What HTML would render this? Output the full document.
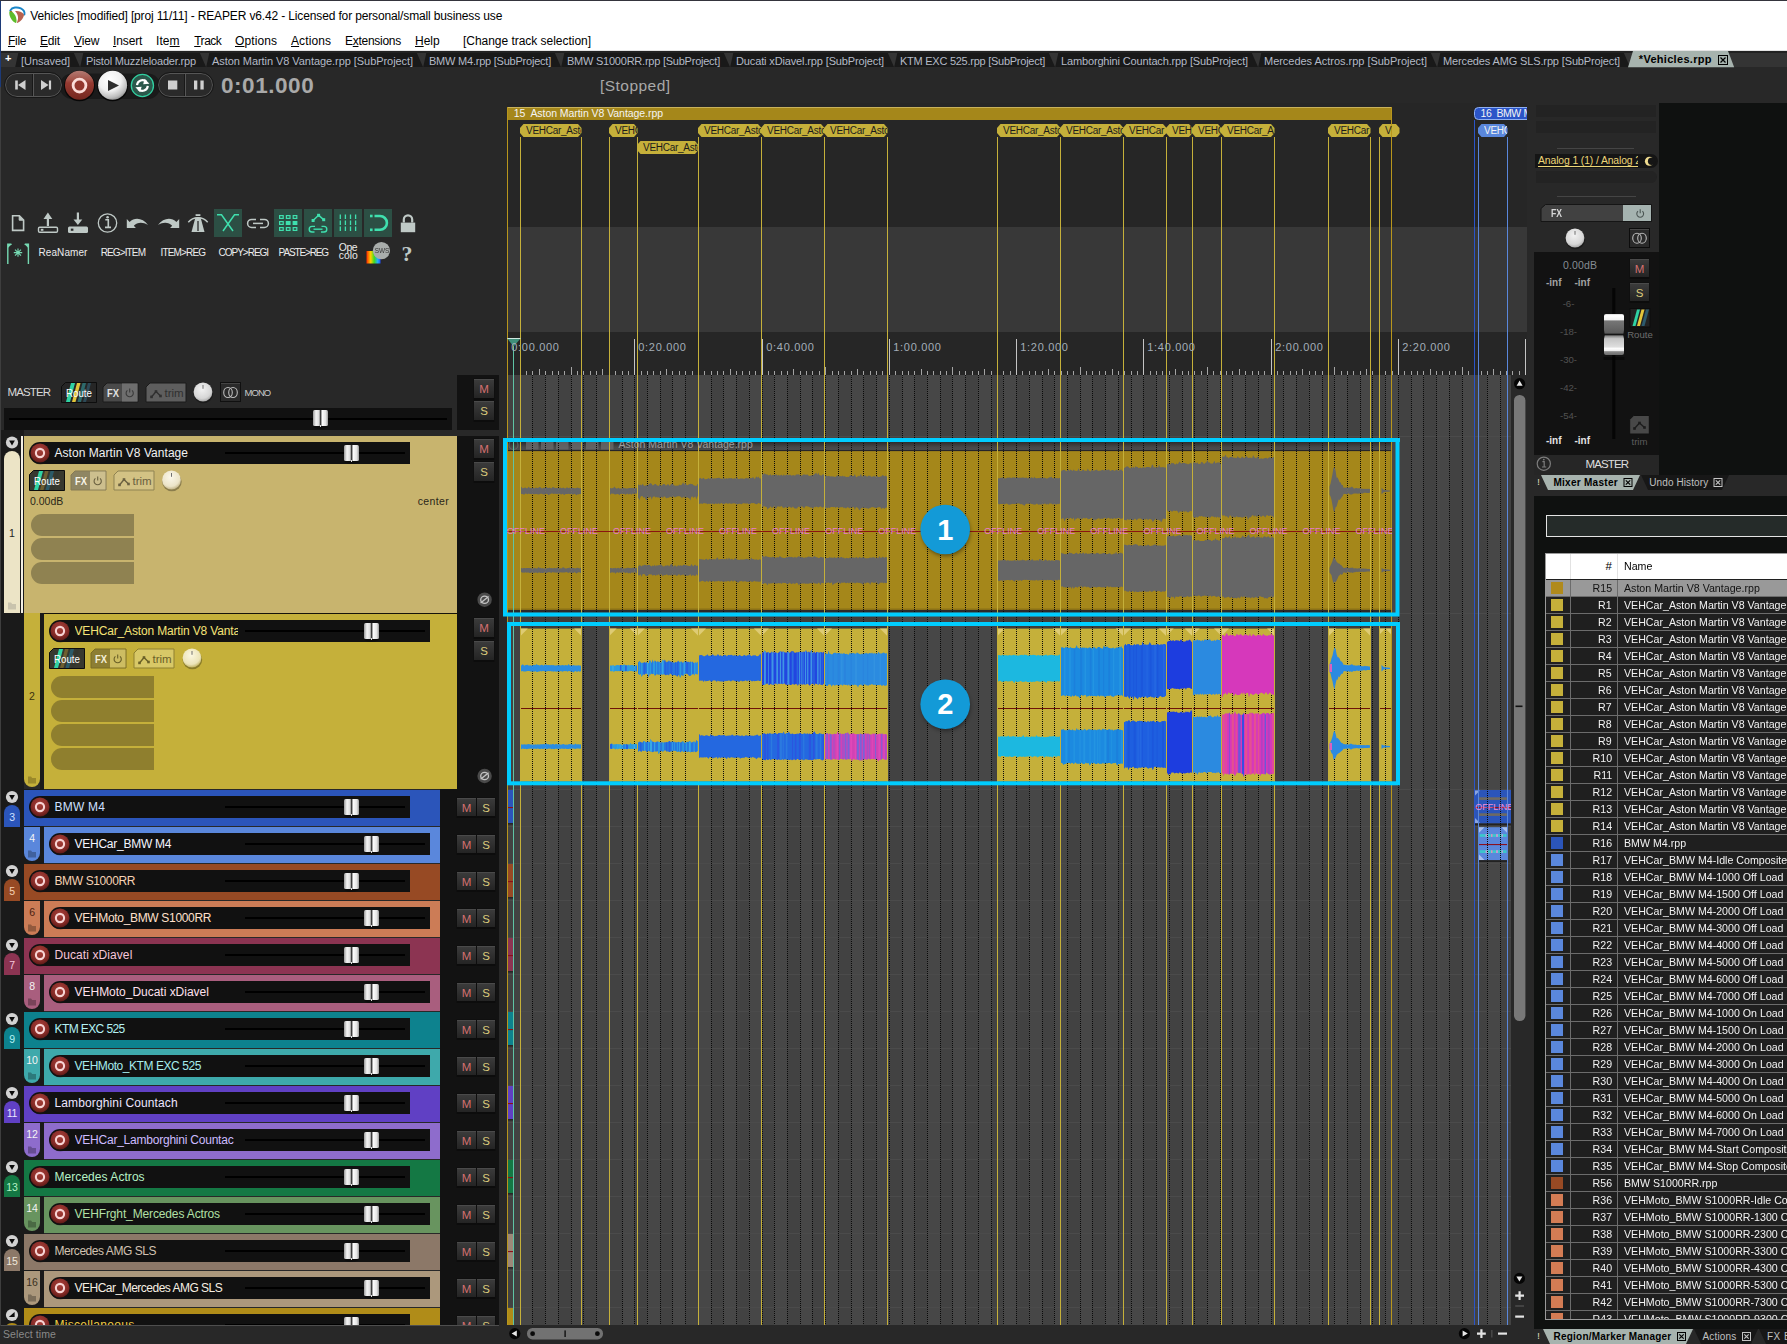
<!DOCTYPE html>
<html><head><meta charset="utf-8"><title>Vehicles [modified] [proj 11/11] - REAPER v6.42</title>
<style>
html,body{margin:0;padding:0;background:#282828;}
body{width:1787px;height:1344px;overflow:hidden;position:relative;font-family:"Liberation Sans", sans-serif;}
#app{position:absolute;left:0;top:0;width:1787px;height:1344px;overflow:hidden;background:#282828;}
#app div,#app svg{position:absolute;box-sizing:border-box;}
#app svg{overflow:visible;}
#app div.r{position:relative;}
u{text-decoration:underline;text-underline-offset:1px;}
</style></head><body><div id="app">
<div style="left:0px;top:0px;width:1787px;height:51px;background:#ffffff;"></div>
<div style="left:0px;top:0px;width:1787px;height:1px;background:#34343c;"></div>
<svg style="left:4px;top:2px;" width="30" height="28" viewBox="0 0 30 28">
<path d="M6.3 8.4 C8.2 5.2 13.2 4.7 16.8 6.4 C19.8 7.9 20.9 10.2 20.4 12.6" fill="none" stroke="#1a86c9" stroke-width="1.9" stroke-linecap="round"/>
<path d="M5.3 9.4 L7.6 9.3 C10.5 11.5 13.2 15.5 12.4 20.6 L11.6 20.9 C8.5 19.5 4.8 15 5.3 9.4 Z" fill="#5cbd2b"/>
<path d="M5.6 9 L7.8 9.2 L8.6 10.2 L6.4 9.9 Z" fill="#9a6a10"/>
<path d="M11 9 C14 8.6 17.5 9.2 20 12.4 C19.8 15.5 17 19.5 13.4 20.9 L12.9 20.6 C14.6 17 14.8 13 11 9 Z" fill="#b7624f"/>
</svg>
<div style="top:10.04px;font-size:12px;line-height:12px;color:#000;white-space:nowrap;letter-spacing:-0.14px;left:30.3px;">Vehicles [modified] [proj 11/11] - REAPER v6.42 - Licensed for personal/small business use</div>
<div style="top:34.84px;font-size:12px;line-height:12px;color:#000;white-space:nowrap;letter-spacing:-0.286px;left:8px;"><u>F</u>ile</div>
<div style="top:34.84px;font-size:12px;line-height:12px;color:#000;white-space:nowrap;letter-spacing:-0.171px;left:40px;"><u>E</u>dit</div>
<div style="top:34.84px;font-size:12px;line-height:12px;color:#000;white-space:nowrap;letter-spacing:-0.125px;left:74px;"><u>V</u>iew</div>
<div style="top:34.84px;font-size:12px;line-height:12px;color:#000;white-space:nowrap;letter-spacing:-0.12px;left:113px;"><u>I</u>nsert</div>
<div style="top:34.84px;font-size:12px;line-height:12px;color:#000;white-space:nowrap;letter-spacing:0.089px;left:156px;">Ite<u>m</u></div>
<div style="top:34.84px;font-size:12px;line-height:12px;color:#000;white-space:nowrap;letter-spacing:-0.472px;left:194.2px;"><u>T</u>rack</div>
<div style="top:34.84px;font-size:12px;line-height:12px;color:#000;white-space:nowrap;letter-spacing:0.09px;left:235px;"><u>O</u>ptions</div>
<div style="top:34.84px;font-size:12px;line-height:12px;color:#000;white-space:nowrap;letter-spacing:0.092px;left:291px;"><u>A</u>ctions</div>
<div style="top:34.84px;font-size:12px;line-height:12px;color:#000;white-space:nowrap;letter-spacing:-0.271px;left:345px;">E<u>x</u>tensions</div>
<div style="top:34.84px;font-size:12px;line-height:12px;color:#000;white-space:nowrap;letter-spacing:0.003px;left:415px;"><u>H</u>elp</div>
<div style="top:34.84px;font-size:12px;line-height:12px;color:#000;white-space:nowrap;letter-spacing:-0.032px;left:463px;">[Change track selection]</div>
<div style="left:0px;top:50px;width:1787px;height:1px;background:#e4e4e4;"></div>
<div style="left:0px;top:51px;width:1787px;height:16px;background:#343434;"></div>
<div style="left:0px;top:51px;width:1787px;height:2px;background:#222222;"></div>
<svg style="left:0px;top:51px;" width="1787" height="16" viewBox="0 0 1787 16"><polygon points="15.2,16 18.3,2 73.9,2 80.0,16" fill="#191919"/><polygon points="80.2,16 83.3,2 199.9,2 206.0,16" fill="#191919"/><polygon points="206.2,16 209.3,2 416.9,2 423.0,16" fill="#191919"/><polygon points="423.2,16 426.3,2 554.9,2 561.0,16" fill="#191919"/><polygon points="561.2,16 564.3,2 723.9,2 730.0,16" fill="#191919"/><polygon points="730.2,16 733.3,2 887.9,2 894.0,16" fill="#191919"/><polygon points="894.2,16 897.3,2 1048.9,2 1055.0,16" fill="#191919"/><polygon points="1055.2,16 1058.3,2 1251.9,2 1258.0,16" fill="#191919"/><polygon points="1258.2,16 1261.3,2 1430.9,2 1437.0,16" fill="#191919"/><polygon points="1437.2,16 1440.3,2 1623.9,2 1630.0,16" fill="#191919"/></svg>
<div style="top:56.09px;font-size:11px;line-height:11px;color:#b4bac6;white-space:nowrap;letter-spacing:-0.058px;left:21px;">[Unsaved]</div>
<div style="top:56.09px;font-size:11px;line-height:11px;color:#b4bac6;white-space:nowrap;letter-spacing:-0.162px;left:86px;">Pistol Muzzleloader.rpp</div>
<div style="top:56.09px;font-size:11px;line-height:11px;color:#b4bac6;white-space:nowrap;letter-spacing:-0.06px;left:212px;">Aston Martin V8 Vantage.rpp [SubProject]</div>
<div style="top:56.09px;font-size:11px;line-height:11px;color:#b4bac6;white-space:nowrap;letter-spacing:-0.224px;left:429px;">BMW M4.rpp [SubProject]</div>
<div style="top:56.09px;font-size:11px;line-height:11px;color:#b4bac6;white-space:nowrap;letter-spacing:-0.234px;left:567px;">BMW S1000RR.rpp [SubProject]</div>
<div style="top:56.09px;font-size:11px;line-height:11px;color:#b4bac6;white-space:nowrap;letter-spacing:-0.136px;left:736px;">Ducati xDiavel.rpp [SubProject]</div>
<div style="top:56.09px;font-size:11px;line-height:11px;color:#b4bac6;white-space:nowrap;letter-spacing:-0.258px;left:900px;">KTM EXC 525.rpp [SubProject]</div>
<div style="top:56.09px;font-size:11px;line-height:11px;color:#b4bac6;white-space:nowrap;letter-spacing:-0.151px;left:1061px;">Lamborghini Countach.rpp [SubProject]</div>
<div style="top:56.09px;font-size:11px;line-height:11px;color:#b4bac6;white-space:nowrap;letter-spacing:-0.026px;left:1264px;">Mercedes Actros.rpp [SubProject]</div>
<div style="top:56.09px;font-size:11px;line-height:11px;color:#b4bac6;white-space:nowrap;letter-spacing:-0.138px;left:1443px;">Mercedes AMG SLS.rpp [SubProject]</div>
<div style="top:53.29px;font-size:11px;line-height:11px;color:#fff;white-space:nowrap;font-weight:bold;left:4.9px;">+</div>
<svg style="left:1625px;top:51px;" width="120" height="17" viewBox="0 0 120 17"><polygon points="3,16.3 8,0 103,0 109.2,16.3" fill="#a7b3ae"/></svg>
<div style="top:53.69px;font-size:11px;line-height:11px;color:#000;white-space:nowrap;font-weight:bold;letter-spacing:0.301px;left:1638.8px;">*Vehicles.rpp</div>
<svg style="left:1717.5px;top:54.7px;" width="11" height="11" viewBox="0 0 11 11"><rect x="0.5" y="0.5" width="9" height="9" fill="none" stroke="#000" stroke-width="1"/><path d="M2.5 2.5 L7.5 7.5 M7.5 2.5 L2.5 7.5" stroke="#000" stroke-width="1.2"/></svg>
<div style="left:0px;top:1px;width:1px;height:86px;background:#1c3a78;"></div>
<div style="left:0px;top:87px;width:1px;height:1257px;background:#3e3e3e;"></div>
<svg style="left:0px;top:67px;" width="230" height="40" viewBox="0 0 230 40">
<defs>
<linearGradient id="gRec" x1="0" y1="0" x2="0" y2="1"><stop offset="0" stop-color="#b27a72"/><stop offset="0.3" stop-color="#a4544a"/><stop offset="0.42" stop-color="#963a31"/><stop offset="1" stop-color="#74271f"/></linearGradient>
<radialGradient id="gPlay" cx="40%" cy="30%" r="78%"><stop offset="0" stop-color="#ffffff"/><stop offset="0.5" stop-color="#f0f0f0"/><stop offset="0.8" stop-color="#bdbdbd"/><stop offset="1" stop-color="#7c7c7c"/></radialGradient>
</defs>
<rect x="60" y="6.5" width="100" height="25.5" rx="12" fill="#1a1a1a"/>
<rect x="5.5" y="6.5" width="56" height="23" rx="11.5" fill="#2a2a2a" stroke="#565656"/>
<rect x="4.5" y="5.5" width="58" height="25" rx="12.5" fill="none" stroke="#161616"/>
<path d="M33.5 7 V29" stroke="#565656"/><path d="M32.5 7 V29" stroke="#181818"/>
<path d="M16 13.5 V22.5 M17 13.5 V22.5" stroke="#cfcfcf" stroke-width="1.6"/><polygon points="25.5,13 25.5,23 18,18" fill="#cfcfcf"/>
<polygon points="41,13 41,23 48.5,18" fill="#cfcfcf"/><path d="M50 13.5 V22.5" stroke="#cfcfcf" stroke-width="2.2"/>
<circle cx="79.5" cy="18.9" r="15.4" fill="#070707"/>
<circle cx="79.5" cy="18.3" r="14.5" fill="url(#gRec)"/>
<circle cx="79.5" cy="18.6" r="6.4" fill="#93362d" stroke="#fbdcd8" stroke-width="2.8"/>
<circle cx="112.6" cy="18.9" r="15.4" fill="#070707"/>
<circle cx="112.6" cy="18.3" r="14.5" fill="url(#gPlay)"/>
<polygon points="108,13 108,24 119,18.5" fill="#2e2e2e"/>
<circle cx="142.4" cy="18.5" r="11.1" fill="#2b584b" stroke="#31cfa0" stroke-width="1.3"/>
<path d="M137 18.2 A5.5 5.5 0 0 1 146.4 14.8" fill="none" stroke="#fff" stroke-width="2.1"/><polygon points="144.6,11.8 149.4,16.8 143.2,17.3" fill="#fff"/>
<path d="M147.8 18.8 A5.5 5.5 0 0 1 138.4 22.2" fill="none" stroke="#fff" stroke-width="2.1"/><polygon points="140.2,25.2 135.4,20.2 141.6,19.7" fill="#fff"/>
<rect x="158.5" y="6.5" width="54" height="23" rx="11.5" fill="#2a2a2a" stroke="#565656"/>
<rect x="157.5" y="5.5" width="56" height="25" rx="12.5" fill="none" stroke="#161616"/>
<path d="M185.5 7 V29" stroke="#565656"/><path d="M184.5 7 V29" stroke="#181818"/>
<rect x="168" y="13.5" width="9.3" height="9" fill="#cfcfcf"/>
<rect x="194" y="13.5" width="3.3" height="9" fill="#cfcfcf"/><rect x="200.4" y="13.5" width="3.3" height="9" fill="#cfcfcf"/>
</svg>
<div style="top:74.65px;font-size:22.5px;line-height:22.5px;color:#a9a9a9;white-space:nowrap;font-weight:bold;letter-spacing:0.55px;left:221px;">0:01.000</div>
<div style="top:78.28px;font-size:15.5px;line-height:15.5px;color:#a9a9a9;white-space:nowrap;letter-spacing:0.46px;left:600px;">[Stopped]</div>
<svg style="left:0px;top:200px;" width="430" height="40" viewBox="0 0 430 40">
<g fill="none" stroke="#bfc9c6" stroke-width="1.6">
<path d="M12.6 15.8 H19.4 L23.6 20 V30.4 H12.6 Z" /><path d="M19.2 16 V20.2 H23.4 Z" stroke-width="1" fill="#bfc9c6"/>
</g>
<g fill="#bfc9c6">
<rect x="46.8" y="17" width="2.2" height="9"/><polygon points="43.5,19 52.3,19 47.9,12.5"/>
<rect x="38.5" y="27.2" width="19" height="5" rx="1.2" fill="none" stroke="#bfc9c6" stroke-width="1.4"/><rect x="40.8" y="28.8" width="2.6" height="2"/>
<rect x="76.8" y="12.5" width="2.2" height="8"/><polygon points="73.5,19.5 82.3,19.5 77.9,25"/>
<rect x="68" y="26.5" width="20" height="6.5" rx="1.5"/><rect x="70.8" y="28.6" width="2.6" height="2.2" fill="#282828"/>
</g>
<circle cx="107.5" cy="23" r="9.2" fill="none" stroke="#bfc9c6" stroke-width="1.3"/>
<path d="M105.3 19.8 H108.3 V27.2 M105 27.4 H111" fill="none" stroke="#bfc9c6" stroke-width="1.6"/><circle cx="107.6" cy="17.2" r="1.3" fill="#bfc9c6"/>
<path d="M126.8 19 V27.9 H135.9 L133.8 25.8 C137 22.3 142.5 21.6 148 24.9 C143 18.3 135 16.7 129.6 22 Z" fill="#bfc9c6"/>
<path d="M179.2 19 V27.9 H170.1 L172.2 25.8 C169 22.3 163.5 21.6 158 24.9 C163 18.3 171 16.7 176.4 22 Z" fill="#bfc9c6"/>
<path d="M188.3 22.2 C193 16.2 203 16.2 207.7 22.2" fill="none" stroke="#bfc9c6" stroke-width="1.4"/>
<polygon points="195.4,17.5 200.6,17.5 204.5,32 191.5,32" fill="#bfc9c6"/><rect x="195.6" y="14.2" width="4.8" height="1.8" fill="#bfc9c6"/>
<path d="M198 21 V31" stroke="#282828" stroke-width="1.3"/>
<rect x="214" y="9" width="28" height="28" fill="#2c4f44"/>
<path d="M217 14.8 H221.5 L233 31 M239 14.8 H234.5 L223 31" fill="none" stroke="#3fe0ae" stroke-width="1.5"/>
<path d="M256 27.4 H251.6 A4 4 0 0 1 251.6 19.4 H256 M260 19.4 H264.4 A4 4 0 0 1 264.4 27.4 H260" stroke="#bfc9c6" stroke-width="1.5" fill="none"/>
<path d="M253 23.4 H263" stroke="#bfc9c6" stroke-width="1.5"/>
<rect x="274" y="9" width="28" height="28" fill="#2c4f44"/>
<g fill="none" stroke="#3fe0ae" stroke-width="1.2">
<rect x="279.6" y="15.6" width="3.6" height="2.8"/><rect x="286.4" y="15.6" width="3.6" height="2.8"/><rect x="293.2" y="15.6" width="3.6" height="2.8"/>
<rect x="279.6" y="21.6" width="3.6" height="2.8"/><rect x="286.4" y="21.6" width="3.6" height="2.8" fill="#3fe0ae"/><rect x="293.2" y="21.6" width="3.6" height="2.8" fill="#3fe0ae"/>
<rect x="279.6" y="27.6" width="3.6" height="2.8"/><rect x="286.4" y="27.6" width="3.6" height="2.8"/><rect x="293.2" y="27.6" width="3.6" height="2.8"/>
</g>
<rect x="304" y="9" width="28" height="28" fill="#2c4f44"/>
<path d="M313 20.5 L318.6 15.2 L323.6 19.6" fill="none" stroke="#3fe0ae" stroke-width="1.5"/>
<rect x="311.6" y="19" width="3" height="3" fill="#3fe0ae"/><rect x="317.1" y="13.8" width="3" height="3" fill="#3fe0ae"/><rect x="322.2" y="18.2" width="3" height="3" fill="#3fe0ae"/>
<path d="M314.5 32 H312 A2.8 2.8 0 0 1 312 26.4 H315 M321.5 26.4 H324 A2.8 2.8 0 0 1 324 32 H321" fill="none" stroke="#3fe0ae" stroke-width="1.4"/><path d="M313.5 29.2 H322.5" stroke="#3fe0ae" stroke-width="1.4"/>
<rect x="334" y="9" width="28" height="28" fill="#2c4f44"/>
<g stroke="#3fe0ae" stroke-width="1.3" stroke-dasharray="4.4 1.6"><path d="M340.3 14.6 V32"/><path d="M345.4 14.6 V32"/><path d="M350.5 14.6 V32"/><path d="M355.6 14.6 V32"/></g>
<rect x="364" y="9" width="28" height="28" fill="#2c4f44"/>
<path d="M374.5 16 H380 A6.9 6.9 0 0 1 380 29.8 H374.5" fill="none" stroke="#3fe0ae" stroke-width="2.6"/>
<rect x="370" y="14.7" width="2.6" height="2.6" fill="#3fe0ae"/><rect x="370" y="28.5" width="2.6" height="2.6" fill="#3fe0ae"/>
<rect x="400.8" y="22.6" width="14.4" height="9.6" fill="#bfc9c6"/>
<path d="M403.8 22.6 V19.6 A4.2 4.2 0 0 1 412.2 19.6 V22.6" fill="none" stroke="#bfc9c6" stroke-width="2.2"/>
</svg>
<svg style="left:0px;top:200px;" width="430" height="70" viewBox="0 0 430 70">
<path d="M7.8 64 V44.2 H11.4 M28.4 64 V44.2 H24.8" fill="none" stroke="#76d9b2" stroke-width="1.4"/>
<polygon points="7.8,44 12,44 7.8,48" fill="#76d9b2"/><polygon points="28.4,44 24.2,44 28.4,48" fill="#76d9b2"/>
<g stroke="#76d9b2" stroke-width="1.1"><path d="M18 48.4 V56.8 M13.8 52.6 H22.2 M15 49.6 L21 55.6 M21 49.6 L15 55.6"/></g>
<defs><linearGradient id="rb" x1="0" x2="1"><stop offset="0" stop-color="#ff2a00"/><stop offset="0.3" stop-color="#ffd000"/><stop offset="0.55" stop-color="#3edc20"/><stop offset="0.8" stop-color="#20b0ff"/><stop offset="1" stop-color="#2050ff"/></linearGradient></defs>
<polygon points="366.5,63.6 366.5,51 373,51 380.5,59 380.5,63.6" fill="url(#rb)"/>
<circle cx="381.4" cy="50.6" r="8.6" fill="#a9adab"/>
</svg>
<div style="top:247.53px;font-size:10px;line-height:10px;color:#ececec;white-space:nowrap;letter-spacing:0.08px;left:38.5px;">ReaNamer</div>
<div style="top:247.53px;font-size:10px;line-height:10px;color:#ececec;white-space:nowrap;letter-spacing:-0.875px;left:100.7px;">REG&gt;ITEM</div>
<div style="top:247.53px;font-size:10px;line-height:10px;color:#ececec;white-space:nowrap;letter-spacing:-0.838px;left:160.5px;">ITEM&gt;REG</div>
<div style="top:247.53px;font-size:10px;line-height:10px;color:#ececec;white-space:nowrap;letter-spacing:-1.015px;left:218.6px;">COPY&gt;REGI</div>
<div style="top:247.53px;font-size:10px;line-height:10px;color:#ececec;white-space:nowrap;letter-spacing:-1.13px;left:278.6px;">PASTE&gt;REG</div>
<div style="top:242.90px;font-size:10.4px;line-height:10.4px;color:#ececec;white-space:nowrap;letter-spacing:-0.384px;left:338.7px;">Ope</div>
<div style="top:251.30px;font-size:10.4px;line-height:10.4px;color:#ececec;white-space:nowrap;letter-spacing:0.032px;left:338.7px;">colo</div>
<div style="top:247.23px;font-size:8px;line-height:8px;color:#333;white-space:nowrap;left:181.5px;width:400px;text-align:center;transform:scaleX(0.8);transform-origin:50% 0;">SWS</div>
<div style="top:242.88px;font-size:22px;line-height:22px;color:#bfc9c6;white-space:nowrap;font-weight:bold;left:401.5px;font-family:'Liberation Serif',serif;">?</div>
<svg style="left:0px;top:0px;" width="1" height="1" viewBox="0 0 1 1"><defs>
<radialGradient id="gRecS" cx="50%" cy="35%" r="70%"><stop offset="0" stop-color="#a8403a"/><stop offset="0.65" stop-color="#842a26"/><stop offset="1" stop-color="#541613"/></radialGradient>
<linearGradient id="gFad" x1="0" x2="1"><stop offset="0" stop-color="#9a9a9a"/><stop offset="0.2" stop-color="#f4f4f4"/><stop offset="0.42" stop-color="#d8d8d8"/><stop offset="0.47" stop-color="#333"/><stop offset="0.53" stop-color="#444"/><stop offset="0.6" stop-color="#ffffff"/><stop offset="0.85" stop-color="#e4e4e4"/><stop offset="1" stop-color="#9a9a9a"/></linearGradient>
<linearGradient id="gBtn" x1="0" y1="0" x2="0" y2="1"><stop offset="0" stop-color="#3c3c3c"/><stop offset="1" stop-color="#242424"/></linearGradient>
<radialGradient id="gKnob" cx="45%" cy="35%" r="70%"><stop offset="0" stop-color="#f2f2f2"/><stop offset="0.7" stop-color="#d6d6d6"/><stop offset="1" stop-color="#a0a0a0"/></radialGradient>
</defs></svg>
<div style="left:499px;top:103px;width:8px;height:1223px;background:#282828;"></div>
<div style="left:457px;top:375px;width:42px;height:55px;background:#121212;"></div>
<div style="left:4px;top:408px;width:448px;height:22px;background:#111111;"></div>
<div style="left:9px;top:418px;width:438px;height:2px;background:#000;"></div>
<svg style="left:0px;top:0px;" width="500" height="440" viewBox="0 0 500 440"><rect x="473.5" y="378.5" width="21" height="21.5" fill="#0c0c0c"/><rect x="474" y="379" width="20" height="19" fill="url(#gBtn)"/><rect x="474" y="379" width="20" height="1" fill="#4a4a4a"/><text x="484.0" y="393" font-size="11.5" fill="#d4706f" text-anchor="middle" font-family='"Liberation Sans", sans-serif'>M</text><rect x="473.5" y="400.5" width="21" height="21.5" fill="#0c0c0c"/><rect x="474" y="401" width="20" height="19" fill="url(#gBtn)"/><rect x="474" y="401" width="20" height="1" fill="#4a4a4a"/><text x="484.0" y="415" font-size="11.5" fill="#dccb7c" text-anchor="middle" font-family='"Liberation Sans", sans-serif'>S</text><ellipse cx="320.5" cy="426.5" rx="7" ry="2.6" fill="#000" opacity="0.28"/><rect x="313" y="410" width="15" height="16" rx="1.5" fill="url(#gFad)"/><rect x="320" y="425" width="1" height="2" fill="#ddd"/><path d="M61.5 402.5 V386.5 L65.5 382.5 H96.5 V402.5 Z" fill="#262626" stroke="#0d0d0d"/><clipPath id="rc62_383"><rect x="62" y="383" width="34" height="19"/></clipPath><g clip-path="url(#rc62_383)"><polygon points="66,402 71,383 75,383 70,402" fill="#2fd3a4"/><polygon points="72,402 77,383 80.5,383 75.5,402" fill="#e2c53a"/><polygon points="77.5,402 82.5,383 86,383 81,402" fill="#2d6a6c"/><polygon points="83,402 88,383 91,383 86,402" fill="#2d4a58"/></g><text x="79.0" y="397" font-size="10.6" fill="#fff" text-anchor="middle" font-family='"Liberation Sans", sans-serif' textLength="26" lengthAdjust="spacingAndGlyphs">Route</text><path d="M103 402 V387 L107 383 H138 V402 Z" fill="#4a4a4a" stroke="#1b1b1b" stroke-width="1"/><rect x="122" y="383.5" width="15.5" height="18" fill="#6e6e6e"/><text x="113" y="397" font-size="10.5" font-weight="bold" fill="#e0e0e0" text-anchor="middle" font-family='"Liberation Sans", sans-serif' textLength="12" lengthAdjust="spacingAndGlyphs">FX</text><path d="M127.39999999999999 390.4 A3.6 3.6 0 1 0 132.0 390.4" fill="none" stroke="#3a3a3a" stroke-width="1.1"/><path d="M129.7 388.4 V392.6" stroke="#3a3a3a" stroke-width="1.1"/><path d="M146 402 V387 L150 383 H186 V402 Z" fill="#5e5e5e" stroke="#1b1b1b" stroke-width="1"/><path d="M151.5 397 L156 391.5 L160.5 396" fill="none" stroke="#303030" stroke-width="1.4"/><rect x="150.2" y="395.6" width="2.6" height="2.6" fill="#303030"/><rect x="154.7" y="390.2" width="2.6" height="2.6" fill="#303030"/><rect x="159.2" y="394.7" width="2.6" height="2.6" fill="#303030"/><text x="164.5" y="397.2" font-size="11.5" fill="#303030" font-family='"Liberation Sans", sans-serif'>trim</text><radialGradient id="kM" cx="45%" cy="35%" r="70%"><stop offset="0" stop-color="#f2f2f2"/><stop offset="0.7" stop-color="#d6d6d6"/><stop offset="1" stop-color="#a0a0a0"/></radialGradient><ellipse cx="203.4" cy="393.8" rx="9.8" ry="9.4" fill="#000" opacity="0.3"/><circle cx="203" cy="392" r="9.4" fill="url(#kM)"/><path d="M203 385 V388.8" stroke="#707070" stroke-width="1"/><rect x="220.5" y="382.5" width="20" height="19" fill="#2a2a2a" stroke="#101010"/><rect x="221" y="383" width="19" height="1" fill="#444"/><ellipse cx="228" cy="392.5" rx="4.3" ry="5" fill="none" stroke="#bbb" stroke-width="1.1"/><ellipse cx="233" cy="392.5" rx="4.3" ry="5" fill="none" stroke="#bbb" stroke-width="1.1"/></svg>
<div style="top:386.77px;font-size:11.5px;line-height:11.5px;color:#d8d8d8;white-space:nowrap;letter-spacing:-0.887px;left:7.5px;">MASTER</div>
<div style="top:387.96px;font-size:9.5px;line-height:9.5px;color:#c8c8c8;white-space:nowrap;letter-spacing:-0.964px;left:244.5px;">MONO</div>
<div style="left:457px;top:436px;width:42px;height:353px;background:#121212;"></div>
<div style="left:440px;top:789px;width:59px;height:537px;background:#121212;"></div>
<div style="left:1px;top:430px;width:23px;height:896px;background:#1a1a1a;"></div>
<div style="left:24px;top:789px;width:20px;height:537px;background:#1a1a1a;"></div>
<div style="left:24px;top:436px;width:433px;height:177px;background:#c8b46e;"></div>
<div style="left:21px;top:436px;width:2px;height:177px;background:#f4f0e4;"></div>
<div style="left:4px;top:451px;width:16px;height:162px;background:#ece4c6;border-radius:8px 8px 0 0;"></div>
<div style="left:29px;top:442px;width:381px;height:21.5px;background:#111;border-radius:11px 0 0 11px;"></div>
<div style="left:225px;top:452px;width:180px;height:2px;background:#000;"></div>
<div style="left:31px;top:514px;width:103px;height:21.5px;background:#8f8251;border-radius:11px 0 0 11px;"></div>
<div style="left:31px;top:538px;width:103px;height:21.5px;background:#8f8251;border-radius:11px 0 0 11px;"></div>
<div style="left:31px;top:562px;width:103px;height:21.5px;background:#8f8251;border-radius:11px 0 0 11px;"></div>
<svg style="left:0px;top:0px;" width="500" height="620" viewBox="0 0 500 620"><circle cx="12" cy="442.5" r="6.1" fill="#d2d2d2"/><polygon points="9.1,440.5 14.9,440.5 12,445.4" fill="#0a0a0a"/><ellipse cx="40.3" cy="454.6" rx="10" ry="9.6" fill="#111" opacity="0.75"/><circle cx="40" cy="453" r="9.5" fill="url(#gRecS)"/><circle cx="40" cy="453" r="4.1" fill="none" stroke="#f7d4d4" stroke-width="2.1"/><ellipse cx="351.5" cy="461.5" rx="7" ry="2.6" fill="#000" opacity="0.28"/><rect x="344" y="445" width="15" height="16" rx="1.5" fill="url(#gFad)"/><rect x="351" y="460" width="1" height="2" fill="#ddd"/><path d="M29.5 490.5 V474.5 L33.5 470.5 H64.5 V490.5 Z" fill="#37382f" stroke="#0d0d0d"/><clipPath id="rc30_471"><rect x="30" y="471" width="34" height="19"/></clipPath><g clip-path="url(#rc30_471)"><polygon points="34,490 39,471 43,471 38,490" fill="#2fd3a4"/><polygon points="40,490 45,471 48.5,471 43.5,490" fill="#6e5f30"/><polygon points="45.5,490 50.5,471 54,471 49,490" fill="#2b5a68"/><polygon points="51,490 56,471 59,471 54,490" fill="#33362e"/></g><text x="47.0" y="485" font-size="10.6" fill="#fff" text-anchor="middle" font-family='"Liberation Sans", sans-serif' textLength="26" lengthAdjust="spacingAndGlyphs">Route</text><path d="M71 490 V475 L75 471 H106 V490 Z" fill="#8f8663" stroke="#857a55" stroke-width="1"/><rect x="90" y="471.5" width="15.5" height="18" fill="#cdbf8e"/><text x="81" y="485" font-size="10.5" font-weight="bold" fill="#f8f4e6" text-anchor="middle" font-family='"Liberation Sans", sans-serif' textLength="12" lengthAdjust="spacingAndGlyphs">FX</text><path d="M95.4 478.4 A3.6 3.6 0 1 0 100.0 478.4" fill="none" stroke="#6a6040" stroke-width="1.1"/><path d="M97.7 476.4 V480.6" stroke="#6a6040" stroke-width="1.1"/><path d="M114 490 V475 L118 471 H154 V490 Z" fill="#d3c284" stroke="#8f8352" stroke-width="1"/><path d="M119.5 485 L124 479.5 L128.5 484" fill="none" stroke="#6a6040" stroke-width="1.4"/><rect x="118.2" y="483.6" width="2.6" height="2.6" fill="#6a6040"/><rect x="122.7" y="478.2" width="2.6" height="2.6" fill="#6a6040"/><rect x="127.2" y="482.7" width="2.6" height="2.6" fill="#6a6040"/><text x="132.5" y="485.2" font-size="11.5" fill="#6a6040" font-family='"Liberation Sans", sans-serif'>trim</text><radialGradient id="k1" cx="45%" cy="35%" r="70%"><stop offset="0" stop-color="#fbf7ea"/><stop offset="0.7" stop-color="#ece4c8"/><stop offset="1" stop-color="#b8a878"/></radialGradient><ellipse cx="171.9" cy="481.8" rx="9.8" ry="9.4" fill="#000" opacity="0.3"/><circle cx="171.5" cy="480" r="9.4" fill="url(#k1)"/><path d="M171.5 473 V476.8" stroke="#707070" stroke-width="1"/><rect x="473.5" y="438.5" width="21" height="21.5" fill="#0c0c0c"/><rect x="474" y="439" width="20" height="19" fill="url(#gBtn)"/><rect x="474" y="439" width="20" height="1" fill="#4a4a4a"/><text x="484.0" y="453" font-size="11.5" fill="#d4706f" text-anchor="middle" font-family='"Liberation Sans", sans-serif'>M</text><rect x="473.5" y="461.5" width="21" height="21.5" fill="#0c0c0c"/><rect x="474" y="462" width="20" height="19" fill="url(#gBtn)"/><rect x="474" y="462" width="20" height="1" fill="#4a4a4a"/><text x="484.0" y="476" font-size="11.5" fill="#dccb7c" text-anchor="middle" font-family='"Liberation Sans", sans-serif'>S</text><circle cx="484.6" cy="599.7" r="7.2" fill="#4a4a4a"/><ellipse cx="484.6" cy="599.7" rx="3.9" ry="3.6" fill="none" stroke="#c4c4c4" stroke-width="1.3"/><path d="M480.6 603 L488.6 596.4" stroke="#c4c4c4" stroke-width="1.3"/><path d="M8 602.5 H11 L12.2 604 H16 V609.5 H8 Z" fill="#c9c3ad"/></svg>
<div style="top:447.14px;font-size:12px;line-height:12px;color:#f2f2f2;white-space:nowrap;letter-spacing:0.045px;left:54.5px;">Aston Martin V8 Vantage</div>
<div style="top:496.41px;font-size:10.5px;line-height:10.5px;color:#2a2618;white-space:nowrap;letter-spacing:0.008px;left:30px;">0.00dB</div>
<div style="top:496.41px;font-size:10.5px;line-height:10.5px;color:#2a2618;white-space:nowrap;letter-spacing:0.351px;right:1338px;text-align:right;">center</div>
<div style="top:528.11px;font-size:10.5px;line-height:10.5px;color:#222;white-space:nowrap;left:-188px;width:400px;text-align:center;">1</div>
<div style="left:44px;top:614px;width:413px;height:175px;background:#c5b03a;"></div>
<div style="left:24px;top:613px;width:433px;height:1px;background:#15130a;"></div>
<div style="left:24px;top:613px;width:16px;height:174px;background:#c5b03a;border-radius:0 0 8px 8px;"></div>
<div style="left:40px;top:613px;width:4px;height:176px;background:#1a1a1a;"></div>
<div style="left:49px;top:620px;width:381px;height:21.5px;background:#111;border-radius:11px 0 0 11px;"></div>
<div style="left:245px;top:630px;width:180px;height:2px;background:#000;"></div>
<div style="left:51px;top:676.3px;width:103px;height:21.5px;background:#8f7f2e;border-radius:11px 0 0 11px;"></div>
<div style="left:51px;top:700.1999999999999px;width:103px;height:21.5px;background:#8f7f2e;border-radius:11px 0 0 11px;"></div>
<div style="left:51px;top:724.0999999999999px;width:103px;height:21.5px;background:#8f7f2e;border-radius:11px 0 0 11px;"></div>
<div style="left:51px;top:748.0px;width:103px;height:21.5px;background:#8f7f2e;border-radius:11px 0 0 11px;"></div>
<svg style="left:0px;top:0px;" width="500" height="800" viewBox="0 0 500 800"><ellipse cx="60.3" cy="632.6" rx="10" ry="9.6" fill="#111" opacity="0.75"/><circle cx="60" cy="631" r="9.5" fill="url(#gRecS)"/><circle cx="60" cy="631" r="4.1" fill="none" stroke="#f7d4d4" stroke-width="2.1"/><ellipse cx="371.5" cy="639.5" rx="7" ry="2.6" fill="#000" opacity="0.28"/><rect x="364" y="623" width="15" height="16" rx="1.5" fill="url(#gFad)"/><rect x="371" y="638" width="1" height="2" fill="#ddd"/><path d="M49.5 668.5 V652.5 L53.5 648.5 H84.5 V668.5 Z" fill="#37382f" stroke="#0d0d0d"/><clipPath id="rc50_649"><rect x="50" y="649" width="34" height="19"/></clipPath><g clip-path="url(#rc50_649)"><polygon points="54,668 59,649 63,649 58,668" fill="#2fd3a4"/><polygon points="60,668 65,649 68.5,649 63.5,668" fill="#6e5f30"/><polygon points="65.5,668 70.5,649 74,649 69,668" fill="#2b5a68"/><polygon points="71,668 76,649 79,649 74,668" fill="#33362e"/></g><text x="67.0" y="663" font-size="10.6" fill="#fff" text-anchor="middle" font-family='"Liberation Sans", sans-serif' textLength="26" lengthAdjust="spacingAndGlyphs">Route</text><path d="M91 668 V653 L95 649 H126 V668 Z" fill="#8d7e33" stroke="#7a6c24" stroke-width="1"/><rect x="110" y="649.5" width="15.5" height="18" fill="#cdbd62"/><text x="101" y="663" font-size="10.5" font-weight="bold" fill="#f4eed8" text-anchor="middle" font-family='"Liberation Sans", sans-serif' textLength="12" lengthAdjust="spacingAndGlyphs">FX</text><path d="M115.4 656.4 A3.6 3.6 0 1 0 120.0 656.4" fill="none" stroke="#6a6028" stroke-width="1.1"/><path d="M117.7 654.4 V658.6" stroke="#6a6028" stroke-width="1.1"/><path d="M134 668 V653 L138 649 H174 V668 Z" fill="#d8c867" stroke="#8f8030" stroke-width="1"/><path d="M139.5 663 L144 657.5 L148.5 662" fill="none" stroke="#6a6028" stroke-width="1.4"/><rect x="138.2" y="661.6" width="2.6" height="2.6" fill="#6a6028"/><rect x="142.7" y="656.2" width="2.6" height="2.6" fill="#6a6028"/><rect x="147.2" y="660.7" width="2.6" height="2.6" fill="#6a6028"/><text x="152.5" y="663.2" font-size="11.5" fill="#6a6028" font-family='"Liberation Sans", sans-serif'>trim</text><radialGradient id="k2" cx="45%" cy="35%" r="70%"><stop offset="0" stop-color="#fbf7e0"/><stop offset="0.7" stop-color="#ece4b8"/><stop offset="1" stop-color="#b8a850"/></radialGradient><ellipse cx="192.4" cy="659.8" rx="9.8" ry="9.4" fill="#000" opacity="0.3"/><circle cx="192" cy="658" r="9.4" fill="url(#k2)"/><path d="M192 651 V654.8" stroke="#707070" stroke-width="1"/><rect x="473.5" y="617.5" width="21" height="21.5" fill="#0c0c0c"/><rect x="474" y="618" width="20" height="19" fill="url(#gBtn)"/><rect x="474" y="618" width="20" height="1" fill="#4a4a4a"/><text x="484.0" y="632" font-size="11.5" fill="#d4706f" text-anchor="middle" font-family='"Liberation Sans", sans-serif'>M</text><rect x="473.5" y="640.5" width="21" height="21.5" fill="#0c0c0c"/><rect x="474" y="641" width="20" height="19" fill="url(#gBtn)"/><rect x="474" y="641" width="20" height="1" fill="#4a4a4a"/><text x="484.0" y="655" font-size="11.5" fill="#dccb7c" text-anchor="middle" font-family='"Liberation Sans", sans-serif'>S</text><circle cx="484.6" cy="776" r="7.2" fill="#4a4a4a"/><ellipse cx="484.6" cy="776" rx="3.9" ry="3.6" fill="none" stroke="#c4c4c4" stroke-width="1.3"/><path d="M480.6 779.3 L488.6 772.7" stroke="#c4c4c4" stroke-width="1.3"/><path d="M28 776.5 H31 L32.2 778 H36 V783.5 H28 Z" fill="#9a882a"/></svg>
<div style="top:625.14px;font-size:12px;line-height:12px;color:#f6e478;white-space:nowrap;letter-spacing:-0.158px;left:74.5px;width:163.5px;height:17.4px;overflow:hidden;">VEHCar_Aston Martin V8 Vantage</div>
<div style="top:691.41px;font-size:10.5px;line-height:10.5px;color:#3a3210;white-space:nowrap;left:-168px;width:400px;text-align:center;">2</div>
<div style="left:24px;top:790px;width:416px;height:36px;background:#2b55ba;"></div>
<div style="left:4px;top:805px;width:16px;height:22px;background:#2b55ba;border-radius:8px 8px 0 0;"></div>
<div style="left:29px;top:796px;width:381px;height:22px;background:#111;border-radius:11px 0 0 11px;"></div>
<div style="left:225px;top:806px;width:180px;height:2px;background:#000;"></div>
<div style="top:801.04px;font-size:12px;line-height:12px;color:#cfe0ff;white-space:nowrap;letter-spacing:0.194px;left:54.5px;">BMW M4</div>
<div style="top:811.51px;font-size:10.5px;line-height:10.5px;color:#cfe0ff;white-space:nowrap;letter-spacing:-0.2px;left:-188px;width:400px;text-align:center;">3</div>
<div style="left:44px;top:827px;width:396px;height:36px;background:#5a87dc;"></div>
<div style="left:24px;top:827px;width:16px;height:34px;background:#5a87dc;border-radius:0 0 8px 8px;"></div>
<div style="left:49px;top:833px;width:381px;height:22px;background:#111;border-radius:11px 0 0 11px;"></div>
<div style="left:245px;top:843px;width:180px;height:2px;background:#000;"></div>
<div style="top:838.04px;font-size:12px;line-height:12px;color:#f4f6ff;white-space:nowrap;letter-spacing:-0.256px;left:74.5px;">VEHCar_BMW M4</div>
<div style="top:833.11px;font-size:10.5px;line-height:10.5px;color:#f4f4f4;white-space:nowrap;letter-spacing:-0.2px;left:-168px;width:400px;text-align:center;">4</div>
<div style="left:24px;top:864px;width:416px;height:36px;background:#974a24;"></div>
<div style="left:4px;top:879px;width:16px;height:22px;background:#974a24;border-radius:8px 8px 0 0;"></div>
<div style="left:29px;top:870px;width:381px;height:22px;background:#111;border-radius:11px 0 0 11px;"></div>
<div style="left:225px;top:880px;width:180px;height:2px;background:#000;"></div>
<div style="top:875.04px;font-size:12px;line-height:12px;color:#f6d2b4;white-space:nowrap;letter-spacing:-0.382px;left:54.5px;">BMW S1000RR</div>
<div style="top:885.51px;font-size:10.5px;line-height:10.5px;color:#f6d2b4;white-space:nowrap;letter-spacing:-0.2px;left:-188px;width:400px;text-align:center;">5</div>
<div style="left:44px;top:901px;width:396px;height:36px;background:#cc7c56;"></div>
<div style="left:24px;top:901px;width:16px;height:34px;background:#cc7c56;border-radius:0 0 8px 8px;"></div>
<div style="left:49px;top:907px;width:381px;height:22px;background:#111;border-radius:11px 0 0 11px;"></div>
<div style="left:245px;top:917px;width:180px;height:2px;background:#000;"></div>
<div style="top:912.04px;font-size:12px;line-height:12px;color:#ffe0cc;white-space:nowrap;letter-spacing:-0.318px;left:74.5px;">VEHMoto_BMW S1000RR</div>
<div style="top:907.11px;font-size:10.5px;line-height:10.5px;color:#4a2010;white-space:nowrap;letter-spacing:-0.2px;left:-168px;width:400px;text-align:center;">6</div>
<div style="left:24px;top:938px;width:416px;height:36px;background:#8c3452;"></div>
<div style="left:4px;top:953px;width:16px;height:22px;background:#8c3452;border-radius:8px 8px 0 0;"></div>
<div style="left:29px;top:944px;width:381px;height:22px;background:#111;border-radius:11px 0 0 11px;"></div>
<div style="left:225px;top:954px;width:180px;height:2px;background:#000;"></div>
<div style="top:949.04px;font-size:12px;line-height:12px;color:#f6c6da;white-space:nowrap;letter-spacing:0.085px;left:54.5px;">Ducati xDiavel</div>
<div style="top:959.51px;font-size:10.5px;line-height:10.5px;color:#f6c6da;white-space:nowrap;letter-spacing:-0.2px;left:-188px;width:400px;text-align:center;">7</div>
<div style="left:44px;top:975px;width:396px;height:36px;background:#a95e7e;"></div>
<div style="left:24px;top:975px;width:16px;height:34px;background:#a95e7e;border-radius:0 0 8px 8px;"></div>
<div style="left:49px;top:981px;width:381px;height:22px;background:#111;border-radius:11px 0 0 11px;"></div>
<div style="left:245px;top:991px;width:180px;height:2px;background:#000;"></div>
<div style="top:986.04px;font-size:12px;line-height:12px;color:#ffe0ee;white-space:nowrap;letter-spacing:-0.016px;left:74.5px;">VEHMoto_Ducati xDiavel</div>
<div style="top:981.11px;font-size:10.5px;line-height:10.5px;color:#f4f4f4;white-space:nowrap;letter-spacing:-0.2px;left:-168px;width:400px;text-align:center;">8</div>
<div style="left:24px;top:1012px;width:416px;height:36px;background:#0d828e;"></div>
<div style="left:4px;top:1027px;width:16px;height:22px;background:#0d828e;border-radius:8px 8px 0 0;"></div>
<div style="left:29px;top:1018px;width:381px;height:22px;background:#111;border-radius:11px 0 0 11px;"></div>
<div style="left:225px;top:1028px;width:180px;height:2px;background:#000;"></div>
<div style="top:1023.04px;font-size:12px;line-height:12px;color:#b4f2f4;white-space:nowrap;letter-spacing:-0.592px;left:54.5px;">KTM EXC 525</div>
<div style="top:1033.51px;font-size:10.5px;line-height:10.5px;color:#b4f2f4;white-space:nowrap;letter-spacing:-0.2px;left:-188px;width:400px;text-align:center;">9</div>
<div style="left:44px;top:1049px;width:396px;height:36px;background:#3ea9ab;"></div>
<div style="left:24px;top:1049px;width:16px;height:34px;background:#3ea9ab;border-radius:0 0 8px 8px;"></div>
<div style="left:49px;top:1055px;width:381px;height:22px;background:#111;border-radius:11px 0 0 11px;"></div>
<div style="left:245px;top:1065px;width:180px;height:2px;background:#000;"></div>
<div style="top:1060.04px;font-size:12px;line-height:12px;color:#a6ecec;white-space:nowrap;letter-spacing:-0.439px;left:74.5px;">VEHMoto_KTM EXC 525</div>
<div style="top:1055.11px;font-size:10.5px;line-height:10.5px;color:#f4f4f4;white-space:nowrap;letter-spacing:-0.2px;left:-168px;width:400px;text-align:center;">10</div>
<div style="left:24px;top:1086px;width:416px;height:36px;background:#6040c4;"></div>
<div style="left:4px;top:1101px;width:16px;height:22px;background:#6040c4;border-radius:8px 8px 0 0;"></div>
<div style="left:29px;top:1092px;width:381px;height:22px;background:#111;border-radius:11px 0 0 11px;"></div>
<div style="left:225px;top:1102px;width:180px;height:2px;background:#000;"></div>
<div style="top:1097.04px;font-size:12px;line-height:12px;color:#ece6ff;white-space:nowrap;letter-spacing:0.126px;left:54.5px;">Lamborghini Countach</div>
<div style="top:1107.51px;font-size:10.5px;line-height:10.5px;color:#ece6ff;white-space:nowrap;letter-spacing:-0.2px;left:-188px;width:400px;text-align:center;">11</div>
<div style="left:44px;top:1123px;width:396px;height:36px;background:#8e6ccc;"></div>
<div style="left:24px;top:1123px;width:16px;height:34px;background:#8e6ccc;border-radius:0 0 8px 8px;"></div>
<div style="left:49px;top:1129px;width:381px;height:22px;background:#111;border-radius:11px 0 0 11px;"></div>
<div style="left:245px;top:1139px;width:180px;height:2px;background:#000;"></div>
<div style="top:1134.04px;font-size:12px;line-height:12px;color:#cdbcff;white-space:nowrap;letter-spacing:-0.223px;left:74.5px;width:163.5px;height:17.4px;overflow:hidden;">VEHCar_Lamborghini Countac</div>
<div style="top:1129.11px;font-size:10.5px;line-height:10.5px;color:#f4f4f4;white-space:nowrap;letter-spacing:-0.2px;left:-168px;width:400px;text-align:center;">12</div>
<div style="left:24px;top:1160px;width:416px;height:36px;background:#147844;"></div>
<div style="left:4px;top:1175px;width:16px;height:22px;background:#147844;border-radius:8px 8px 0 0;"></div>
<div style="left:29px;top:1166px;width:381px;height:22px;background:#111;border-radius:11px 0 0 11px;"></div>
<div style="left:225px;top:1176px;width:180px;height:2px;background:#000;"></div>
<div style="top:1171.04px;font-size:12px;line-height:12px;color:#b6f2c6;white-space:nowrap;letter-spacing:0.054px;left:54.5px;">Mercedes Actros</div>
<div style="top:1181.51px;font-size:10.5px;line-height:10.5px;color:#b6f2c6;white-space:nowrap;letter-spacing:-0.2px;left:-188px;width:400px;text-align:center;">13</div>
<div style="left:44px;top:1197px;width:396px;height:36px;background:#68945f;"></div>
<div style="left:24px;top:1197px;width:16px;height:34px;background:#68945f;border-radius:0 0 8px 8px;"></div>
<div style="left:49px;top:1203px;width:381px;height:22px;background:#111;border-radius:11px 0 0 11px;"></div>
<div style="left:245px;top:1213px;width:180px;height:2px;background:#000;"></div>
<div style="top:1208.04px;font-size:12px;line-height:12px;color:#b2e0a6;white-space:nowrap;letter-spacing:-0.135px;left:74.5px;">VEHFrght_Mercedes Actros</div>
<div style="top:1203.11px;font-size:10.5px;line-height:10.5px;color:#f4f4f4;white-space:nowrap;letter-spacing:-0.2px;left:-168px;width:400px;text-align:center;">14</div>
<div style="left:24px;top:1234px;width:416px;height:36px;background:#8c7868;"></div>
<div style="left:4px;top:1249px;width:16px;height:22px;background:#8c7868;border-radius:8px 8px 0 0;"></div>
<div style="left:29px;top:1240px;width:381px;height:22px;background:#111;border-radius:11px 0 0 11px;"></div>
<div style="left:225px;top:1250px;width:180px;height:2px;background:#000;"></div>
<div style="top:1245.04px;font-size:12px;line-height:12px;color:#d2c2b2;white-space:nowrap;letter-spacing:-0.445px;left:54.5px;">Mercedes AMG SLS</div>
<div style="top:1255.51px;font-size:10.5px;line-height:10.5px;color:#f0e8dc;white-space:nowrap;letter-spacing:-0.2px;left:-188px;width:400px;text-align:center;">15</div>
<div style="left:44px;top:1271px;width:396px;height:36px;background:#ac987c;"></div>
<div style="left:24px;top:1271px;width:16px;height:34px;background:#ac987c;border-radius:0 0 8px 8px;"></div>
<div style="left:49px;top:1277px;width:381px;height:22px;background:#111;border-radius:11px 0 0 11px;"></div>
<div style="left:245px;top:1287px;width:180px;height:2px;background:#000;"></div>
<div style="top:1282.04px;font-size:12px;line-height:12px;color:#f6efe2;white-space:nowrap;letter-spacing:-0.505px;left:74.5px;">VEHCar_Mercedes AMG SLS</div>
<div style="top:1277.11px;font-size:10.5px;line-height:10.5px;color:#3a3020;white-space:nowrap;letter-spacing:-0.2px;left:-168px;width:400px;text-align:center;">16</div>
<div style="left:24px;top:1308px;width:416px;height:36px;background:#b08c18;"></div>
<div style="left:4px;top:1323px;width:16px;height:22px;background:#b08c18;border-radius:8px 8px 0 0;"></div>
<div style="left:29px;top:1314px;width:381px;height:22px;background:#111;border-radius:11px 0 0 11px;"></div>
<div style="left:225px;top:1324px;width:180px;height:2px;background:#000;"></div>
<div style="top:1319.04px;font-size:12px;line-height:12px;color:#f0cc44;white-space:nowrap;letter-spacing:0.303px;left:54.5px;">Miscellaneous</div>
<div style="top:1329.51px;font-size:10.5px;line-height:10.5px;color:#f0cc44;white-space:nowrap;letter-spacing:-0.2px;left:-188px;width:400px;text-align:center;">17</div>
<div style="left:0;top:0;width:500px;height:1326px;overflow:hidden;">
<svg style="left:0px;top:0px;" width="500" height="1326" viewBox="0 0 500 1326"><circle cx="12" cy="797" r="6.1" fill="#d2d2d2"/><polygon points="9.1,795 14.9,795 12,799.9" fill="#0a0a0a"/><ellipse cx="40.3" cy="808.6" rx="10" ry="9.6" fill="#111" opacity="0.75"/><circle cx="40" cy="807" r="9.5" fill="url(#gRecS)"/><circle cx="40" cy="807" r="4.1" fill="none" stroke="#f7d4d4" stroke-width="2.1"/><ellipse cx="351.5" cy="815.5" rx="7" ry="2.6" fill="#000" opacity="0.28"/><rect x="344" y="799" width="15" height="16" rx="1.5" fill="url(#gFad)"/><rect x="351" y="814" width="1" height="2" fill="#ddd"/><rect x="456.5" y="797.5" width="20" height="20.5" fill="#0c0c0c"/><rect x="457" y="798" width="19" height="18" fill="url(#gBtn)"/><rect x="457" y="798" width="19" height="1" fill="#4a4a4a"/><text x="466.5" y="812" font-size="11.5" fill="#d4706f" text-anchor="middle" font-family='"Liberation Sans", sans-serif'>M</text><rect x="476.5" y="797.5" width="19" height="20.5" fill="#0c0c0c"/><rect x="477" y="798" width="18" height="18" fill="url(#gBtn)"/><rect x="477" y="798" width="18" height="1" fill="#4a4a4a"/><text x="486.0" y="812" font-size="11.5" fill="#dccb7c" text-anchor="middle" font-family='"Liberation Sans", sans-serif'>S</text><ellipse cx="60.3" cy="845.6" rx="10" ry="9.6" fill="#111" opacity="0.75"/><circle cx="60" cy="844" r="9.5" fill="url(#gRecS)"/><circle cx="60" cy="844" r="4.1" fill="none" stroke="#f7d4d4" stroke-width="2.1"/><ellipse cx="371.5" cy="852.5" rx="7" ry="2.6" fill="#000" opacity="0.28"/><rect x="364" y="836" width="15" height="16" rx="1.5" fill="url(#gFad)"/><rect x="371" y="851" width="1" height="2" fill="#ddd"/><path d="M28 850.5 H31 L32.2 852 H36 V857.5 H28 Z" fill="#40619e"/><rect x="456.5" y="834.5" width="20" height="20.5" fill="#0c0c0c"/><rect x="457" y="835" width="19" height="18" fill="url(#gBtn)"/><rect x="457" y="835" width="19" height="1" fill="#4a4a4a"/><text x="466.5" y="849" font-size="11.5" fill="#d4706f" text-anchor="middle" font-family='"Liberation Sans", sans-serif'>M</text><rect x="476.5" y="834.5" width="19" height="20.5" fill="#0c0c0c"/><rect x="477" y="835" width="18" height="18" fill="url(#gBtn)"/><rect x="477" y="835" width="18" height="1" fill="#4a4a4a"/><text x="486.0" y="849" font-size="11.5" fill="#dccb7c" text-anchor="middle" font-family='"Liberation Sans", sans-serif'>S</text><circle cx="12" cy="871" r="6.1" fill="#d2d2d2"/><polygon points="9.1,869 14.9,869 12,873.9" fill="#0a0a0a"/><ellipse cx="40.3" cy="882.6" rx="10" ry="9.6" fill="#111" opacity="0.75"/><circle cx="40" cy="881" r="9.5" fill="url(#gRecS)"/><circle cx="40" cy="881" r="4.1" fill="none" stroke="#f7d4d4" stroke-width="2.1"/><ellipse cx="351.5" cy="889.5" rx="7" ry="2.6" fill="#000" opacity="0.28"/><rect x="344" y="873" width="15" height="16" rx="1.5" fill="url(#gFad)"/><rect x="351" y="888" width="1" height="2" fill="#ddd"/><rect x="456.5" y="871.5" width="20" height="20.5" fill="#0c0c0c"/><rect x="457" y="872" width="19" height="18" fill="url(#gBtn)"/><rect x="457" y="872" width="19" height="1" fill="#4a4a4a"/><text x="466.5" y="886" font-size="11.5" fill="#d4706f" text-anchor="middle" font-family='"Liberation Sans", sans-serif'>M</text><rect x="476.5" y="871.5" width="19" height="20.5" fill="#0c0c0c"/><rect x="477" y="872" width="18" height="18" fill="url(#gBtn)"/><rect x="477" y="872" width="18" height="1" fill="#4a4a4a"/><text x="486.0" y="886" font-size="11.5" fill="#dccb7c" text-anchor="middle" font-family='"Liberation Sans", sans-serif'>S</text><ellipse cx="60.3" cy="919.6" rx="10" ry="9.6" fill="#111" opacity="0.75"/><circle cx="60" cy="918" r="9.5" fill="url(#gRecS)"/><circle cx="60" cy="918" r="4.1" fill="none" stroke="#f7d4d4" stroke-width="2.1"/><ellipse cx="371.5" cy="926.5" rx="7" ry="2.6" fill="#000" opacity="0.28"/><rect x="364" y="910" width="15" height="16" rx="1.5" fill="url(#gFad)"/><rect x="371" y="925" width="1" height="2" fill="#ddd"/><path d="M28 924.5 H31 L32.2 926 H36 V931.5 H28 Z" fill="#92593d"/><rect x="456.5" y="908.5" width="20" height="20.5" fill="#0c0c0c"/><rect x="457" y="909" width="19" height="18" fill="url(#gBtn)"/><rect x="457" y="909" width="19" height="1" fill="#4a4a4a"/><text x="466.5" y="923" font-size="11.5" fill="#d4706f" text-anchor="middle" font-family='"Liberation Sans", sans-serif'>M</text><rect x="476.5" y="908.5" width="19" height="20.5" fill="#0c0c0c"/><rect x="477" y="909" width="18" height="18" fill="url(#gBtn)"/><rect x="477" y="909" width="18" height="1" fill="#4a4a4a"/><text x="486.0" y="923" font-size="11.5" fill="#dccb7c" text-anchor="middle" font-family='"Liberation Sans", sans-serif'>S</text><circle cx="12" cy="945" r="6.1" fill="#d2d2d2"/><polygon points="9.1,943 14.9,943 12,947.9" fill="#0a0a0a"/><ellipse cx="40.3" cy="956.6" rx="10" ry="9.6" fill="#111" opacity="0.75"/><circle cx="40" cy="955" r="9.5" fill="url(#gRecS)"/><circle cx="40" cy="955" r="4.1" fill="none" stroke="#f7d4d4" stroke-width="2.1"/><ellipse cx="351.5" cy="963.5" rx="7" ry="2.6" fill="#000" opacity="0.28"/><rect x="344" y="947" width="15" height="16" rx="1.5" fill="url(#gFad)"/><rect x="351" y="962" width="1" height="2" fill="#ddd"/><rect x="456.5" y="945.5" width="20" height="20.5" fill="#0c0c0c"/><rect x="457" y="946" width="19" height="18" fill="url(#gBtn)"/><rect x="457" y="946" width="19" height="1" fill="#4a4a4a"/><text x="466.5" y="960" font-size="11.5" fill="#d4706f" text-anchor="middle" font-family='"Liberation Sans", sans-serif'>M</text><rect x="476.5" y="945.5" width="19" height="20.5" fill="#0c0c0c"/><rect x="477" y="946" width="18" height="18" fill="url(#gBtn)"/><rect x="477" y="946" width="18" height="1" fill="#4a4a4a"/><text x="486.0" y="960" font-size="11.5" fill="#dccb7c" text-anchor="middle" font-family='"Liberation Sans", sans-serif'>S</text><ellipse cx="60.3" cy="993.6" rx="10" ry="9.6" fill="#111" opacity="0.75"/><circle cx="60" cy="992" r="9.5" fill="url(#gRecS)"/><circle cx="60" cy="992" r="4.1" fill="none" stroke="#f7d4d4" stroke-width="2.1"/><ellipse cx="371.5" cy="1000.5" rx="7" ry="2.6" fill="#000" opacity="0.28"/><rect x="364" y="984" width="15" height="16" rx="1.5" fill="url(#gFad)"/><rect x="371" y="999" width="1" height="2" fill="#ddd"/><path d="M28 998.5 H31 L32.2 1000 H36 V1005.5 H28 Z" fill="#79435a"/><rect x="456.5" y="982.5" width="20" height="20.5" fill="#0c0c0c"/><rect x="457" y="983" width="19" height="18" fill="url(#gBtn)"/><rect x="457" y="983" width="19" height="1" fill="#4a4a4a"/><text x="466.5" y="997" font-size="11.5" fill="#d4706f" text-anchor="middle" font-family='"Liberation Sans", sans-serif'>M</text><rect x="476.5" y="982.5" width="19" height="20.5" fill="#0c0c0c"/><rect x="477" y="983" width="18" height="18" fill="url(#gBtn)"/><rect x="477" y="983" width="18" height="1" fill="#4a4a4a"/><text x="486.0" y="997" font-size="11.5" fill="#dccb7c" text-anchor="middle" font-family='"Liberation Sans", sans-serif'>S</text><circle cx="12" cy="1019" r="6.1" fill="#d2d2d2"/><polygon points="9.1,1017 14.9,1017 12,1021.9" fill="#0a0a0a"/><ellipse cx="40.3" cy="1030.6" rx="10" ry="9.6" fill="#111" opacity="0.75"/><circle cx="40" cy="1029" r="9.5" fill="url(#gRecS)"/><circle cx="40" cy="1029" r="4.1" fill="none" stroke="#f7d4d4" stroke-width="2.1"/><ellipse cx="351.5" cy="1037.5" rx="7" ry="2.6" fill="#000" opacity="0.28"/><rect x="344" y="1021" width="15" height="16" rx="1.5" fill="url(#gFad)"/><rect x="351" y="1036" width="1" height="2" fill="#ddd"/><rect x="456.5" y="1019.5" width="20" height="20.5" fill="#0c0c0c"/><rect x="457" y="1020" width="19" height="18" fill="url(#gBtn)"/><rect x="457" y="1020" width="19" height="1" fill="#4a4a4a"/><text x="466.5" y="1034" font-size="11.5" fill="#d4706f" text-anchor="middle" font-family='"Liberation Sans", sans-serif'>M</text><rect x="476.5" y="1019.5" width="19" height="20.5" fill="#0c0c0c"/><rect x="477" y="1020" width="18" height="18" fill="url(#gBtn)"/><rect x="477" y="1020" width="18" height="1" fill="#4a4a4a"/><text x="486.0" y="1034" font-size="11.5" fill="#dccb7c" text-anchor="middle" font-family='"Liberation Sans", sans-serif'>S</text><ellipse cx="60.3" cy="1067.6" rx="10" ry="9.6" fill="#111" opacity="0.75"/><circle cx="60" cy="1066" r="9.5" fill="url(#gRecS)"/><circle cx="60" cy="1066" r="4.1" fill="none" stroke="#f7d4d4" stroke-width="2.1"/><ellipse cx="371.5" cy="1074.5" rx="7" ry="2.6" fill="#000" opacity="0.28"/><rect x="364" y="1058" width="15" height="16" rx="1.5" fill="url(#gFad)"/><rect x="371" y="1073" width="1" height="2" fill="#ddd"/><path d="M28 1072.5 H31 L32.2 1074 H36 V1079.5 H28 Z" fill="#2c797b"/><rect x="456.5" y="1056.5" width="20" height="20.5" fill="#0c0c0c"/><rect x="457" y="1057" width="19" height="18" fill="url(#gBtn)"/><rect x="457" y="1057" width="19" height="1" fill="#4a4a4a"/><text x="466.5" y="1071" font-size="11.5" fill="#d4706f" text-anchor="middle" font-family='"Liberation Sans", sans-serif'>M</text><rect x="476.5" y="1056.5" width="19" height="20.5" fill="#0c0c0c"/><rect x="477" y="1057" width="18" height="18" fill="url(#gBtn)"/><rect x="477" y="1057" width="18" height="1" fill="#4a4a4a"/><text x="486.0" y="1071" font-size="11.5" fill="#dccb7c" text-anchor="middle" font-family='"Liberation Sans", sans-serif'>S</text><circle cx="12" cy="1093" r="6.1" fill="#d2d2d2"/><polygon points="9.1,1091 14.9,1091 12,1095.9" fill="#0a0a0a"/><ellipse cx="40.3" cy="1104.6" rx="10" ry="9.6" fill="#111" opacity="0.75"/><circle cx="40" cy="1103" r="9.5" fill="url(#gRecS)"/><circle cx="40" cy="1103" r="4.1" fill="none" stroke="#f7d4d4" stroke-width="2.1"/><ellipse cx="351.5" cy="1111.5" rx="7" ry="2.6" fill="#000" opacity="0.28"/><rect x="344" y="1095" width="15" height="16" rx="1.5" fill="url(#gFad)"/><rect x="351" y="1110" width="1" height="2" fill="#ddd"/><rect x="456.5" y="1093.5" width="20" height="20.5" fill="#0c0c0c"/><rect x="457" y="1094" width="19" height="18" fill="url(#gBtn)"/><rect x="457" y="1094" width="19" height="1" fill="#4a4a4a"/><text x="466.5" y="1108" font-size="11.5" fill="#d4706f" text-anchor="middle" font-family='"Liberation Sans", sans-serif'>M</text><rect x="476.5" y="1093.5" width="19" height="20.5" fill="#0c0c0c"/><rect x="477" y="1094" width="18" height="18" fill="url(#gBtn)"/><rect x="477" y="1094" width="18" height="1" fill="#4a4a4a"/><text x="486.0" y="1108" font-size="11.5" fill="#dccb7c" text-anchor="middle" font-family='"Liberation Sans", sans-serif'>S</text><ellipse cx="60.3" cy="1141.6" rx="10" ry="9.6" fill="#111" opacity="0.75"/><circle cx="60" cy="1140" r="9.5" fill="url(#gRecS)"/><circle cx="60" cy="1140" r="4.1" fill="none" stroke="#f7d4d4" stroke-width="2.1"/><ellipse cx="371.5" cy="1148.5" rx="7" ry="2.6" fill="#000" opacity="0.28"/><rect x="364" y="1132" width="15" height="16" rx="1.5" fill="url(#gFad)"/><rect x="371" y="1147" width="1" height="2" fill="#ddd"/><path d="M28 1146.5 H31 L32.2 1148 H36 V1153.5 H28 Z" fill="#664d92"/><rect x="456.5" y="1130.5" width="20" height="20.5" fill="#0c0c0c"/><rect x="457" y="1131" width="19" height="18" fill="url(#gBtn)"/><rect x="457" y="1131" width="19" height="1" fill="#4a4a4a"/><text x="466.5" y="1145" font-size="11.5" fill="#d4706f" text-anchor="middle" font-family='"Liberation Sans", sans-serif'>M</text><rect x="476.5" y="1130.5" width="19" height="20.5" fill="#0c0c0c"/><rect x="477" y="1131" width="18" height="18" fill="url(#gBtn)"/><rect x="477" y="1131" width="18" height="1" fill="#4a4a4a"/><text x="486.0" y="1145" font-size="11.5" fill="#dccb7c" text-anchor="middle" font-family='"Liberation Sans", sans-serif'>S</text><circle cx="12" cy="1167" r="6.1" fill="#d2d2d2"/><polygon points="9.1,1165 14.9,1165 12,1169.9" fill="#0a0a0a"/><ellipse cx="40.3" cy="1178.6" rx="10" ry="9.6" fill="#111" opacity="0.75"/><circle cx="40" cy="1177" r="9.5" fill="url(#gRecS)"/><circle cx="40" cy="1177" r="4.1" fill="none" stroke="#f7d4d4" stroke-width="2.1"/><ellipse cx="351.5" cy="1185.5" rx="7" ry="2.6" fill="#000" opacity="0.28"/><rect x="344" y="1169" width="15" height="16" rx="1.5" fill="url(#gFad)"/><rect x="351" y="1184" width="1" height="2" fill="#ddd"/><rect x="456.5" y="1167.5" width="20" height="20.5" fill="#0c0c0c"/><rect x="457" y="1168" width="19" height="18" fill="url(#gBtn)"/><rect x="457" y="1168" width="19" height="1" fill="#4a4a4a"/><text x="466.5" y="1182" font-size="11.5" fill="#d4706f" text-anchor="middle" font-family='"Liberation Sans", sans-serif'>M</text><rect x="476.5" y="1167.5" width="19" height="20.5" fill="#0c0c0c"/><rect x="477" y="1168" width="18" height="18" fill="url(#gBtn)"/><rect x="477" y="1168" width="18" height="1" fill="#4a4a4a"/><text x="486.0" y="1182" font-size="11.5" fill="#dccb7c" text-anchor="middle" font-family='"Liberation Sans", sans-serif'>S</text><ellipse cx="60.3" cy="1215.6" rx="10" ry="9.6" fill="#111" opacity="0.75"/><circle cx="60" cy="1214" r="9.5" fill="url(#gRecS)"/><circle cx="60" cy="1214" r="4.1" fill="none" stroke="#f7d4d4" stroke-width="2.1"/><ellipse cx="371.5" cy="1222.5" rx="7" ry="2.6" fill="#000" opacity="0.28"/><rect x="364" y="1206" width="15" height="16" rx="1.5" fill="url(#gFad)"/><rect x="371" y="1221" width="1" height="2" fill="#ddd"/><path d="M28 1220.5 H31 L32.2 1222 H36 V1227.5 H28 Z" fill="#4a6a44"/><rect x="456.5" y="1204.5" width="20" height="20.5" fill="#0c0c0c"/><rect x="457" y="1205" width="19" height="18" fill="url(#gBtn)"/><rect x="457" y="1205" width="19" height="1" fill="#4a4a4a"/><text x="466.5" y="1219" font-size="11.5" fill="#d4706f" text-anchor="middle" font-family='"Liberation Sans", sans-serif'>M</text><rect x="476.5" y="1204.5" width="19" height="20.5" fill="#0c0c0c"/><rect x="477" y="1205" width="18" height="18" fill="url(#gBtn)"/><rect x="477" y="1205" width="18" height="1" fill="#4a4a4a"/><text x="486.0" y="1219" font-size="11.5" fill="#dccb7c" text-anchor="middle" font-family='"Liberation Sans", sans-serif'>S</text><circle cx="12" cy="1241" r="6.1" fill="#d2d2d2"/><polygon points="9.1,1239 14.9,1239 12,1243.9" fill="#0a0a0a"/><ellipse cx="40.3" cy="1252.6" rx="10" ry="9.6" fill="#111" opacity="0.75"/><circle cx="40" cy="1251" r="9.5" fill="url(#gRecS)"/><circle cx="40" cy="1251" r="4.1" fill="none" stroke="#f7d4d4" stroke-width="2.1"/><ellipse cx="351.5" cy="1259.5" rx="7" ry="2.6" fill="#000" opacity="0.28"/><rect x="344" y="1243" width="15" height="16" rx="1.5" fill="url(#gFad)"/><rect x="351" y="1258" width="1" height="2" fill="#ddd"/><rect x="456.5" y="1241.5" width="20" height="20.5" fill="#0c0c0c"/><rect x="457" y="1242" width="19" height="18" fill="url(#gBtn)"/><rect x="457" y="1242" width="19" height="1" fill="#4a4a4a"/><text x="466.5" y="1256" font-size="11.5" fill="#d4706f" text-anchor="middle" font-family='"Liberation Sans", sans-serif'>M</text><rect x="476.5" y="1241.5" width="19" height="20.5" fill="#0c0c0c"/><rect x="477" y="1242" width="18" height="18" fill="url(#gBtn)"/><rect x="477" y="1242" width="18" height="1" fill="#4a4a4a"/><text x="486.0" y="1256" font-size="11.5" fill="#dccb7c" text-anchor="middle" font-family='"Liberation Sans", sans-serif'>S</text><ellipse cx="60.3" cy="1289.6" rx="10" ry="9.6" fill="#111" opacity="0.75"/><circle cx="60" cy="1288" r="9.5" fill="url(#gRecS)"/><circle cx="60" cy="1288" r="4.1" fill="none" stroke="#f7d4d4" stroke-width="2.1"/><ellipse cx="371.5" cy="1296.5" rx="7" ry="2.6" fill="#000" opacity="0.28"/><rect x="364" y="1280" width="15" height="16" rx="1.5" fill="url(#gFad)"/><rect x="371" y="1295" width="1" height="2" fill="#ddd"/><path d="M28 1294.5 H31 L32.2 1296 H36 V1301.5 H28 Z" fill="#7b6d59"/><rect x="456.5" y="1278.5" width="20" height="20.5" fill="#0c0c0c"/><rect x="457" y="1279" width="19" height="18" fill="url(#gBtn)"/><rect x="457" y="1279" width="19" height="1" fill="#4a4a4a"/><text x="466.5" y="1293" font-size="11.5" fill="#d4706f" text-anchor="middle" font-family='"Liberation Sans", sans-serif'>M</text><rect x="476.5" y="1278.5" width="19" height="20.5" fill="#0c0c0c"/><rect x="477" y="1279" width="18" height="18" fill="url(#gBtn)"/><rect x="477" y="1279" width="18" height="1" fill="#4a4a4a"/><text x="486.0" y="1293" font-size="11.5" fill="#dccb7c" text-anchor="middle" font-family='"Liberation Sans", sans-serif'>S</text><circle cx="12" cy="1315" r="6.1" fill="#d2d2d2"/><polygon points="8.8,1317 14.6,1312 14.6,1317" fill="#0a0a0a"/><ellipse cx="40.3" cy="1326.6" rx="10" ry="9.6" fill="#111" opacity="0.75"/><circle cx="40" cy="1325" r="9.5" fill="url(#gRecS)"/><circle cx="40" cy="1325" r="4.1" fill="none" stroke="#f7d4d4" stroke-width="2.1"/><ellipse cx="351.5" cy="1333.5" rx="7" ry="2.6" fill="#000" opacity="0.28"/><rect x="344" y="1317" width="15" height="16" rx="1.5" fill="url(#gFad)"/><rect x="351" y="1332" width="1" height="2" fill="#ddd"/><rect x="456.5" y="1315.5" width="20" height="20.5" fill="#0c0c0c"/><rect x="457" y="1316" width="19" height="18" fill="url(#gBtn)"/><rect x="457" y="1316" width="19" height="1" fill="#4a4a4a"/><text x="466.5" y="1330" font-size="11.5" fill="#d4706f" text-anchor="middle" font-family='"Liberation Sans", sans-serif'>M</text><rect x="476.5" y="1315.5" width="19" height="20.5" fill="#0c0c0c"/><rect x="477" y="1316" width="18" height="18" fill="url(#gBtn)"/><rect x="477" y="1316" width="18" height="1" fill="#4a4a4a"/><text x="486.0" y="1330" font-size="11.5" fill="#dccb7c" text-anchor="middle" font-family='"Liberation Sans", sans-serif'>S</text></svg>
</div>
<div style="left:0px;top:1326px;width:500px;height:18px;background:#282828;"></div>
<div style="left:1px;top:1325px;width:498px;height:1px;background:#4e4e4e;"></div>
<div style="top:1328.61px;font-size:10.5px;line-height:10.5px;color:#8a8a8a;white-space:nowrap;letter-spacing:0.1px;left:3px;">Select time</div>
<svg style="left:0px;top:0px;" width="1787" height="1344" viewBox="0 0 1787 1344"><defs><pattern id="dots" x="0" y="1" width="1" height="2" patternUnits="userSpaceOnUse"><rect x="0" y="0" width="1" height="1" fill="#0a0a0a"/></pattern><clipPath id="clipArr"><rect x="507" y="375" width="1004" height="950"/></clipPath><clipPath id="clipRul"><rect x="507" y="100" width="1020" height="1225"/></clipPath></defs><rect x="507" y="103" width="1020" height="124" fill="#262626"/><rect x="507" y="227" width="1020" height="105" fill="#383838"/><rect x="507" y="332" width="1020" height="43" fill="#262626"/><rect x="507" y="375" width="1004" height="950" fill="#474747"/><g clip-path="url(#clipArr)"><rect x="507" y="375" width="13" height="950" fill="#424242"/><rect x="532" y="375" width="13" height="950" fill="#424242"/><rect x="558" y="375" width="13" height="950" fill="#424242"/><rect x="583" y="375" width="13" height="950" fill="#424242"/><rect x="609" y="375" width="13" height="950" fill="#424242"/><rect x="634" y="375" width="13" height="950" fill="#424242"/><rect x="660" y="375" width="12" height="950" fill="#424242"/><rect x="685" y="375" width="13" height="950" fill="#424242"/><rect x="711" y="375" width="12" height="950" fill="#424242"/><rect x="736" y="375" width="13" height="950" fill="#424242"/><rect x="762" y="375" width="12" height="950" fill="#424242"/><rect x="787" y="375" width="13" height="950" fill="#424242"/><rect x="812" y="375" width="13" height="950" fill="#424242"/><rect x="838" y="375" width="13" height="950" fill="#424242"/><rect x="863" y="375" width="13" height="950" fill="#424242"/><rect x="889" y="375" width="13" height="950" fill="#424242"/><rect x="914" y="375" width="13" height="950" fill="#424242"/><rect x="940" y="375" width="12" height="950" fill="#424242"/><rect x="965" y="375" width="13" height="950" fill="#424242"/><rect x="991" y="375" width="12" height="950" fill="#424242"/><rect x="1016" y="375" width="13" height="950" fill="#424242"/><rect x="1042" y="375" width="12" height="950" fill="#424242"/><rect x="1067" y="375" width="13" height="950" fill="#424242"/><rect x="1092" y="375" width="13" height="950" fill="#424242"/><rect x="1118" y="375" width="13" height="950" fill="#424242"/><rect x="1143" y="375" width="13" height="950" fill="#424242"/><rect x="1169" y="375" width="13" height="950" fill="#424242"/><rect x="1194" y="375" width="13" height="950" fill="#424242"/><rect x="1220" y="375" width="12" height="950" fill="#424242"/><rect x="1245" y="375" width="13" height="950" fill="#424242"/><rect x="1271" y="375" width="12" height="950" fill="#424242"/><rect x="1296" y="375" width="13" height="950" fill="#424242"/><rect x="1322" y="375" width="12" height="950" fill="#424242"/><rect x="1347" y="375" width="13" height="950" fill="#424242"/><rect x="1372" y="375" width="13" height="950" fill="#424242"/><rect x="1398" y="375" width="13" height="950" fill="#424242"/><rect x="1423" y="375" width="13" height="950" fill="#424242"/><rect x="1449" y="375" width="13" height="950" fill="#424242"/><rect x="1474" y="375" width="13" height="950" fill="#424242"/><rect x="1500" y="375" width="12" height="950" fill="#424242"/><rect x="507" y="436" width="1004" height="1" fill="#4b4b4b"/><rect x="507" y="613" width="1004" height="1" fill="#4b4b4b"/><rect x="507" y="789" width="1004" height="1" fill="#4b4b4b"/><rect x="507" y="826" width="1004" height="1" fill="#4b4b4b"/><rect x="507" y="863" width="1004" height="1" fill="#4b4b4b"/><rect x="507" y="900" width="1004" height="1" fill="#4b4b4b"/><rect x="507" y="937" width="1004" height="1" fill="#4b4b4b"/><rect x="507" y="974" width="1004" height="1" fill="#4b4b4b"/><rect x="507" y="1011" width="1004" height="1" fill="#4b4b4b"/><rect x="507" y="1048" width="1004" height="1" fill="#4b4b4b"/><rect x="507" y="1085" width="1004" height="1" fill="#4b4b4b"/><rect x="507" y="1122" width="1004" height="1" fill="#4b4b4b"/><rect x="507" y="1159" width="1004" height="1" fill="#4b4b4b"/><rect x="507" y="1196" width="1004" height="1" fill="#4b4b4b"/><rect x="507" y="1233" width="1004" height="1" fill="#4b4b4b"/><rect x="507" y="1270" width="1004" height="1" fill="#4b4b4b"/><rect x="507" y="1307" width="1004" height="1" fill="#4b4b4b"/></g><linearGradient id="gHdr" x1="0" y1="0" x2="0" y2="1"><stop offset="0" stop-color="#2c2c2c"/><stop offset="0.6" stop-color="#484848"/><stop offset="1" stop-color="#4c4c4c"/></linearGradient><rect x="507" y="442" width="885" height="8.5" fill="url(#gHdr)"/><rect x="507" y="451" width="885" height="159" fill="#a5871a"/><rect x="507" y="610" width="885" height="2.5" fill="#2a2a2a"/><rect x="507" y="450.2" width="885" height="0.9" fill="#1c1c24"/><rect x="507" y="608.5" width="885" height="1.5" fill="#8a7016"/><rect x="1390.5" y="451" width="1.5" height="159" fill="#7e6614"/><g fill="#6a6a6a" opacity="0.8"><circle cx="513.5" cy="445" r="4.5" fill="none" stroke="#6a6a6a" stroke-width="1.2"/><rect x="526" y="442" width="12.5" height="7.5"/><rect x="541" y="442" width="12.5" height="7.5"/><rect x="556" y="442" width="12.5" height="7.5"/><rect x="571" y="442" width="12.5" height="7.5"/><rect x="586" y="442" width="12.5" height="7.5"/><rect x="601" y="442" width="12.5" height="7.5"/></g><rect x="520.5" y="617" width="61.0" height="11.6" fill="#403c38"/><rect x="520.5" y="628.6" width="61.0" height="153" fill="#c5b03a"/><polygon points="520.5,628.6 527.9,628.6 520.5,636.0" fill="#decb74"/><polygon points="581.5,628.6 574.1,628.6 581.5,636.0" fill="#decb74"/><rect x="609.3" y="617" width="28.0" height="11.6" fill="#403c38"/><rect x="609.3" y="628.6" width="28.0" height="153" fill="#c5b03a"/><polygon points="609.3,628.6 616.6999999999999,628.6 609.3,636.0" fill="#decb74"/><polygon points="637.3,628.6 629.9,628.6 637.3,636.0" fill="#decb74"/><rect x="637.5" y="617" width="60.9" height="11.6" fill="#403c38"/><rect x="637.5" y="628.6" width="60.9" height="153" fill="#c5b03a"/><polygon points="637.5,628.6 644.9,628.6 637.5,636.0" fill="#decb74"/><polygon points="698.4,628.6 691.0,628.6 698.4,636.0" fill="#decb74"/><rect x="698.6" y="617" width="62.7" height="11.6" fill="#403c38"/><rect x="698.6" y="628.6" width="62.7" height="153" fill="#c5b03a"/><polygon points="698.6,628.6 706.0,628.6 698.6,636.0" fill="#decb74"/><polygon points="761.3,628.6 753.9,628.6 761.3,636.0" fill="#decb74"/><rect x="761.5" y="617" width="62.9" height="11.6" fill="#403c38"/><rect x="761.5" y="628.6" width="62.9" height="153" fill="#c5b03a"/><polygon points="761.5,628.6 768.9,628.6 761.5,636.0" fill="#decb74"/><polygon points="824.4,628.6 817.0,628.6 824.4,636.0" fill="#decb74"/><rect x="824.6" y="617" width="62.7" height="11.6" fill="#403c38"/><rect x="824.6" y="628.6" width="62.7" height="153" fill="#c5b03a"/><polygon points="824.6,628.6 832.0,628.6 824.6,636.0" fill="#decb74"/><polygon points="887.3,628.6 879.9,628.6 887.3,636.0" fill="#decb74"/><rect x="997.3" y="617" width="63.0" height="11.6" fill="#403c38"/><rect x="997.3" y="628.6" width="63.0" height="153" fill="#c5b03a"/><polygon points="997.3,628.6 1004.6999999999999,628.6 997.3,636.0" fill="#decb74"/><polygon points="1060.3,628.6 1052.8999999999999,628.6 1060.3,636.0" fill="#decb74"/><rect x="1060.5" y="617" width="62.7" height="11.6" fill="#403c38"/><rect x="1060.5" y="628.6" width="62.7" height="153" fill="#c5b03a"/><polygon points="1060.5,628.6 1067.9,628.6 1060.5,636.0" fill="#decb74"/><polygon points="1123.2,628.6 1115.8,628.6 1123.2,636.0" fill="#decb74"/><rect x="1123.4" y="617" width="42.7" height="11.6" fill="#403c38"/><rect x="1123.4" y="628.6" width="42.7" height="153" fill="#c5b03a"/><polygon points="1123.4,628.6 1130.8000000000002,628.6 1123.4,636.0" fill="#decb74"/><polygon points="1166.1,628.6 1158.6999999999998,628.6 1166.1,636.0" fill="#decb74"/><rect x="1166.3" y="617" width="25.8" height="11.6" fill="#403c38"/><rect x="1166.3" y="628.6" width="25.8" height="153" fill="#c5b03a"/><polygon points="1166.3,628.6 1173.7,628.6 1166.3,636.0" fill="#decb74"/><polygon points="1192.1,628.6 1184.6999999999998,628.6 1192.1,636.0" fill="#decb74"/><rect x="1192.3" y="617" width="29.1" height="11.6" fill="#403c38"/><rect x="1192.3" y="628.6" width="29.1" height="153" fill="#c5b03a"/><polygon points="1192.3,628.6 1199.7,628.6 1192.3,636.0" fill="#decb74"/><polygon points="1221.4,628.6 1214.0,628.6 1221.4,636.0" fill="#decb74"/><rect x="1221.6" y="617" width="52.8" height="11.6" fill="#403c38"/><rect x="1221.6" y="628.6" width="52.8" height="153" fill="#c5b03a"/><polygon points="1221.6,628.6 1229.0,628.6 1221.6,636.0" fill="#decb74"/><polygon points="1274.4,628.6 1267.0,628.6 1274.4,636.0" fill="#decb74"/><rect x="1328.8" y="617" width="41.7" height="11.6" fill="#403c38"/><rect x="1328.8" y="628.6" width="41.7" height="153" fill="#c5b03a"/><polygon points="1328.8,628.6 1336.2,628.6 1328.8,636.0" fill="#decb74"/><polygon points="1370.5,628.6 1363.1,628.6 1370.5,636.0" fill="#decb74"/><rect x="1379.3" y="617" width="12.2" height="11.6" fill="#403c38"/><rect x="1379.3" y="628.6" width="12.2" height="153" fill="#c5b03a"/><polygon points="1379.3,628.6 1385.4,628.6 1379.3,634.7" fill="#decb74"/><polygon points="1391.5,628.6 1385.4,628.6 1391.5,634.7" fill="#decb74"/><rect x="508" y="790" width="5.2" height="33" fill="#2b55ba"/><rect x="508" y="823" width="5.2" height="1.6" fill="#262626"/><rect x="508" y="807" width="5.2" height="1.1" fill="#8a1018"/><rect x="508" y="864" width="5.2" height="33" fill="#974a24"/><rect x="508" y="897" width="5.2" height="1.6" fill="#262626"/><rect x="508" y="881" width="5.2" height="1.1" fill="#8a1018"/><rect x="508" y="938" width="5.2" height="33" fill="#8c3452"/><rect x="508" y="971" width="5.2" height="1.6" fill="#262626"/><rect x="508" y="955" width="5.2" height="1.1" fill="#8a1018"/><rect x="508" y="1012" width="5.2" height="33" fill="#0d828e"/><rect x="508" y="1045" width="5.2" height="1.6" fill="#262626"/><rect x="508" y="1029" width="5.2" height="1.1" fill="#8a1018"/><rect x="508" y="1086" width="5.2" height="33" fill="#6040c4"/><rect x="508" y="1119" width="5.2" height="1.6" fill="#262626"/><rect x="508" y="1103" width="5.2" height="1.1" fill="#8a1018"/><rect x="508" y="1160" width="5.2" height="33" fill="#147844"/><rect x="508" y="1193" width="5.2" height="1.6" fill="#262626"/><rect x="508" y="1177" width="5.2" height="1.1" fill="#8a1018"/><rect x="508" y="1234" width="5.2" height="33" fill="#9c8878"/><rect x="508" y="1267" width="5.2" height="1.6" fill="#262626"/><rect x="508" y="1251" width="5.2" height="1.1" fill="#8a1018"/><rect x="508" y="1308" width="5.2" height="17" fill="#b08c18"/><g clip-path="url(#clipArr)"><rect x="1475" y="790" width="40" height="33.5" fill="#2b55ba"/><rect x="1475" y="823.5" width="40" height="1.8" fill="#222"/><polygon points="1475,790.5 1480,790.5 1475,795.5" fill="#8aa4e0"/><polygon points="1475,823 1480,823 1475,818" fill="#8aa4e0"/><rect x="1479.2" y="797.3" width="27.6" height="2.6" fill="#6e6a62"/><rect x="1479.2" y="813.3" width="27.6" height="2.6" fill="#6e6a62"/><rect x="1475" y="807" width="40" height="1.1" fill="#8a1020"/><rect x="1479" y="827.2" width="28" height="33" fill="#5a87dc"/><rect x="1479" y="860.2" width="28" height="1.8" fill="#222"/><polygon points="1479,827.2 1484.5,827.2 1479,832.7" fill="#a8c0ee"/><polygon points="1507,827.2 1501.5,827.2 1507,832.7" fill="#a8c0ee"/><polygon points="1479,860 1484.5,860 1479,854.5" fill="#a8c0ee"/><rect x="1479.6" y="834.1" width="27" height="2.8" fill="#3cc6cc"/><rect x="1485.5" y="834.1" width="2.5" height="2.8" fill="#b0a4d8"/><rect x="1491" y="834.1" width="1.5" height="2.8" fill="#d890c0"/><rect x="1496" y="834.1" width="2" height="2.8" fill="#c09ad4"/><rect x="1501.5" y="834.1" width="1.5" height="2.8" fill="#b0a4d8"/><rect x="1479.6" y="850.2" width="27" height="2.8" fill="#3cc6cc"/><rect x="1485.5" y="850.2" width="2.5" height="2.8" fill="#b0a4d8"/><rect x="1491" y="850.2" width="1.5" height="2.8" fill="#d890c0"/><rect x="1496" y="850.2" width="2" height="2.8" fill="#c09ad4"/><rect x="1501.5" y="850.2" width="1.5" height="2.8" fill="#b0a4d8"/><rect x="1479" y="844" width="28" height="1.1" fill="#8a1020"/></g><g clip-path="url(#clipArr)"><rect x="520" y="375" width="1" height="950" fill="url(#dots)"/><rect x="532" y="375" width="1" height="950" fill="url(#dots)"/><rect x="545" y="375" width="1" height="950" fill="url(#dots)"/><rect x="558" y="375" width="1" height="950" fill="url(#dots)"/><rect x="571" y="375" width="1" height="950" fill="url(#dots)"/><rect x="583" y="375" width="1" height="950" fill="url(#dots)"/><rect x="596" y="375" width="1" height="950" fill="url(#dots)"/><rect x="609" y="375" width="1" height="950" fill="url(#dots)"/><rect x="622" y="375" width="1" height="950" fill="url(#dots)"/><rect x="634" y="375" width="1" height="950" fill="url(#dots)"/><rect x="647" y="375" width="1" height="950" fill="url(#dots)"/><rect x="660" y="375" width="1" height="950" fill="url(#dots)"/><rect x="672" y="375" width="1" height="950" fill="url(#dots)"/><rect x="685" y="375" width="1" height="950" fill="url(#dots)"/><rect x="698" y="375" width="1" height="950" fill="url(#dots)"/><rect x="711" y="375" width="1" height="950" fill="url(#dots)"/><rect x="723" y="375" width="1" height="950" fill="url(#dots)"/><rect x="736" y="375" width="1" height="950" fill="url(#dots)"/><rect x="749" y="375" width="1" height="950" fill="url(#dots)"/><rect x="762" y="375" width="1" height="950" fill="url(#dots)"/><rect x="774" y="375" width="1" height="950" fill="url(#dots)"/><rect x="787" y="375" width="1" height="950" fill="url(#dots)"/><rect x="800" y="375" width="1" height="950" fill="url(#dots)"/><rect x="812" y="375" width="1" height="950" fill="url(#dots)"/><rect x="825" y="375" width="1" height="950" fill="url(#dots)"/><rect x="838" y="375" width="1" height="950" fill="url(#dots)"/><rect x="851" y="375" width="1" height="950" fill="url(#dots)"/><rect x="863" y="375" width="1" height="950" fill="url(#dots)"/><rect x="876" y="375" width="1" height="950" fill="url(#dots)"/><rect x="889" y="375" width="1" height="950" fill="url(#dots)"/><rect x="902" y="375" width="1" height="950" fill="url(#dots)"/><rect x="914" y="375" width="1" height="950" fill="url(#dots)"/><rect x="927" y="375" width="1" height="950" fill="url(#dots)"/><rect x="940" y="375" width="1" height="950" fill="url(#dots)"/><rect x="952" y="375" width="1" height="950" fill="url(#dots)"/><rect x="965" y="375" width="1" height="950" fill="url(#dots)"/><rect x="978" y="375" width="1" height="950" fill="url(#dots)"/><rect x="991" y="375" width="1" height="950" fill="url(#dots)"/><rect x="1003" y="375" width="1" height="950" fill="url(#dots)"/><rect x="1016" y="375" width="1" height="950" fill="url(#dots)"/><rect x="1029" y="375" width="1" height="950" fill="url(#dots)"/><rect x="1042" y="375" width="1" height="950" fill="url(#dots)"/><rect x="1054" y="375" width="1" height="950" fill="url(#dots)"/><rect x="1067" y="375" width="1" height="950" fill="url(#dots)"/><rect x="1080" y="375" width="1" height="950" fill="url(#dots)"/><rect x="1092" y="375" width="1" height="950" fill="url(#dots)"/><rect x="1105" y="375" width="1" height="950" fill="url(#dots)"/><rect x="1118" y="375" width="1" height="950" fill="url(#dots)"/><rect x="1131" y="375" width="1" height="950" fill="url(#dots)"/><rect x="1143" y="375" width="1" height="950" fill="url(#dots)"/><rect x="1156" y="375" width="1" height="950" fill="url(#dots)"/><rect x="1169" y="375" width="1" height="950" fill="url(#dots)"/><rect x="1182" y="375" width="1" height="950" fill="url(#dots)"/><rect x="1194" y="375" width="1" height="950" fill="url(#dots)"/><rect x="1207" y="375" width="1" height="950" fill="url(#dots)"/><rect x="1220" y="375" width="1" height="950" fill="url(#dots)"/><rect x="1232" y="375" width="1" height="950" fill="url(#dots)"/><rect x="1245" y="375" width="1" height="950" fill="url(#dots)"/><rect x="1258" y="375" width="1" height="950" fill="url(#dots)"/><rect x="1271" y="375" width="1" height="950" fill="url(#dots)"/><rect x="1283" y="375" width="1" height="950" fill="url(#dots)"/><rect x="1296" y="375" width="1" height="950" fill="url(#dots)"/><rect x="1309" y="375" width="1" height="950" fill="url(#dots)"/><rect x="1322" y="375" width="1" height="950" fill="url(#dots)"/><rect x="1334" y="375" width="1" height="950" fill="url(#dots)"/><rect x="1347" y="375" width="1" height="950" fill="url(#dots)"/><rect x="1360" y="375" width="1" height="950" fill="url(#dots)"/><rect x="1372" y="375" width="1" height="950" fill="url(#dots)"/><rect x="1385" y="375" width="1" height="950" fill="url(#dots)"/><rect x="1398" y="375" width="1" height="950" fill="url(#dots)"/><rect x="1411" y="375" width="1" height="950" fill="url(#dots)"/><rect x="1423" y="375" width="1" height="950" fill="url(#dots)"/><rect x="1436" y="375" width="1" height="950" fill="url(#dots)"/><rect x="1449" y="375" width="1" height="950" fill="url(#dots)"/><rect x="1462" y="375" width="1" height="950" fill="url(#dots)"/><rect x="1487" y="375" width="1" height="950" fill="url(#dots)"/><rect x="1500" y="375" width="1" height="950" fill="url(#dots)"/></g><g fill="#666666"><polygon points="520.5,488.1 521.5,486.8 522.5,488.4 523.5,488.0 524.5,487.8 525.5,487.4 526.5,488.3 527.5,488.3 528.5,486.8 529.5,487.7 530.5,488.0 531.5,488.2 532.5,487.7 533.5,488.0 534.5,488.4 535.5,487.5 536.5,487.8 537.5,487.9 538.5,487.8 539.5,487.0 540.5,487.2 541.5,488.3 542.5,488.4 543.5,487.6 544.5,488.1 545.5,488.3 546.5,486.8 547.5,488.1 548.5,487.9 549.5,487.5 550.5,488.0 551.5,488.4 552.5,487.0 553.5,487.3 554.5,487.8 555.5,488.1 556.5,488.0 557.5,488.1 558.5,488.4 559.5,487.9 560.5,487.5 561.5,488.3 562.5,488.1 563.5,487.6 564.5,488.2 565.5,488.4 566.5,487.4 567.5,487.4 568.5,488.2 569.5,487.6 570.5,488.4 571.5,487.7 572.5,488.1 573.5,488.0 574.5,488.3 575.5,488.3 576.5,488.1 577.5,487.4 578.5,488.0 579.5,488.2 580.5,488.2 581.5,488.1 581.5,494.0 580.5,494.0 579.5,493.9 578.5,494.5 577.5,494.2 576.5,495.2 575.5,494.4 574.5,493.7 573.5,494.5 572.5,494.4 571.5,494.1 570.5,494.2 569.5,494.1 568.5,493.8 567.5,493.9 566.5,494.0 565.5,493.9 564.5,495.1 563.5,494.4 562.5,493.8 561.5,494.4 560.5,494.3 559.5,493.6 558.5,494.5 557.5,493.8 556.5,494.1 555.5,493.7 554.5,493.7 553.5,493.9 552.5,493.6 551.5,493.6 550.5,494.0 549.5,494.4 548.5,495.2 547.5,494.1 546.5,493.8 545.5,493.8 544.5,494.5 543.5,494.5 542.5,494.0 541.5,493.8 540.5,493.7 539.5,494.3 538.5,494.6 537.5,494.3 536.5,494.0 535.5,493.9 534.5,494.3 533.5,494.3 532.5,493.9 531.5,494.2 530.5,493.9 529.5,494.0 528.5,493.6 527.5,494.2 526.5,493.7 525.5,493.6 524.5,494.5 523.5,494.4 522.5,494.0 521.5,493.9 520.5,493.7"/><polygon points="520.5,568.1 521.5,568.0 522.5,568.5 523.5,567.9 524.5,568.0 525.5,568.3 526.5,568.0 527.5,568.0 528.5,568.1 529.5,567.9 530.5,568.0 531.5,568.4 532.5,568.4 533.5,568.4 534.5,567.7 535.5,568.2 536.5,568.4 537.5,568.3 538.5,567.1 539.5,568.0 540.5,567.8 541.5,568.5 542.5,568.1 543.5,568.4 544.5,568.4 545.5,568.4 546.5,568.4 547.5,568.1 548.5,568.3 549.5,567.5 550.5,568.2 551.5,568.1 552.5,568.3 553.5,568.3 554.5,567.8 555.5,568.2 556.5,568.2 557.5,567.3 558.5,568.4 559.5,568.4 560.5,568.3 561.5,568.4 562.5,567.6 563.5,567.3 564.5,568.1 565.5,568.5 566.5,568.5 567.5,568.0 568.5,567.9 569.5,567.6 570.5,568.5 571.5,567.9 572.5,568.1 573.5,568.0 574.5,568.3 575.5,568.4 576.5,568.0 577.5,567.8 578.5,567.9 579.5,568.4 580.5,567.8 581.5,568.1 581.5,572.7 580.5,573.0 579.5,572.3 578.5,572.2 577.5,572.8 576.5,573.6 575.5,572.8 574.5,572.1 573.5,572.9 572.5,572.8 571.5,572.8 570.5,572.8 569.5,572.2 568.5,572.9 567.5,572.6 566.5,572.1 565.5,572.3 564.5,572.5 563.5,572.4 562.5,572.6 561.5,572.5 560.5,572.3 559.5,572.8 558.5,572.8 557.5,572.4 556.5,572.8 555.5,572.5 554.5,572.5 553.5,572.5 552.5,572.1 551.5,573.1 550.5,572.4 549.5,572.2 548.5,572.2 547.5,572.4 546.5,572.9 545.5,572.9 544.5,572.1 543.5,572.9 542.5,572.9 541.5,572.8 540.5,573.0 539.5,572.5 538.5,572.5 537.5,573.3 536.5,572.5 535.5,572.5 534.5,573.0 533.5,572.7 532.5,572.7 531.5,572.5 530.5,572.9 529.5,572.9 528.5,572.6 527.5,572.5 526.5,572.8 525.5,572.3 524.5,572.8 523.5,572.6 522.5,572.8 521.5,572.1 520.5,572.9"/><polygon points="609.3,488.0 610.3,487.9 611.3,488.6 612.3,487.9 613.3,488.2 614.3,486.6 615.3,487.8 616.3,488.4 617.3,488.5 618.3,487.8 619.3,488.4 620.3,488.6 621.3,488.5 622.3,488.6 623.3,487.7 624.3,488.3 625.3,488.3 626.3,488.5 627.3,488.4 628.3,488.3 629.3,488.0 630.3,487.9 631.3,487.9 632.3,487.7 633.3,488.3 634.3,488.0 635.3,488.5 636.3,488.1 637.3,488.2 637.3,493.5 636.3,493.6 635.3,493.5 634.3,493.7 633.3,494.1 632.3,493.5 631.3,495.1 630.3,493.4 629.3,494.3 628.3,494.4 627.3,493.6 626.3,494.2 625.3,494.8 624.3,493.8 623.3,494.1 622.3,494.1 621.3,493.7 620.3,493.9 619.3,495.3 618.3,493.9 617.3,493.9 616.3,494.3 615.3,494.4 614.3,494.3 613.3,493.5 612.3,493.7 611.3,493.6 610.3,494.7 609.3,493.4"/><polygon points="609.3,568.2 610.3,568.0 611.3,568.1 612.3,568.4 613.3,568.1 614.3,568.3 615.3,567.7 616.3,568.5 617.3,568.0 618.3,567.8 619.3,568.4 620.3,567.7 621.3,567.2 622.3,568.3 623.3,568.4 624.3,568.4 625.3,568.2 626.3,568.2 627.3,567.7 628.3,567.7 629.3,568.1 630.3,567.9 631.3,568.2 632.3,567.8 633.3,567.6 634.3,568.3 635.3,568.1 636.3,567.9 637.3,568.3 637.3,573.8 636.3,572.9 635.3,572.3 634.3,572.8 633.3,572.4 632.3,572.7 631.3,572.5 630.3,573.8 629.3,572.7 628.3,573.6 627.3,572.5 626.3,572.5 625.3,573.2 624.3,572.2 623.3,572.3 622.3,572.9 621.3,572.6 620.3,572.7 619.3,572.2 618.3,572.9 617.3,572.1 616.3,572.7 615.3,573.7 614.3,572.3 613.3,572.7 612.3,572.3 611.3,572.6 610.3,572.9 609.3,572.2"/><polygon points="637.5,485.9 638.5,484.3 639.5,485.6 640.5,484.5 641.6,485.6 642.6,483.8 643.6,485.2 644.6,485.9 645.6,485.6 646.6,485.1 647.6,486.0 648.7,484.3 649.7,483.8 650.7,483.0 651.7,483.9 652.7,485.5 653.7,485.1 654.8,483.9 655.8,484.1 656.8,485.3 657.8,485.6 658.8,486.0 659.8,484.0 660.8,485.8 661.9,485.5 662.9,484.3 663.9,484.1 664.9,484.3 665.9,485.7 666.9,485.1 668.0,484.1 669.0,484.9 670.0,485.9 671.0,483.8 672.0,484.0 673.0,483.8 674.0,485.5 675.1,485.4 676.1,486.0 677.1,485.3 678.1,485.9 679.1,484.5 680.1,485.1 681.1,485.3 682.2,484.0 683.2,482.0 684.2,485.0 685.2,482.6 686.2,484.5 687.2,485.2 688.2,484.8 689.3,484.2 690.3,483.8 691.3,483.9 692.3,484.1 693.3,485.1 694.3,485.5 695.4,485.8 696.4,485.9 697.4,484.1 698.4,484.6 698.4,496.7 697.4,496.2 696.4,499.6 695.4,496.5 694.3,496.9 693.3,497.9 692.3,496.3 691.3,496.9 690.3,500.6 689.3,498.2 688.2,498.1 687.2,497.1 686.2,498.1 685.2,496.3 684.2,497.9 683.2,496.4 682.2,498.3 681.1,497.3 680.1,496.6 679.1,496.2 678.1,496.2 677.1,496.4 676.1,496.7 675.1,497.4 674.0,496.8 673.0,496.2 672.0,497.0 671.0,497.3 670.0,496.6 669.0,497.9 668.0,497.5 666.9,498.3 665.9,498.0 664.9,496.4 663.9,496.6 662.9,497.9 661.9,496.9 660.8,497.1 659.8,498.3 658.8,497.3 657.8,497.7 656.8,496.8 655.8,497.8 654.8,496.4 653.7,496.5 652.7,497.1 651.7,499.8 650.7,496.6 649.7,497.4 648.7,498.1 647.6,496.1 646.6,500.2 645.6,499.2 644.6,497.1 643.6,497.9 642.6,496.2 641.6,496.0 640.5,496.8 639.5,500.5 638.5,498.3 637.5,496.9"/><polygon points="637.5,565.7 638.5,566.5 639.5,565.0 640.5,565.6 641.6,566.4 642.6,565.3 643.6,565.5 644.6,564.7 645.6,565.1 646.6,565.6 647.6,565.0 648.7,565.1 649.7,564.9 650.7,566.1 651.7,566.5 652.7,565.2 653.7,566.3 654.8,564.8 655.8,566.4 656.8,565.0 657.8,565.8 658.8,565.1 659.8,565.3 660.8,563.9 661.9,565.3 662.9,566.3 663.9,566.6 664.9,566.1 665.9,565.3 666.9,566.1 668.0,564.8 669.0,566.5 670.0,565.3 671.0,564.1 672.0,563.8 673.0,566.5 674.0,566.2 675.1,564.9 676.1,566.5 677.1,566.5 678.1,565.1 679.1,566.1 680.1,565.2 681.1,565.5 682.2,566.0 683.2,564.8 684.2,565.1 685.2,564.8 686.2,565.3 687.2,565.6 688.2,565.7 689.3,566.1 690.3,566.3 691.3,563.9 692.3,565.2 693.3,566.4 694.3,564.9 695.4,564.7 696.4,566.3 697.4,565.3 698.4,566.4 698.4,574.2 697.4,575.7 696.4,574.1 695.4,575.9 694.3,575.8 693.3,575.2 692.3,575.3 691.3,576.3 690.3,574.1 689.3,575.3 688.2,575.5 687.2,575.7 686.2,575.4 685.2,574.7 684.2,575.9 683.2,574.1 682.2,575.3 681.1,574.9 680.1,575.7 679.1,574.1 678.1,574.9 677.1,575.7 676.1,575.8 675.1,574.4 674.0,575.3 673.0,575.1 672.0,574.5 671.0,575.8 670.0,574.9 669.0,575.3 668.0,575.6 666.9,574.3 665.9,575.0 664.9,575.2 663.9,574.7 662.9,576.5 661.9,574.9 660.8,574.0 659.8,576.0 658.8,574.1 657.8,575.6 656.8,574.6 655.8,576.0 654.8,575.1 653.7,575.1 652.7,575.8 651.7,574.4 650.7,574.6 649.7,574.3 648.7,574.4 647.6,575.9 646.6,575.9 645.6,575.7 644.6,574.3 643.6,574.1 642.6,574.2 641.6,576.9 640.5,574.3 639.5,575.6 638.5,575.3 637.5,575.4"/><polygon points="698.6,477.1 699.6,478.7 700.6,477.7 701.6,479.1 702.6,478.6 703.7,477.8 704.7,479.2 705.7,479.2 706.7,478.9 707.7,478.8 708.7,478.1 709.7,479.0 710.7,478.2 711.7,477.8 712.8,478.8 713.8,478.6 714.8,478.3 715.8,478.6 716.8,478.1 717.8,478.0 718.8,477.8 719.8,478.1 720.8,478.8 721.9,478.6 722.9,479.0 723.9,477.6 724.9,478.9 725.9,478.6 726.9,478.1 727.9,478.9 728.9,477.7 730.0,478.5 731.0,478.0 732.0,478.2 733.0,479.0 734.0,478.2 735.0,478.2 736.0,478.9 737.0,476.8 738.0,478.9 739.1,479.0 740.1,478.4 741.1,478.5 742.1,478.5 743.1,478.6 744.1,479.1 745.1,478.6 746.1,477.7 747.1,478.5 748.2,477.9 749.2,478.8 750.2,477.9 751.2,478.3 752.2,477.8 753.2,476.9 754.2,478.7 755.2,478.5 756.2,476.2 757.3,477.7 758.3,476.6 759.3,478.1 760.3,478.8 761.3,477.7 761.3,504.1 760.3,504.1 759.3,503.2 758.3,502.9 757.3,504.1 756.2,504.2 755.2,503.8 754.2,503.2 753.2,503.1 752.2,503.3 751.2,503.0 750.2,504.1 749.2,504.3 748.2,503.8 747.1,503.2 746.1,503.7 745.1,503.3 744.1,503.5 743.1,502.9 742.1,504.0 741.1,504.3 740.1,503.8 739.1,503.7 738.0,504.1 737.0,504.4 736.0,503.9 735.0,503.5 734.0,503.2 733.0,503.5 732.0,503.5 731.0,503.9 730.0,503.2 728.9,503.5 727.9,503.8 726.9,503.6 725.9,502.9 724.9,503.8 723.9,504.1 722.9,504.3 721.9,503.1 720.8,503.3 719.8,504.2 718.8,503.2 717.8,503.7 716.8,504.0 715.8,503.3 714.8,504.0 713.8,504.2 712.8,503.3 711.7,504.5 710.7,503.4 709.7,504.1 708.7,503.6 707.7,504.3 706.7,503.6 705.7,503.6 704.7,503.2 703.7,503.0 702.6,503.9 701.6,503.5 700.6,503.6 699.6,504.0 698.6,503.5"/><polygon points="698.6,559.2 699.6,559.0 700.6,559.3 701.6,559.3 702.6,559.4 703.7,559.4 704.7,560.0 705.7,559.1 706.7,558.7 707.7,560.0 708.7,559.6 709.7,558.8 710.7,559.6 711.7,559.3 712.8,559.4 713.8,558.9 714.8,559.3 715.8,559.6 716.8,557.8 717.8,557.5 718.8,560.0 719.8,559.1 720.8,559.2 721.9,559.1 722.9,559.0 723.9,559.0 724.9,558.9 725.9,559.6 726.9,557.8 727.9,560.0 728.9,557.5 730.0,559.2 731.0,559.5 732.0,558.5 733.0,559.8 734.0,559.8 735.0,557.7 736.0,559.1 737.0,559.2 738.0,559.7 739.1,560.0 740.1,559.6 741.1,559.4 742.1,559.4 743.1,559.5 744.1,559.5 745.1,559.3 746.1,559.1 747.1,558.7 748.2,559.4 749.2,559.2 750.2,560.0 751.2,557.6 752.2,558.9 753.2,558.9 754.2,559.5 755.2,559.7 756.2,559.2 757.3,559.7 758.3,559.9 759.3,559.2 760.3,559.4 761.3,559.8 761.3,581.5 760.3,581.4 759.3,581.8 758.3,581.7 757.3,581.6 756.2,581.5 755.2,581.6 754.2,580.7 753.2,581.7 752.2,581.7 751.2,581.8 750.2,580.9 749.2,581.8 748.2,581.8 747.1,581.7 746.1,581.7 745.1,581.0 744.1,581.6 743.1,581.4 742.1,581.5 741.1,580.7 740.1,581.6 739.1,581.5 738.0,583.2 737.0,581.5 736.0,581.7 735.0,580.8 734.0,580.6 733.0,581.9 732.0,580.6 731.0,580.7 730.0,581.8 728.9,581.2 727.9,580.8 726.9,581.8 725.9,581.2 724.9,581.6 723.9,581.8 722.9,582.1 721.9,580.9 720.8,581.4 719.8,581.6 718.8,580.8 717.8,581.3 716.8,581.6 715.8,581.0 714.8,581.9 713.8,581.1 712.8,581.3 711.7,581.6 710.7,581.7 709.7,580.6 708.7,581.9 707.7,581.4 706.7,580.7 705.7,581.7 704.7,581.7 703.7,581.3 702.6,580.7 701.6,580.9 700.6,581.6 699.6,581.7 698.6,581.6"/><polygon points="761.5,475.2 762.5,474.1 763.5,474.5 764.5,473.2 765.6,474.3 766.6,474.5 767.6,474.4 768.6,475.6 769.6,474.9 770.6,474.3 771.6,475.7 772.7,474.8 773.7,475.1 774.7,475.5 775.7,474.3 776.7,474.5 777.7,475.8 778.7,474.7 779.8,475.7 780.8,475.0 781.8,474.7 782.8,475.9 783.8,474.3 784.8,475.7 785.8,475.1 786.9,474.8 787.9,474.6 788.9,475.4 789.9,474.4 790.9,475.3 791.9,475.8 792.9,475.1 794.0,475.3 795.0,475.7 796.0,474.6 797.0,474.5 798.0,474.4 799.0,474.3 800.1,475.6 801.1,475.8 802.1,475.4 803.1,474.4 804.1,474.6 805.1,474.4 806.1,475.0 807.2,474.3 808.2,475.3 809.2,475.9 810.2,475.7 811.2,475.3 812.2,475.8 813.2,475.0 814.3,474.2 815.3,473.6 816.3,472.8 817.3,474.9 818.3,472.5 819.3,475.0 820.3,475.2 821.4,475.7 822.4,474.4 823.4,474.4 824.4,474.5 824.4,506.7 823.4,507.0 822.4,507.8 821.4,507.1 820.3,506.3 819.3,507.0 818.3,507.4 817.3,507.0 816.3,506.4 815.3,507.6 814.3,506.5 813.2,508.9 812.2,507.7 811.2,507.4 810.2,507.4 809.2,507.0 808.2,506.4 807.2,506.6 806.1,506.1 805.1,506.7 804.1,508.6 803.1,507.1 802.1,506.5 801.1,506.2 800.1,507.5 799.0,506.5 798.0,507.0 797.0,508.5 796.0,508.4 795.0,508.4 794.0,507.9 792.9,506.6 791.9,507.7 790.9,507.7 789.9,506.7 788.9,506.8 787.9,507.1 786.9,508.2 785.8,506.7 784.8,507.8 783.8,507.7 782.8,507.8 781.8,506.1 780.8,506.4 779.8,506.7 778.7,506.6 777.7,506.3 776.7,507.4 775.7,509.5 774.7,506.2 773.7,506.4 772.7,507.8 771.6,507.8 770.6,506.2 769.6,507.7 768.6,508.2 767.6,509.7 766.6,506.9 765.6,507.0 764.5,506.1 763.5,506.4 762.5,506.8 761.5,508.8"/><polygon points="761.5,557.4 762.5,555.2 763.5,556.6 764.5,557.1 765.6,555.8 766.6,556.6 767.6,556.8 768.6,557.1 769.6,557.2 770.6,557.3 771.6,557.6 772.7,556.6 773.7,557.2 774.7,557.6 775.7,557.9 776.7,557.2 777.7,557.3 778.7,557.6 779.8,555.9 780.8,556.7 781.8,557.6 782.8,557.8 783.8,558.0 784.8,557.9 785.8,557.8 786.9,557.1 787.9,556.9 788.9,556.8 789.9,556.7 790.9,557.3 791.9,556.8 792.9,557.4 794.0,557.5 795.0,556.8 796.0,557.8 797.0,557.2 798.0,556.8 799.0,555.9 800.1,557.2 801.1,557.2 802.1,557.0 803.1,557.5 804.1,557.9 805.1,557.2 806.1,557.4 807.2,557.2 808.2,556.5 809.2,556.7 810.2,556.7 811.2,557.3 812.2,557.1 813.2,557.1 814.3,556.0 815.3,556.8 816.3,557.3 817.3,557.2 818.3,557.9 819.3,557.9 820.3,557.1 821.4,556.9 822.4,557.8 823.4,557.2 824.4,558.0 824.4,583.9 823.4,583.1 822.4,583.0 821.4,583.0 820.3,585.3 819.3,582.8 818.3,582.8 817.3,584.1 816.3,583.4 815.3,583.4 814.3,583.6 813.2,582.6 812.2,583.5 811.2,583.3 810.2,583.2 809.2,583.6 808.2,583.8 807.2,583.8 806.1,583.5 805.1,583.9 804.1,583.1 803.1,584.0 802.1,583.1 801.1,584.1 800.1,583.3 799.0,585.5 798.0,583.8 797.0,582.7 796.0,583.0 795.0,583.9 794.0,583.4 792.9,583.3 791.9,583.9 790.9,584.0 789.9,582.5 788.9,583.6 787.9,583.7 786.9,583.9 785.8,583.1 784.8,582.9 783.8,583.1 782.8,582.6 781.8,584.1 780.8,582.9 779.8,583.4 778.7,582.9 777.7,583.4 776.7,583.5 775.7,583.4 774.7,583.2 773.7,582.8 772.7,583.3 771.6,583.5 770.6,583.2 769.6,584.0 768.6,583.0 767.6,585.5 766.6,583.7 765.6,583.3 764.5,583.1 763.5,584.0 762.5,583.9 761.5,584.1"/><polygon points="824.6,476.4 825.6,475.4 826.6,475.7 827.6,476.3 828.6,475.8 829.7,476.3 830.7,476.6 831.7,476.2 832.7,476.5 833.7,476.6 834.7,476.8 835.7,476.9 836.7,475.6 837.7,475.7 838.8,476.5 839.8,476.3 840.8,475.9 841.8,476.5 842.8,475.5 843.8,476.7 844.8,476.1 845.8,476.9 846.8,477.0 847.9,476.7 848.9,477.0 849.9,475.5 850.9,475.0 851.9,476.0 852.9,475.9 853.9,476.0 854.9,473.9 856.0,476.9 857.0,477.2 858.0,475.6 859.0,476.4 860.0,475.6 861.0,473.6 862.0,477.0 863.0,475.8 864.0,475.8 865.1,475.4 866.1,475.8 867.1,477.1 868.1,475.4 869.1,475.9 870.1,475.4 871.1,477.1 872.1,476.6 873.1,476.8 874.2,475.4 875.2,477.0 876.2,476.2 877.2,476.1 878.2,477.0 879.2,477.1 880.2,476.4 881.2,476.5 882.2,475.3 883.3,475.3 884.3,476.4 885.3,475.5 886.3,476.0 887.3,477.2 887.3,508.3 886.3,507.2 885.3,508.0 884.3,509.1 883.3,507.8 882.2,508.2 881.2,509.0 880.2,507.0 879.2,507.3 878.2,507.3 877.2,507.6 876.2,508.2 875.2,507.8 874.2,507.4 873.1,507.2 872.1,507.0 871.1,507.4 870.1,508.0 869.1,508.3 868.1,508.9 867.1,508.1 866.1,508.4 865.1,507.6 864.0,508.4 863.0,506.9 862.0,508.3 861.0,507.9 860.0,510.2 859.0,510.0 858.0,507.9 857.0,507.4 856.0,507.1 854.9,510.1 853.9,507.1 852.9,507.2 851.9,507.4 850.9,507.3 849.9,508.3 848.9,508.1 847.9,506.9 846.8,507.8 845.8,508.4 844.8,507.4 843.8,508.3 842.8,507.0 841.8,507.2 840.8,507.3 839.8,507.2 838.8,508.6 837.7,507.1 836.7,507.0 835.7,508.1 834.7,506.8 833.7,507.2 832.7,506.9 831.7,507.0 830.7,507.1 829.7,508.3 828.6,507.2 827.6,508.6 826.6,507.3 825.6,508.4 824.6,509.9"/><polygon points="824.6,558.2 825.6,558.2 826.6,557.9 827.6,557.9 828.6,558.1 829.7,557.1 830.7,557.7 831.7,557.5 832.7,557.7 833.7,557.8 834.7,557.1 835.7,558.0 836.7,557.9 837.7,557.0 838.8,557.5 839.8,557.9 840.8,557.0 841.8,557.1 842.8,558.0 843.8,557.4 844.8,558.4 845.8,558.3 846.8,557.8 847.9,558.3 848.9,558.3 849.9,557.6 850.9,558.1 851.9,557.5 852.9,557.8 853.9,557.2 854.9,558.3 856.0,556.9 857.0,557.2 858.0,558.5 859.0,557.3 860.0,557.0 861.0,558.2 862.0,557.4 863.0,557.3 864.0,557.5 865.1,558.3 866.1,558.2 867.1,558.3 868.1,558.2 869.1,557.9 870.1,557.3 871.1,557.9 872.1,557.2 873.1,557.4 874.2,557.1 875.2,558.4 876.2,557.5 877.2,557.7 878.2,558.5 879.2,556.1 880.2,557.4 881.2,558.0 882.2,556.8 883.3,557.0 884.3,557.9 885.3,556.9 886.3,557.3 887.3,557.6 887.3,582.8 886.3,583.0 885.3,583.2 884.3,582.6 883.3,583.4 882.2,582.2 881.2,583.1 880.2,582.6 879.2,583.8 878.2,584.7 877.2,583.1 876.2,582.2 875.2,582.7 874.2,582.8 873.1,582.8 872.1,582.2 871.1,582.4 870.1,585.1 869.1,582.4 868.1,583.0 867.1,582.2 866.1,582.9 865.1,583.7 864.0,582.3 863.0,585.3 862.0,583.5 861.0,583.4 860.0,583.1 859.0,582.8 858.0,583.1 857.0,582.2 856.0,583.1 854.9,583.5 853.9,582.3 852.9,583.5 851.9,582.3 850.9,583.1 849.9,582.5 848.9,583.5 847.9,582.4 846.8,583.0 845.8,583.2 844.8,582.4 843.8,582.6 842.8,583.1 841.8,582.2 840.8,583.7 839.8,582.9 838.8,582.7 837.7,582.4 836.7,582.8 835.7,583.2 834.7,583.5 833.7,584.1 832.7,585.4 831.7,582.3 830.7,582.9 829.7,583.3 828.6,582.2 827.6,583.0 826.6,582.4 825.6,583.4 824.6,583.2"/><polygon points="997.3,478.1 998.3,478.2 999.3,478.5 1000.3,477.8 1001.3,478.1 1002.3,477.3 1003.3,478.4 1004.3,478.0 1005.3,478.4 1006.3,478.2 1007.3,477.6 1008.3,477.7 1009.3,477.5 1010.3,477.4 1011.3,478.3 1012.3,477.3 1013.3,477.7 1014.3,477.1 1015.3,478.1 1016.3,477.9 1017.3,477.2 1018.3,478.1 1019.3,477.5 1020.3,477.8 1021.3,477.7 1022.3,477.6 1023.3,477.5 1024.3,477.8 1025.3,477.9 1026.3,477.2 1027.3,478.5 1028.3,477.8 1029.3,478.3 1030.3,478.3 1031.3,477.2 1032.3,477.5 1033.3,478.4 1034.3,476.7 1035.3,478.0 1036.3,478.2 1037.3,478.2 1038.3,478.1 1039.3,478.3 1040.3,477.5 1041.3,477.9 1042.3,477.7 1043.3,478.2 1044.3,477.4 1045.3,478.1 1046.3,478.5 1047.3,478.4 1048.3,478.1 1049.3,477.2 1050.3,477.6 1051.3,476.6 1052.3,478.1 1053.3,478.3 1054.3,478.3 1055.3,478.0 1056.3,478.2 1057.3,478.1 1058.3,478.4 1059.3,478.0 1060.3,477.8 1060.3,504.2 1059.3,503.5 1058.3,504.2 1057.3,503.7 1056.3,504.8 1055.3,504.1 1054.3,504.5 1053.3,504.1 1052.3,504.6 1051.3,503.6 1050.3,503.5 1049.3,503.5 1048.3,504.7 1047.3,503.7 1046.3,504.7 1045.3,503.5 1044.3,503.7 1043.3,504.6 1042.3,504.1 1041.3,504.7 1040.3,504.6 1039.3,504.6 1038.3,504.8 1037.3,503.8 1036.3,503.8 1035.3,504.7 1034.3,504.6 1033.3,504.5 1032.3,504.1 1031.3,504.1 1030.3,503.5 1029.3,503.7 1028.3,503.7 1027.3,503.7 1026.3,503.8 1025.3,504.4 1024.3,506.0 1023.3,504.8 1022.3,504.5 1021.3,503.9 1020.3,504.3 1019.3,503.6 1018.3,503.6 1017.3,503.6 1016.3,503.5 1015.3,504.1 1014.3,504.0 1013.3,504.0 1012.3,503.8 1011.3,504.2 1010.3,504.6 1009.3,504.8 1008.3,504.6 1007.3,503.8 1006.3,503.5 1005.3,504.1 1004.3,504.5 1003.3,503.7 1002.3,503.9 1001.3,503.9 1000.3,503.9 999.3,504.6 998.3,503.8 997.3,504.8"/><polygon points="997.3,560.0 998.3,560.5 999.3,560.5 1000.3,560.3 1001.3,560.5 1002.3,560.0 1003.3,560.2 1004.3,559.5 1005.3,560.0 1006.3,560.7 1007.3,560.2 1008.3,560.2 1009.3,560.7 1010.3,560.4 1011.3,560.7 1012.3,560.4 1013.3,560.8 1014.3,560.0 1015.3,560.5 1016.3,560.8 1017.3,560.1 1018.3,560.5 1019.3,560.4 1020.3,560.2 1021.3,560.5 1022.3,559.6 1023.3,560.2 1024.3,560.0 1025.3,560.7 1026.3,560.5 1027.3,560.2 1028.3,560.1 1029.3,559.9 1030.3,560.5 1031.3,560.1 1032.3,558.9 1033.3,560.4 1034.3,560.4 1035.3,560.4 1036.3,560.5 1037.3,560.1 1038.3,560.9 1039.3,559.0 1040.3,559.1 1041.3,560.5 1042.3,560.0 1043.3,560.9 1044.3,560.6 1045.3,559.3 1046.3,560.0 1047.3,560.7 1048.3,560.4 1049.3,560.1 1050.3,560.9 1051.3,560.3 1052.3,560.6 1053.3,560.5 1054.3,560.9 1055.3,560.0 1056.3,559.9 1057.3,560.2 1058.3,560.0 1059.3,560.8 1060.3,560.5 1060.3,580.4 1059.3,579.8 1058.3,579.8 1057.3,580.4 1056.3,580.3 1055.3,579.7 1054.3,581.2 1053.3,580.7 1052.3,580.4 1051.3,580.0 1050.3,580.0 1049.3,579.9 1048.3,580.2 1047.3,579.7 1046.3,580.5 1045.3,580.1 1044.3,579.9 1043.3,580.7 1042.3,579.8 1041.3,580.3 1040.3,580.2 1039.3,580.3 1038.3,580.5 1037.3,580.5 1036.3,579.7 1035.3,580.6 1034.3,580.6 1033.3,580.2 1032.3,580.5 1031.3,580.1 1030.3,580.4 1029.3,579.9 1028.3,580.0 1027.3,580.0 1026.3,579.7 1025.3,580.1 1024.3,579.7 1023.3,579.9 1022.3,580.3 1021.3,581.1 1020.3,580.1 1019.3,580.5 1018.3,580.7 1017.3,580.2 1016.3,579.9 1015.3,580.6 1014.3,581.7 1013.3,580.6 1012.3,580.2 1011.3,579.8 1010.3,580.4 1009.3,580.3 1008.3,580.0 1007.3,580.1 1006.3,580.3 1005.3,580.2 1004.3,580.7 1003.3,580.0 1002.3,581.6 1001.3,579.9 1000.3,580.7 999.3,580.9 998.3,580.7 997.3,580.4"/><polygon points="1060.5,468.2 1061.5,471.4 1062.5,470.3 1063.5,469.7 1064.5,469.9 1065.6,470.7 1066.6,471.3 1067.6,470.1 1068.6,469.6 1069.6,470.9 1070.6,469.6 1071.6,470.3 1072.6,470.9 1073.6,469.6 1074.7,470.8 1075.7,470.8 1076.7,471.1 1077.7,470.4 1078.7,468.3 1079.7,471.3 1080.7,470.8 1081.7,471.1 1082.7,469.7 1083.8,469.7 1084.8,471.2 1085.8,470.5 1086.8,471.1 1087.8,468.5 1088.8,470.5 1089.8,471.0 1090.8,471.4 1091.8,469.7 1092.9,470.3 1093.9,471.0 1094.9,470.2 1095.9,469.9 1096.9,469.6 1097.9,471.0 1098.9,470.8 1099.9,470.8 1101.0,470.5 1102.0,470.0 1103.0,469.8 1104.0,470.8 1105.0,470.0 1106.0,469.7 1107.0,470.3 1108.0,469.8 1109.0,469.6 1110.1,471.0 1111.1,470.6 1112.1,470.1 1113.1,469.9 1114.1,470.7 1115.1,470.8 1116.1,469.5 1117.1,469.9 1118.1,470.8 1119.2,470.2 1120.2,470.1 1121.2,469.3 1122.2,471.1 1123.2,471.0 1123.2,519.3 1122.2,518.1 1121.2,518.9 1120.2,518.4 1119.2,518.1 1118.1,518.0 1117.1,518.4 1116.1,518.5 1115.1,518.7 1114.1,517.7 1113.1,518.9 1112.1,518.9 1111.1,518.0 1110.1,519.2 1109.0,517.8 1108.0,518.1 1107.0,518.4 1106.0,519.0 1105.0,517.8 1104.0,517.9 1103.0,519.1 1102.0,518.8 1101.0,518.5 1099.9,519.5 1098.9,517.8 1097.9,519.0 1096.9,518.4 1095.9,520.4 1094.9,518.9 1093.9,520.7 1092.9,519.1 1091.8,517.7 1090.8,518.3 1089.8,519.0 1088.8,519.1 1087.8,519.3 1086.8,517.8 1085.8,518.3 1084.8,518.5 1083.8,517.8 1082.7,518.5 1081.7,519.4 1080.7,518.3 1079.7,518.8 1078.7,518.4 1077.7,517.7 1076.7,519.1 1075.7,518.4 1074.7,521.3 1073.6,517.6 1072.6,519.3 1071.6,518.6 1070.6,517.7 1069.6,518.2 1068.6,519.5 1067.6,517.8 1066.6,518.5 1065.6,518.8 1064.5,521.4 1063.5,518.2 1062.5,518.2 1061.5,519.2 1060.5,517.9"/><polygon points="1060.5,553.7 1061.5,552.7 1062.5,553.5 1063.5,553.6 1064.5,554.2 1065.6,553.8 1066.6,554.3 1067.6,553.8 1068.6,553.5 1069.6,552.1 1070.6,553.2 1071.6,552.9 1072.6,553.8 1073.6,554.1 1074.7,553.7 1075.7,553.1 1076.7,552.8 1077.7,553.8 1078.7,553.9 1079.7,553.1 1080.7,552.9 1081.7,553.9 1082.7,552.8 1083.8,552.8 1084.8,554.2 1085.8,552.8 1086.8,553.6 1087.8,553.9 1088.8,553.5 1089.8,553.8 1090.8,553.3 1091.8,553.0 1092.9,553.9 1093.9,553.1 1094.9,554.2 1095.9,553.3 1096.9,552.8 1097.9,553.0 1098.9,553.5 1099.9,554.2 1101.0,553.6 1102.0,553.7 1103.0,553.1 1104.0,553.1 1105.0,553.2 1106.0,554.2 1107.0,553.9 1108.0,553.9 1109.0,553.3 1110.1,553.2 1111.1,554.4 1112.1,554.3 1113.1,554.3 1114.1,553.3 1115.1,554.0 1116.1,551.4 1117.1,554.3 1118.1,553.3 1119.2,553.5 1120.2,552.7 1121.2,552.7 1122.2,553.6 1123.2,553.8 1123.2,586.5 1122.2,587.3 1121.2,586.3 1120.2,587.6 1119.2,587.2 1118.1,587.4 1117.1,587.1 1116.1,587.1 1115.1,587.5 1114.1,586.8 1113.1,587.6 1112.1,587.0 1111.1,587.3 1110.1,586.3 1109.0,587.8 1108.0,586.6 1107.0,586.3 1106.0,587.4 1105.0,587.6 1104.0,587.0 1103.0,587.6 1102.0,587.2 1101.0,587.6 1099.9,586.8 1098.9,587.1 1097.9,586.8 1096.9,587.4 1095.9,587.4 1094.9,586.7 1093.9,587.3 1092.9,586.6 1091.8,587.2 1090.8,588.3 1089.8,587.7 1088.8,587.3 1087.8,586.5 1086.8,587.6 1085.8,586.7 1084.8,586.6 1083.8,586.5 1082.7,587.8 1081.7,586.3 1080.7,586.5 1079.7,586.8 1078.7,586.5 1077.7,587.8 1076.7,587.3 1075.7,586.7 1074.7,587.5 1073.6,588.8 1072.6,586.4 1071.6,589.1 1070.6,587.1 1069.6,587.8 1068.6,587.3 1067.6,587.3 1066.6,587.3 1065.6,587.8 1064.5,587.1 1063.5,587.6 1062.5,586.2 1061.5,586.5 1060.5,587.0"/><polygon points="1123.4,468.1 1124.4,468.1 1125.4,467.3 1126.5,466.5 1127.5,466.3 1128.5,467.0 1129.5,468.1 1130.5,468.4 1131.5,466.8 1132.5,468.2 1133.6,466.6 1134.6,468.2 1135.6,466.0 1136.6,467.0 1137.6,467.0 1138.7,468.2 1139.7,467.7 1140.7,467.5 1141.7,468.3 1142.7,467.5 1143.7,466.6 1144.8,468.2 1145.8,467.2 1146.8,467.0 1147.8,467.1 1148.8,467.0 1149.8,467.2 1150.8,468.0 1151.9,465.1 1152.9,464.4 1153.9,468.0 1154.9,466.5 1155.9,468.2 1157.0,466.5 1158.0,468.1 1159.0,464.5 1160.0,467.3 1161.0,467.2 1162.0,467.3 1163.0,466.9 1164.1,467.5 1165.1,467.6 1166.1,467.7 1166.1,518.7 1165.1,518.7 1164.1,518.8 1163.0,518.6 1162.0,521.2 1161.0,522.3 1160.0,520.2 1159.0,520.4 1158.0,519.6 1157.0,520.0 1155.9,518.6 1154.9,519.8 1153.9,520.5 1152.9,522.3 1151.9,520.1 1150.8,519.3 1149.8,518.7 1148.8,519.5 1147.8,520.0 1146.8,518.6 1145.8,520.0 1144.8,518.9 1143.7,519.3 1142.7,519.9 1141.7,519.2 1140.7,518.6 1139.7,518.5 1138.7,518.5 1137.6,519.3 1136.6,520.5 1135.6,519.0 1134.6,518.7 1133.6,520.2 1132.5,520.1 1131.5,519.5 1130.5,518.9 1129.5,519.8 1128.5,519.8 1127.5,518.9 1126.5,520.4 1125.4,520.0 1124.4,520.0 1123.4,520.1"/><polygon points="1123.4,544.6 1124.4,544.8 1125.4,544.7 1126.5,544.9 1127.5,545.4 1128.5,544.8 1129.5,544.8 1130.5,545.3 1131.5,545.3 1132.5,545.5 1133.6,544.4 1134.6,544.6 1135.6,543.9 1136.6,544.5 1137.6,544.7 1138.7,545.9 1139.7,545.5 1140.7,545.2 1141.7,545.4 1142.7,545.9 1143.7,546.1 1144.8,545.8 1145.8,544.8 1146.8,546.1 1147.8,544.4 1148.8,545.1 1149.8,546.0 1150.8,545.9 1151.9,545.6 1152.9,545.6 1153.9,544.8 1154.9,544.6 1155.9,544.6 1157.0,546.1 1158.0,544.9 1159.0,545.9 1160.0,545.0 1161.0,546.1 1162.0,545.5 1163.0,545.7 1164.1,545.7 1165.1,544.8 1166.1,545.4 1166.1,591.1 1165.1,590.9 1164.1,591.9 1163.0,591.1 1162.0,591.8 1161.0,592.0 1160.0,591.5 1159.0,590.7 1158.0,591.5 1157.0,590.8 1155.9,591.9 1154.9,590.5 1153.9,590.7 1152.9,591.2 1151.9,591.9 1150.8,591.4 1149.8,590.5 1148.8,591.7 1147.8,591.6 1146.8,591.7 1145.8,591.8 1144.8,591.3 1143.7,591.0 1142.7,590.9 1141.7,592.1 1140.7,591.6 1139.7,591.4 1138.7,592.0 1137.6,592.1 1136.6,592.1 1135.6,591.2 1134.6,592.2 1133.6,591.6 1132.5,591.1 1131.5,591.7 1130.5,592.0 1129.5,590.5 1128.5,591.9 1127.5,591.6 1126.5,591.6 1125.4,590.5 1124.4,590.8 1123.4,590.7"/><polygon points="1166.3,463.0 1167.3,464.2 1168.4,463.8 1169.4,463.7 1170.4,464.4 1171.5,462.8 1172.5,463.2 1173.5,463.0 1174.6,464.2 1175.6,464.5 1176.6,463.2 1177.7,464.2 1178.7,462.7 1179.7,461.4 1180.7,463.2 1181.8,463.5 1182.8,462.8 1183.8,462.9 1184.9,462.9 1185.9,463.8 1186.9,463.5 1188.0,464.6 1189.0,463.7 1190.0,463.4 1191.1,462.7 1192.1,464.0 1192.1,511.1 1191.1,511.2 1190.0,510.8 1189.0,512.2 1188.0,512.2 1186.9,512.2 1185.9,510.6 1184.9,512.5 1183.8,510.7 1182.8,511.8 1181.8,511.6 1180.7,511.4 1179.7,511.4 1178.7,513.2 1177.7,511.6 1176.6,510.5 1175.6,510.9 1174.6,510.7 1173.5,510.6 1172.5,511.4 1171.5,511.4 1170.4,510.5 1169.4,510.7 1168.4,511.7 1167.3,510.4 1166.3,510.4"/><polygon points="1166.3,536.6 1167.3,536.7 1168.4,535.8 1169.4,536.5 1170.4,535.8 1171.5,536.3 1172.5,536.0 1173.5,535.1 1174.6,536.6 1175.6,536.2 1176.6,536.0 1177.7,535.6 1178.7,535.6 1179.7,535.1 1180.7,535.7 1181.8,536.3 1182.8,536.6 1183.8,533.9 1184.9,535.6 1185.9,535.1 1186.9,535.1 1188.0,535.2 1189.0,535.6 1190.0,534.7 1191.1,536.0 1192.1,535.1 1192.1,596.9 1191.1,596.6 1190.0,596.4 1189.0,597.2 1188.0,596.3 1186.9,596.3 1185.9,597.2 1184.9,597.1 1183.8,597.2 1182.8,597.1 1181.8,596.5 1180.7,596.2 1179.7,596.2 1178.7,596.9 1177.7,596.8 1176.6,596.8 1175.6,596.4 1174.6,599.1 1173.5,596.4 1172.5,597.4 1171.5,596.2 1170.4,598.5 1169.4,597.5 1168.4,597.1 1167.3,596.9 1166.3,596.5"/><polygon points="1192.3,463.1 1193.3,462.6 1194.3,462.4 1195.3,462.5 1196.3,463.4 1197.3,462.2 1198.3,463.9 1199.3,463.8 1200.3,464.0 1201.3,461.9 1202.3,462.0 1203.3,463.3 1204.3,463.9 1205.3,462.7 1206.3,462.5 1207.4,460.0 1208.4,462.5 1209.4,462.3 1210.4,463.6 1211.4,463.5 1212.4,463.7 1213.4,462.7 1214.4,460.8 1215.4,463.5 1216.4,462.7 1217.4,462.6 1218.4,462.4 1219.4,462.3 1220.4,463.9 1221.4,462.9 1221.4,516.3 1220.4,519.4 1219.4,516.7 1218.4,517.7 1217.4,516.6 1216.4,517.9 1215.4,516.6 1214.4,517.5 1213.4,516.5 1212.4,516.4 1211.4,516.2 1210.4,517.5 1209.4,517.7 1208.4,516.8 1207.4,517.2 1206.3,516.7 1205.3,517.5 1204.3,516.2 1203.3,516.9 1202.3,516.3 1201.3,516.1 1200.3,516.5 1199.3,516.0 1198.3,517.1 1197.3,517.8 1196.3,516.6 1195.3,518.0 1194.3,517.8 1193.3,516.4 1192.3,518.5"/><polygon points="1192.3,540.4 1193.3,540.3 1194.3,539.8 1195.3,540.4 1196.3,540.6 1197.3,540.6 1198.3,540.1 1199.3,540.7 1200.3,541.0 1201.3,541.1 1202.3,541.1 1203.3,541.1 1204.3,541.0 1205.3,539.7 1206.3,540.5 1207.4,539.5 1208.4,539.6 1209.4,540.1 1210.4,539.9 1211.4,541.0 1212.4,540.8 1213.4,539.7 1214.4,540.6 1215.4,537.9 1216.4,540.1 1217.4,539.7 1218.4,540.5 1219.4,540.8 1220.4,539.6 1221.4,539.8 1221.4,597.1 1220.4,596.7 1219.4,597.0 1218.4,596.0 1217.4,596.8 1216.4,597.0 1215.4,596.4 1214.4,595.7 1213.4,596.0 1212.4,596.2 1211.4,596.8 1210.4,595.6 1209.4,595.9 1208.4,597.0 1207.4,595.6 1206.3,596.0 1205.3,595.7 1204.3,595.5 1203.3,595.9 1202.3,596.1 1201.3,596.7 1200.3,596.2 1199.3,595.5 1198.3,595.6 1197.3,596.2 1196.3,596.2 1195.3,595.8 1194.3,595.6 1193.3,596.0 1192.3,595.7"/><polygon points="1221.6,456.8 1222.6,456.8 1223.6,456.8 1224.6,456.6 1225.7,454.4 1226.7,457.6 1227.7,456.9 1228.7,458.4 1229.7,456.9 1230.7,457.0 1231.8,456.9 1232.8,456.6 1233.8,458.3 1234.8,457.5 1235.8,458.0 1236.8,458.1 1237.8,455.9 1238.9,457.9 1239.9,457.7 1240.9,458.5 1241.9,456.6 1242.9,457.1 1243.9,458.2 1245.0,457.7 1246.0,456.3 1247.0,456.6 1248.0,458.1 1249.0,457.7 1250.0,457.7 1251.0,457.4 1252.1,458.4 1253.1,455.0 1254.1,457.1 1255.1,457.7 1256.1,458.6 1257.1,457.1 1258.2,456.5 1259.2,458.9 1260.2,458.8 1261.2,458.2 1262.2,458.7 1263.2,458.7 1264.2,458.3 1265.3,457.9 1266.3,457.8 1267.3,458.7 1268.3,458.0 1269.3,457.2 1270.3,457.5 1271.4,458.1 1272.4,457.9 1273.4,457.1 1274.4,456.7 1274.4,517.1 1273.4,517.6 1272.4,515.7 1271.4,516.6 1270.3,514.9 1269.3,516.0 1268.3,515.9 1267.3,515.0 1266.3,515.4 1265.3,517.6 1264.2,516.3 1263.2,515.5 1262.2,516.0 1261.2,517.0 1260.2,516.2 1259.2,515.0 1258.2,515.0 1257.1,516.9 1256.1,516.5 1255.1,515.3 1254.1,517.0 1253.1,515.1 1252.1,515.6 1251.0,517.1 1250.0,517.5 1249.0,517.4 1248.0,520.3 1247.0,516.4 1246.0,516.4 1245.0,516.8 1243.9,516.9 1242.9,517.5 1241.9,517.7 1240.9,517.0 1239.9,517.2 1238.9,516.9 1237.8,517.5 1236.8,515.9 1235.8,517.4 1234.8,517.2 1233.8,517.3 1232.8,516.2 1231.8,517.6 1230.7,515.4 1229.7,515.5 1228.7,518.0 1227.7,517.3 1226.7,516.1 1225.7,516.7 1224.6,515.2 1223.6,515.8 1222.6,515.2 1221.6,515.6"/><polygon points="1221.6,537.7 1222.6,538.1 1223.6,538.5 1224.6,537.7 1225.7,536.3 1226.7,537.6 1227.7,537.7 1228.7,537.3 1229.7,535.7 1230.7,538.4 1231.8,538.4 1232.8,536.3 1233.8,538.3 1234.8,536.7 1235.8,536.4 1236.8,538.5 1237.8,536.8 1238.9,538.1 1239.9,537.7 1240.9,537.9 1241.9,536.8 1242.9,535.3 1243.9,536.9 1245.0,537.2 1246.0,537.7 1247.0,536.3 1248.0,535.2 1249.0,534.2 1250.0,537.6 1251.0,537.6 1252.1,537.1 1253.1,536.4 1254.1,536.2 1255.1,537.9 1256.1,537.4 1257.1,536.3 1258.2,537.2 1259.2,536.3 1260.2,537.9 1261.2,536.8 1262.2,538.3 1263.2,537.0 1264.2,536.3 1265.3,536.6 1266.3,537.6 1267.3,536.7 1268.3,536.2 1269.3,537.0 1270.3,538.5 1271.4,536.4 1272.4,536.8 1273.4,538.1 1274.4,538.1 1274.4,597.3 1273.4,596.4 1272.4,597.8 1271.4,596.1 1270.3,597.2 1269.3,597.0 1268.3,597.4 1267.3,598.8 1266.3,598.3 1265.3,597.9 1264.2,598.5 1263.2,596.7 1262.2,597.2 1261.2,596.7 1260.2,596.3 1259.2,596.3 1258.2,598.2 1257.1,597.9 1256.1,596.7 1255.1,597.5 1254.1,597.7 1253.1,598.0 1252.1,596.8 1251.0,598.4 1250.0,597.7 1249.0,597.3 1248.0,597.7 1247.0,597.4 1246.0,597.0 1245.0,597.1 1243.9,596.1 1242.9,597.8 1241.9,596.5 1240.9,596.6 1239.9,598.4 1238.9,597.5 1237.8,597.6 1236.8,598.6 1235.8,597.9 1234.8,598.1 1233.8,598.3 1232.8,598.3 1231.8,596.7 1230.7,598.0 1229.7,597.7 1228.7,596.7 1227.7,597.0 1226.7,597.5 1225.7,597.6 1224.6,598.2 1223.6,596.8 1222.6,596.3 1221.6,598.3"/><polygon points="1329.5,486.4 1330.5,483.7 1331.5,479.1 1332.5,474.0 1333.5,468.0 1334.6,467.5 1335.6,470.7 1336.6,477.7 1337.6,477.4 1338.6,479.8 1339.6,482.3 1340.6,482.4 1341.7,485.1 1342.7,485.1 1343.7,487.9 1344.7,487.6 1345.7,487.8 1346.7,487.5 1347.7,487.5 1348.7,488.0 1349.8,487.2 1350.8,487.6 1351.8,486.5 1352.8,487.3 1353.8,488.4 1354.8,488.4 1355.8,488.1 1356.8,487.9 1357.8,488.4 1358.9,488.3 1359.9,488.2 1360.9,488.6 1361.9,488.7 1362.9,488.8 1363.9,489.0 1364.9,488.8 1366.0,488.9 1367.0,488.7 1368.0,488.9 1369.0,488.8 1370.0,489.0 1370.0,492.4 1369.0,492.9 1368.0,493.1 1367.0,493.0 1366.0,492.7 1364.9,492.8 1363.9,492.7 1362.9,493.5 1361.9,493.5 1360.9,493.3 1359.9,493.4 1358.9,493.4 1357.8,493.8 1356.8,493.6 1355.8,493.6 1354.8,493.4 1353.8,493.4 1352.8,494.1 1351.8,494.4 1350.8,494.6 1349.8,494.6 1348.7,493.3 1347.7,493.7 1346.7,494.4 1345.7,493.9 1344.7,494.1 1343.7,493.7 1342.7,496.0 1341.7,497.3 1340.6,498.8 1339.6,499.9 1338.6,499.5 1337.6,503.0 1336.6,506.6 1335.6,507.3 1334.6,511.7 1333.5,511.0 1332.5,505.3 1331.5,499.7 1330.5,496.5 1329.5,494.6"/><polygon points="1329.5,568.1 1330.5,565.5 1331.5,563.5 1332.5,561.1 1333.5,557.3 1334.6,558.0 1335.6,559.7 1336.6,561.8 1337.6,562.8 1338.6,563.5 1339.6,563.7 1340.6,565.0 1341.7,565.5 1342.7,566.9 1343.7,568.0 1344.7,568.0 1345.7,567.5 1346.7,567.5 1347.7,567.7 1348.7,568.3 1349.8,568.0 1350.8,567.8 1351.8,567.8 1352.8,567.6 1353.8,568.4 1354.8,568.2 1355.8,568.3 1356.8,568.6 1357.8,568.4 1358.9,568.3 1359.9,568.3 1360.9,568.7 1361.9,568.6 1362.9,568.5 1363.9,568.6 1364.9,568.7 1366.0,568.6 1367.0,569.0 1368.0,569.0 1369.0,569.1 1370.0,569.0 1370.0,571.4 1369.0,571.6 1368.0,571.5 1367.0,571.4 1366.0,571.7 1364.9,571.7 1363.9,571.9 1362.9,571.7 1361.9,571.8 1360.9,571.9 1359.9,571.8 1358.9,571.8 1357.8,571.9 1356.8,571.8 1355.8,572.1 1354.8,572.2 1353.8,572.3 1352.8,572.9 1351.8,572.5 1350.8,572.5 1349.8,572.8 1348.7,572.1 1347.7,572.2 1346.7,572.6 1345.7,572.9 1344.7,572.6 1343.7,572.2 1342.7,574.1 1341.7,574.9 1340.6,574.1 1339.6,575.3 1338.6,576.0 1337.6,578.6 1336.6,580.4 1335.6,582.2 1334.6,582.0 1333.5,583.0 1332.5,580.1 1331.5,575.3 1330.5,573.8 1329.5,572.5"/><polygon points="1381.5,487.8 1384.0,490.0 1390.0,490.4 1390.0,491.6 1384.0,492.0 1381.5,494.2"/><polygon points="1381.5,568.1 1384.0,569.3 1390.0,569.7 1390.0,570.9 1384.0,571.3 1381.5,572.5"/></g><polygon points="520.5,665.2 521.5,665.4 522.5,664.3 523.5,664.9 524.5,665.7 525.5,665.0 526.5,665.0 527.5,664.8 528.5,665.5 529.5,665.4 530.5,665.3 531.5,665.7 532.5,665.6 533.5,665.0 534.5,664.8 535.5,665.2 536.5,664.1 537.5,664.9 538.5,665.1 539.5,665.4 540.5,665.3 541.5,664.8 542.5,665.0 543.5,665.7 544.5,664.7 545.5,664.8 546.5,664.8 547.5,665.2 548.5,665.1 549.5,665.2 550.5,665.2 551.5,664.9 552.5,665.2 553.5,665.0 554.5,665.5 555.5,665.4 556.5,665.5 557.5,665.1 558.5,665.4 559.5,665.0 560.5,665.4 561.5,665.2 562.5,665.0 563.5,665.3 564.5,665.5 565.5,664.9 566.5,665.3 567.5,665.6 568.5,664.1 569.5,665.3 570.5,665.4 571.5,665.7 572.5,665.5 573.5,665.1 574.5,665.4 575.5,665.6 576.5,665.4 577.5,665.5 578.5,665.3 579.5,665.5 580.5,665.7 581.5,664.9 581.5,671.7 580.5,671.3 579.5,671.7 578.5,670.9 577.5,671.8 576.5,671.8 575.5,671.1 574.5,671.5 573.5,672.5 572.5,671.7 571.5,671.6 570.5,671.6 569.5,670.9 568.5,671.1 567.5,671.8 566.5,671.1 565.5,671.2 564.5,671.0 563.5,671.3 562.5,671.8 561.5,671.2 560.5,671.0 559.5,671.9 558.5,670.9 557.5,671.6 556.5,671.7 555.5,671.6 554.5,671.3 553.5,671.7 552.5,671.3 551.5,671.4 550.5,671.1 549.5,671.3 548.5,671.1 547.5,671.2 546.5,671.4 545.5,671.5 544.5,671.2 543.5,670.9 542.5,671.0 541.5,671.5 540.5,670.9 539.5,671.6 538.5,671.6 537.5,672.0 536.5,671.9 535.5,671.0 534.5,671.7 533.5,671.4 532.5,671.4 531.5,671.4 530.5,671.6 529.5,671.1 528.5,671.0 527.5,670.9 526.5,671.3 525.5,671.6 524.5,671.4 523.5,671.5 522.5,671.0 521.5,671.2 520.5,671.8" fill="#2b8de0"/><polygon points="520.5,744.1 521.5,744.4 522.5,744.6 523.5,744.5 524.5,744.2 525.5,744.4 526.5,744.6 527.5,744.3 528.5,744.0 529.5,744.3 530.5,744.5 531.5,744.4 532.5,744.4 533.5,744.4 534.5,744.8 535.5,744.2 536.5,744.7 537.5,744.2 538.5,744.4 539.5,744.4 540.5,744.2 541.5,744.3 542.5,744.3 543.5,743.9 544.5,744.3 545.5,744.2 546.5,743.2 547.5,744.4 548.5,744.0 549.5,744.8 550.5,744.3 551.5,744.6 552.5,743.9 553.5,744.0 554.5,744.7 555.5,744.0 556.5,744.1 557.5,744.6 558.5,744.2 559.5,744.0 560.5,744.8 561.5,744.5 562.5,744.2 563.5,744.0 564.5,744.6 565.5,744.7 566.5,744.5 567.5,744.8 568.5,744.3 569.5,744.1 570.5,744.2 571.5,744.0 572.5,744.4 573.5,744.5 574.5,744.6 575.5,743.5 576.5,744.6 577.5,744.3 578.5,744.2 579.5,744.5 580.5,744.2 581.5,744.7 581.5,750.0 580.5,748.5 579.5,748.8 578.5,748.6 577.5,748.6 576.5,748.4 575.5,749.1 574.5,748.8 573.5,748.5 572.5,748.5 571.5,748.6 570.5,749.1 569.5,748.7 568.5,748.9 567.5,749.1 566.5,748.9 565.5,748.6 564.5,749.0 563.5,748.8 562.5,748.8 561.5,748.6 560.5,749.1 559.5,748.7 558.5,748.7 557.5,749.1 556.5,748.8 555.5,748.5 554.5,749.2 553.5,749.1 552.5,748.8 551.5,749.2 550.5,748.5 549.5,748.7 548.5,748.6 547.5,749.1 546.5,748.9 545.5,748.6 544.5,748.4 543.5,749.1 542.5,749.1 541.5,748.6 540.5,748.9 539.5,748.9 538.5,748.7 537.5,748.5 536.5,749.0 535.5,748.8 534.5,748.6 533.5,749.1 532.5,748.8 531.5,748.5 530.5,748.8 529.5,748.7 528.5,748.7 527.5,748.9 526.5,749.2 525.5,748.8 524.5,748.9 523.5,748.8 522.5,748.4 521.5,749.3 520.5,748.5" fill="#2b8de0"/><polygon points="609.3,665.7 610.3,665.4 611.3,665.6 612.3,665.7 613.3,665.2 614.3,665.9 615.3,665.5 616.3,665.4 617.3,665.1 618.3,665.0 619.3,665.5 620.3,665.0 621.3,664.9 622.3,665.1 623.3,665.2 624.3,664.2 625.3,665.6 626.3,665.2 627.3,665.4 628.3,664.8 629.3,665.6 630.3,665.5 631.3,664.9 632.3,664.9 633.3,665.5 634.3,665.9 635.3,665.5 636.3,665.4 637.3,665.7 637.3,672.3 636.3,671.1 635.3,671.5 634.3,671.1 633.3,671.4 632.3,671.0 631.3,671.1 630.3,670.8 629.3,670.8 628.3,671.6 627.3,671.5 626.3,671.0 625.3,671.3 624.3,671.3 623.3,671.4 622.3,671.1 621.3,670.7 620.3,670.7 619.3,671.3 618.3,671.1 617.3,671.2 616.3,671.1 615.3,671.0 614.3,671.4 613.3,671.5 612.3,670.7 611.3,671.5 610.3,670.9 609.3,670.7" fill="#2b9be0"/><polygon points="609.3,744.4 610.3,744.2 611.3,743.7 612.3,743.8 613.3,744.6 614.3,744.3 615.3,744.6 616.3,744.1 617.3,744.3 618.3,744.2 619.3,744.4 620.3,744.3 621.3,744.7 622.3,744.7 623.3,744.5 624.3,743.9 625.3,744.6 626.3,743.9 627.3,744.7 628.3,744.3 629.3,744.7 630.3,743.3 631.3,744.0 632.3,744.2 633.3,744.3 634.3,744.0 635.3,744.1 636.3,744.0 637.3,744.1 637.3,748.8 636.3,749.1 635.3,748.6 634.3,749.1 633.3,748.9 632.3,749.1 631.3,748.7 630.3,749.0 629.3,749.0 628.3,748.6 627.3,749.2 626.3,749.0 625.3,749.1 624.3,749.2 623.3,748.8 622.3,748.8 621.3,749.1 620.3,748.7 619.3,748.6 618.3,748.9 617.3,749.2 616.3,748.5 615.3,749.5 614.3,748.5 613.3,748.5 612.3,748.8 611.3,749.0 610.3,748.5 609.3,749.2" fill="#2b9be0"/><clipPath id="cs1a"><polygon points="609.3,665.7 610.3,665.4 611.3,665.6 612.3,665.7 613.3,665.2 614.3,665.9 615.3,665.5 616.3,665.4 617.3,665.1 618.3,665.0 619.3,665.5 620.3,665.0 621.3,664.9 622.3,665.1 623.3,665.2 624.3,664.2 625.3,665.6 626.3,665.2 627.3,665.4 628.3,664.8 629.3,665.6 630.3,665.5 631.3,664.9 632.3,664.9 633.3,665.5 634.3,665.9 635.3,665.5 636.3,665.4 637.3,665.7 637.3,672.3 636.3,671.1 635.3,671.5 634.3,671.1 633.3,671.4 632.3,671.0 631.3,671.1 630.3,670.8 629.3,670.8 628.3,671.6 627.3,671.5 626.3,671.0 625.3,671.3 624.3,671.3 623.3,671.4 622.3,671.1 621.3,670.7 620.3,670.7 619.3,671.3 618.3,671.1 617.3,671.2 616.3,671.1 615.3,671.0 614.3,671.4 613.3,671.5 612.3,670.7 611.3,671.5 610.3,670.9 609.3,670.7"/></clipPath><g clip-path="url(#cs1a)"><rect x="611.9" y="620" width="2.0" height="170" fill="#36a8e4"/><rect x="616.1" y="620" width="1.0" height="170" fill="#2b9be0"/><rect x="619.9" y="620" width="1.5" height="170" fill="#2460e0"/><rect x="623.0" y="620" width="0.9" height="170" fill="#2b9be0"/><rect x="625.1" y="620" width="1.6" height="170" fill="#2460e0"/><rect x="629.6" y="620" width="1.2" height="170" fill="#2b9be0"/><rect x="632.2" y="620" width="1.4" height="170" fill="#2b9be0"/><rect x="636.4" y="620" width="1.1" height="170" fill="#2460e0"/></g><clipPath id="cs1b"><polygon points="609.3,744.4 610.3,744.2 611.3,743.7 612.3,743.8 613.3,744.6 614.3,744.3 615.3,744.6 616.3,744.1 617.3,744.3 618.3,744.2 619.3,744.4 620.3,744.3 621.3,744.7 622.3,744.7 623.3,744.5 624.3,743.9 625.3,744.6 626.3,743.9 627.3,744.7 628.3,744.3 629.3,744.7 630.3,743.3 631.3,744.0 632.3,744.2 633.3,744.3 634.3,744.0 635.3,744.1 636.3,744.0 637.3,744.1 637.3,748.8 636.3,749.1 635.3,748.6 634.3,749.1 633.3,748.9 632.3,749.1 631.3,748.7 630.3,749.0 629.3,749.0 628.3,748.6 627.3,749.2 626.3,749.0 625.3,749.1 624.3,749.2 623.3,748.8 622.3,748.8 621.3,749.1 620.3,748.7 619.3,748.6 618.3,748.9 617.3,749.2 616.3,748.5 615.3,749.5 614.3,748.5 613.3,748.5 612.3,748.8 611.3,749.0 610.3,748.5 609.3,749.2"/></clipPath><g clip-path="url(#cs1b)"><rect x="610.1" y="620" width="2.0" height="170" fill="#2460e0"/><rect x="614.7" y="620" width="0.9" height="170" fill="#2b9be0"/><rect x="617.3" y="620" width="1.1" height="170" fill="#36a8e4"/><rect x="619.4" y="620" width="1.8" height="170" fill="#36a8e4"/><rect x="623.5" y="620" width="0.9" height="170" fill="#2460e0"/><rect x="625.9" y="620" width="2.2" height="170" fill="#2460e0"/><rect x="630.1" y="620" width="0.8" height="170" fill="#2b9be0"/><rect x="633.4" y="620" width="1.6" height="170" fill="#36a8e4"/><rect x="637.4" y="620" width="1.9" height="170" fill="#36a8e4"/></g><polygon points="637.5,662.2 638.5,662.3 639.5,661.0 640.5,662.3 641.6,663.2 642.6,662.7 643.6,662.7 644.6,662.2 645.6,662.9 646.6,661.7 647.6,662.9 648.7,663.2 649.7,660.0 650.7,661.6 651.7,663.0 652.7,659.5 653.7,663.3 654.8,660.5 655.8,661.3 656.8,662.5 657.8,661.1 658.8,662.2 659.8,661.8 660.8,663.3 661.9,661.4 662.9,659.6 663.9,661.2 664.9,659.5 665.9,662.8 666.9,661.5 668.0,661.9 669.0,660.3 670.0,661.8 671.0,661.5 672.0,662.7 673.0,661.7 674.0,663.0 675.1,662.3 676.1,662.3 677.1,662.5 678.1,660.7 679.1,661.7 680.1,662.5 681.1,661.3 682.2,662.2 683.2,663.0 684.2,661.2 685.2,662.3 686.2,661.1 687.2,662.4 688.2,661.5 689.3,662.5 690.3,661.3 691.3,662.6 692.3,661.5 693.3,662.4 694.3,663.3 695.4,662.3 696.4,663.1 697.4,662.3 698.4,661.3 698.4,675.3 697.4,674.1 696.4,674.2 695.4,673.4 694.3,675.4 693.3,673.7 692.3,674.5 691.3,675.0 690.3,676.1 689.3,676.0 688.2,674.7 687.2,673.6 686.2,673.6 685.2,674.5 684.2,673.9 683.2,676.3 682.2,675.2 681.1,675.3 680.1,677.8 679.1,675.0 678.1,675.2 677.1,676.8 676.1,675.2 675.1,675.3 674.0,675.1 673.0,675.6 672.0,675.0 671.0,673.8 670.0,673.6 669.0,675.4 668.0,674.6 666.9,674.8 665.9,675.2 664.9,674.7 663.9,674.1 662.9,674.8 661.9,674.0 660.8,675.0 659.8,674.4 658.8,674.5 657.8,674.7 656.8,673.5 655.8,675.3 654.8,675.6 653.7,673.3 652.7,674.2 651.7,673.4 650.7,674.4 649.7,673.4 648.7,677.6 647.6,674.0 646.6,673.8 645.6,673.5 644.6,674.6 643.6,674.3 642.6,675.0 641.6,676.8 640.5,673.7 639.5,675.1 638.5,674.1 637.5,673.6" fill="#2576e0"/><polygon points="637.5,742.3 638.5,742.5 639.5,741.6 640.5,742.0 641.6,742.4 642.6,742.5 643.6,740.9 644.6,741.4 645.6,742.0 646.6,742.3 647.6,741.6 648.7,741.9 649.7,742.3 650.7,739.1 651.7,741.4 652.7,741.6 653.7,742.1 654.8,742.0 655.8,742.6 656.8,741.5 657.8,741.6 658.8,742.1 659.8,741.9 660.8,742.7 661.9,741.9 662.9,742.7 663.9,742.7 664.9,742.1 665.9,742.6 666.9,742.1 668.0,742.3 669.0,741.0 670.0,741.4 671.0,742.3 672.0,741.2 673.0,742.2 674.0,741.6 675.1,742.4 676.1,741.9 677.1,742.7 678.1,741.7 679.1,741.9 680.1,742.4 681.1,742.2 682.2,741.5 683.2,741.6 684.2,742.5 685.2,742.8 686.2,742.6 687.2,741.7 688.2,742.0 689.3,741.3 690.3,741.5 691.3,742.4 692.3,742.2 693.3,741.8 694.3,741.6 695.4,742.7 696.4,739.8 697.4,741.6 698.4,741.0 698.4,750.8 697.4,750.9 696.4,752.0 695.4,752.2 694.3,751.0 693.3,752.2 692.3,751.8 691.3,751.9 690.3,752.3 689.3,751.7 688.2,751.6 687.2,752.3 686.2,751.2 685.2,750.9 684.2,752.1 683.2,752.0 682.2,750.6 681.1,751.9 680.1,752.3 679.1,751.2 678.1,751.7 677.1,752.1 676.1,751.0 675.1,750.8 674.0,751.1 673.0,750.4 672.0,751.4 671.0,751.1 670.0,752.0 669.0,752.1 668.0,751.3 666.9,751.8 665.9,750.5 664.9,750.6 663.9,750.6 662.9,751.8 661.9,750.9 660.8,750.9 659.8,751.4 658.8,754.3 657.8,751.3 656.8,751.5 655.8,751.8 654.8,751.1 653.7,751.7 652.7,752.3 651.7,751.7 650.7,751.2 649.7,751.4 648.7,750.4 647.6,751.6 646.6,752.1 645.6,750.6 644.6,750.5 643.6,751.0 642.6,750.4 641.6,751.7 640.5,751.2 639.5,750.5 638.5,752.1 637.5,750.6" fill="#2576e0"/><clipPath id="cs2a"><polygon points="637.5,662.2 638.5,662.3 639.5,661.0 640.5,662.3 641.6,663.2 642.6,662.7 643.6,662.7 644.6,662.2 645.6,662.9 646.6,661.7 647.6,662.9 648.7,663.2 649.7,660.0 650.7,661.6 651.7,663.0 652.7,659.5 653.7,663.3 654.8,660.5 655.8,661.3 656.8,662.5 657.8,661.1 658.8,662.2 659.8,661.8 660.8,663.3 661.9,661.4 662.9,659.6 663.9,661.2 664.9,659.5 665.9,662.8 666.9,661.5 668.0,661.9 669.0,660.3 670.0,661.8 671.0,661.5 672.0,662.7 673.0,661.7 674.0,663.0 675.1,662.3 676.1,662.3 677.1,662.5 678.1,660.7 679.1,661.7 680.1,662.5 681.1,661.3 682.2,662.2 683.2,663.0 684.2,661.2 685.2,662.3 686.2,661.1 687.2,662.4 688.2,661.5 689.3,662.5 690.3,661.3 691.3,662.6 692.3,661.5 693.3,662.4 694.3,663.3 695.4,662.3 696.4,663.1 697.4,662.3 698.4,661.3 698.4,675.3 697.4,674.1 696.4,674.2 695.4,673.4 694.3,675.4 693.3,673.7 692.3,674.5 691.3,675.0 690.3,676.1 689.3,676.0 688.2,674.7 687.2,673.6 686.2,673.6 685.2,674.5 684.2,673.9 683.2,676.3 682.2,675.2 681.1,675.3 680.1,677.8 679.1,675.0 678.1,675.2 677.1,676.8 676.1,675.2 675.1,675.3 674.0,675.1 673.0,675.6 672.0,675.0 671.0,673.8 670.0,673.6 669.0,675.4 668.0,674.6 666.9,674.8 665.9,675.2 664.9,674.7 663.9,674.1 662.9,674.8 661.9,674.0 660.8,675.0 659.8,674.4 658.8,674.5 657.8,674.7 656.8,673.5 655.8,675.3 654.8,675.6 653.7,673.3 652.7,674.2 651.7,673.4 650.7,674.4 649.7,673.4 648.7,677.6 647.6,674.0 646.6,673.8 645.6,673.5 644.6,674.6 643.6,674.3 642.6,675.0 641.6,676.8 640.5,673.7 639.5,675.1 638.5,674.1 637.5,673.6"/></clipPath><g clip-path="url(#cs2a)"><rect x="638.8" y="620" width="1.1" height="170" fill="#2b9be0"/><rect x="640.8" y="620" width="1.8" height="170" fill="#2b9be0"/><rect x="643.7" y="620" width="1.8" height="170" fill="#2460e0"/><rect x="647.0" y="620" width="1.5" height="170" fill="#36a8e4"/><rect x="649.5" y="620" width="1.7" height="170" fill="#2b9be0"/><rect x="652.9" y="620" width="2.2" height="170" fill="#2b9be0"/><rect x="656.0" y="620" width="1.3" height="170" fill="#2b9be0"/><rect x="658.7" y="620" width="1.0" height="170" fill="#2b9be0"/><rect x="661.6" y="620" width="2.0" height="170" fill="#36a8e4"/><rect x="664.6" y="620" width="1.7" height="170" fill="#2460e0"/><rect x="667.4" y="620" width="1.1" height="170" fill="#2460e0"/><rect x="670.3" y="620" width="2.1" height="170" fill="#2460e0"/><rect x="675.0" y="620" width="1.1" height="170" fill="#2460e0"/><rect x="676.9" y="620" width="1.5" height="170" fill="#2460e0"/><rect x="679.6" y="620" width="1.6" height="170" fill="#2b9be0"/><rect x="683.5" y="620" width="1.4" height="170" fill="#36a8e4"/><rect x="686.2" y="620" width="1.9" height="170" fill="#2460e0"/><rect x="691.0" y="620" width="0.9" height="170" fill="#36a8e4"/><rect x="694.3" y="620" width="1.2" height="170" fill="#36a8e4"/><rect x="696.6" y="620" width="0.9" height="170" fill="#36a8e4"/><rect x="698.4" y="620" width="2.1" height="170" fill="#2460e0"/></g><clipPath id="cs2b"><polygon points="637.5,742.3 638.5,742.5 639.5,741.6 640.5,742.0 641.6,742.4 642.6,742.5 643.6,740.9 644.6,741.4 645.6,742.0 646.6,742.3 647.6,741.6 648.7,741.9 649.7,742.3 650.7,739.1 651.7,741.4 652.7,741.6 653.7,742.1 654.8,742.0 655.8,742.6 656.8,741.5 657.8,741.6 658.8,742.1 659.8,741.9 660.8,742.7 661.9,741.9 662.9,742.7 663.9,742.7 664.9,742.1 665.9,742.6 666.9,742.1 668.0,742.3 669.0,741.0 670.0,741.4 671.0,742.3 672.0,741.2 673.0,742.2 674.0,741.6 675.1,742.4 676.1,741.9 677.1,742.7 678.1,741.7 679.1,741.9 680.1,742.4 681.1,742.2 682.2,741.5 683.2,741.6 684.2,742.5 685.2,742.8 686.2,742.6 687.2,741.7 688.2,742.0 689.3,741.3 690.3,741.5 691.3,742.4 692.3,742.2 693.3,741.8 694.3,741.6 695.4,742.7 696.4,739.8 697.4,741.6 698.4,741.0 698.4,750.8 697.4,750.9 696.4,752.0 695.4,752.2 694.3,751.0 693.3,752.2 692.3,751.8 691.3,751.9 690.3,752.3 689.3,751.7 688.2,751.6 687.2,752.3 686.2,751.2 685.2,750.9 684.2,752.1 683.2,752.0 682.2,750.6 681.1,751.9 680.1,752.3 679.1,751.2 678.1,751.7 677.1,752.1 676.1,751.0 675.1,750.8 674.0,751.1 673.0,750.4 672.0,751.4 671.0,751.1 670.0,752.0 669.0,752.1 668.0,751.3 666.9,751.8 665.9,750.5 664.9,750.6 663.9,750.6 662.9,751.8 661.9,750.9 660.8,750.9 659.8,751.4 658.8,754.3 657.8,751.3 656.8,751.5 655.8,751.8 654.8,751.1 653.7,751.7 652.7,752.3 651.7,751.7 650.7,751.2 649.7,751.4 648.7,750.4 647.6,751.6 646.6,752.1 645.6,750.6 644.6,750.5 643.6,751.0 642.6,750.4 641.6,751.7 640.5,751.2 639.5,750.5 638.5,752.1 637.5,750.6"/></clipPath><g clip-path="url(#cs2b)"><rect x="640.1" y="620" width="1.4" height="170" fill="#2460e0"/><rect x="644.1" y="620" width="1.2" height="170" fill="#36a8e4"/><rect x="648.0" y="620" width="1.1" height="170" fill="#2b9be0"/><rect x="650.0" y="620" width="2.0" height="170" fill="#36a8e4"/><rect x="654.1" y="620" width="1.1" height="170" fill="#36a8e4"/><rect x="658.0" y="620" width="2.1" height="170" fill="#2b9be0"/><rect x="662.1" y="620" width="2.0" height="170" fill="#2b9be0"/><rect x="666.2" y="620" width="0.8" height="170" fill="#2460e0"/><rect x="668.8" y="620" width="1.6" height="170" fill="#2460e0"/><rect x="671.9" y="620" width="0.8" height="170" fill="#36a8e4"/><rect x="674.1" y="620" width="0.9" height="170" fill="#2b9be0"/><rect x="676.8" y="620" width="1.1" height="170" fill="#2b9be0"/><rect x="679.2" y="620" width="0.8" height="170" fill="#36a8e4"/><rect x="682.3" y="620" width="1.6" height="170" fill="#2b9be0"/><rect x="685.8" y="620" width="1.3" height="170" fill="#2b9be0"/><rect x="688.9" y="620" width="1.8" height="170" fill="#36a8e4"/><rect x="693.6" y="620" width="0.9" height="170" fill="#36a8e4"/><rect x="697.2" y="620" width="1.8" height="170" fill="#2b9be0"/></g><polygon points="698.6,655.8 699.6,655.2 700.6,655.0 701.6,655.0 702.6,655.6 703.7,656.3 704.7,656.2 705.7,655.4 706.7,655.3 707.7,654.2 708.7,656.1 709.7,655.8 710.7,655.6 711.7,655.4 712.8,654.0 713.8,655.5 714.8,655.7 715.8,655.5 716.8,655.7 717.8,654.0 718.8,655.1 719.8,656.1 720.8,655.1 721.9,656.2 722.9,655.9 723.9,655.0 724.9,655.3 725.9,655.0 726.9,656.4 727.9,654.9 728.9,655.1 730.0,655.3 731.0,654.8 732.0,655.0 733.0,655.8 734.0,655.6 735.0,655.0 736.0,656.0 737.0,655.5 738.0,656.2 739.1,654.9 740.1,655.2 741.1,655.9 742.1,656.3 743.1,655.7 744.1,654.9 745.1,655.3 746.1,656.3 747.1,654.9 748.2,655.4 749.2,653.9 750.2,655.1 751.2,656.2 752.2,655.8 753.2,655.3 754.2,655.6 755.2,655.1 756.2,656.0 757.3,656.3 758.3,655.9 759.3,655.0 760.3,653.5 761.3,655.7 761.3,680.4 760.3,681.0 759.3,680.9 758.3,680.6 757.3,680.7 756.2,681.1 755.2,681.1 754.2,681.2 753.2,680.8 752.2,681.5 751.2,680.9 750.2,680.3 749.2,681.0 748.2,680.2 747.1,681.4 746.1,680.6 745.1,680.4 744.1,681.3 743.1,681.1 742.1,681.6 741.1,680.5 740.1,681.1 739.1,681.9 738.0,681.4 737.0,680.8 736.0,681.2 735.0,681.2 734.0,680.4 733.0,680.6 732.0,680.4 731.0,681.5 730.0,680.9 728.9,680.3 727.9,681.1 726.9,680.8 725.9,681.3 724.9,680.8 723.9,681.7 722.9,681.4 721.9,681.4 720.8,681.5 719.8,681.2 718.8,681.2 717.8,680.4 716.8,682.0 715.8,680.8 714.8,680.4 713.8,680.2 712.8,680.8 711.7,681.8 710.7,681.6 709.7,680.3 708.7,680.7 707.7,680.9 706.7,681.1 705.7,681.5 704.7,680.3 703.7,682.1 702.6,680.4 701.6,680.7 700.6,680.6 699.6,680.8 698.6,680.4" fill="#2468e0"/><polygon points="698.6,735.5 699.6,734.1 700.6,736.1 701.6,735.0 702.6,735.4 703.7,735.7 704.7,736.1 705.7,735.3 706.7,735.3 707.7,735.5 708.7,736.1 709.7,736.2 710.7,733.7 711.7,735.9 712.8,735.1 713.8,735.9 714.8,736.2 715.8,735.8 716.8,736.1 717.8,735.4 718.8,735.1 719.8,735.1 720.8,735.4 721.9,735.2 722.9,735.3 723.9,735.1 724.9,735.3 725.9,736.3 726.9,735.6 727.9,735.7 728.9,735.5 730.0,735.4 731.0,735.6 732.0,734.5 733.0,735.1 734.0,736.0 735.0,735.6 736.0,735.6 737.0,735.0 738.0,735.6 739.1,735.4 740.1,735.9 741.1,735.8 742.1,735.3 743.1,736.1 744.1,736.2 745.1,735.6 746.1,735.2 747.1,735.5 748.2,735.8 749.2,735.9 750.2,735.3 751.2,735.7 752.2,735.6 753.2,736.0 754.2,735.6 755.2,735.6 756.2,735.1 757.3,734.6 758.3,735.6 759.3,735.9 760.3,735.0 761.3,735.7 761.3,757.2 760.3,757.9 759.3,757.6 758.3,757.6 757.3,758.2 756.2,759.2 755.2,757.8 754.2,757.8 753.2,757.3 752.2,756.9 751.2,758.2 750.2,756.9 749.2,757.8 748.2,757.9 747.1,757.3 746.1,757.2 745.1,756.9 744.1,758.2 743.1,757.5 742.1,757.9 741.1,758.1 740.1,758.8 739.1,757.2 738.0,757.8 737.0,757.2 736.0,757.6 735.0,758.0 734.0,757.8 733.0,757.5 732.0,757.6 731.0,756.9 730.0,758.2 728.9,757.8 727.9,757.1 726.9,759.3 725.9,758.0 724.9,757.7 723.9,757.1 722.9,757.9 721.9,756.9 720.8,758.2 719.8,757.6 718.8,757.3 717.8,759.1 716.8,757.0 715.8,757.6 714.8,757.8 713.8,757.8 712.8,758.8 711.7,757.1 710.7,757.2 709.7,757.1 708.7,758.7 707.7,758.0 706.7,757.0 705.7,757.6 704.7,757.3 703.7,757.5 702.6,757.6 701.6,757.6 700.6,757.3 699.6,758.0 698.6,757.1" fill="#2468e0"/><polygon points="761.5,651.7 762.5,652.4 763.5,652.2 764.5,650.4 765.6,651.7 766.6,652.7 767.6,652.2 768.6,652.0 769.6,653.2 770.6,652.7 771.6,651.5 772.7,653.0 773.7,651.4 774.7,652.9 775.7,652.0 776.7,653.1 777.7,653.1 778.7,652.5 779.8,651.5 780.8,651.6 781.8,651.7 782.8,651.7 783.8,651.8 784.8,652.6 785.8,652.4 786.9,652.5 787.9,651.4 788.9,652.6 789.9,652.9 790.9,651.5 791.9,651.3 792.9,651.5 794.0,651.7 795.0,653.2 796.0,652.2 797.0,652.4 798.0,652.4 799.0,651.8 800.1,652.3 801.1,651.7 802.1,652.5 803.1,651.5 804.1,652.1 805.1,651.5 806.1,650.2 807.2,652.8 808.2,651.7 809.2,651.7 810.2,652.9 811.2,649.7 812.2,652.5 813.2,653.1 814.3,651.6 815.3,653.2 816.3,652.1 817.3,652.1 818.3,652.4 819.3,652.8 820.3,652.0 821.4,652.0 822.4,653.1 823.4,651.7 824.4,652.6 824.4,684.9 823.4,683.7 822.4,685.2 821.4,684.7 820.3,684.4 819.3,683.8 818.3,685.1 817.3,684.0 816.3,684.1 815.3,683.6 814.3,685.4 813.2,683.6 812.2,683.8 811.2,683.8 810.2,685.2 809.2,685.6 808.2,684.0 807.2,683.7 806.1,684.5 805.1,684.4 804.1,684.6 803.1,684.1 802.1,685.0 801.1,683.5 800.1,684.9 799.0,683.5 798.0,685.7 797.0,684.4 796.0,683.7 795.0,684.5 794.0,684.7 792.9,683.4 791.9,684.6 790.9,685.1 789.9,685.1 788.9,684.0 787.9,685.1 786.9,684.4 785.8,685.1 784.8,683.5 783.8,683.6 782.8,684.3 781.8,683.8 780.8,683.7 779.8,683.9 778.7,683.6 777.7,684.6 776.7,683.8 775.7,683.6 774.7,684.1 773.7,685.1 772.7,684.4 771.6,684.5 770.6,683.8 769.6,684.9 768.6,684.7 767.6,683.6 766.6,683.7 765.6,684.0 764.5,684.9 763.5,684.9 762.5,684.8 761.5,685.1" fill="#2146e0"/><polygon points="761.5,733.3 762.5,733.9 763.5,733.4 764.5,733.6 765.6,734.1 766.6,734.3 767.6,733.4 768.6,734.1 769.6,733.0 770.6,733.5 771.6,733.9 772.7,733.7 773.7,733.5 774.7,733.3 775.7,732.8 776.7,734.1 777.7,733.9 778.7,732.9 779.8,732.9 780.8,732.9 781.8,733.2 782.8,733.3 783.8,731.6 784.8,734.0 785.8,733.7 786.9,733.1 787.9,732.9 788.9,731.5 789.9,733.6 790.9,733.9 791.9,733.7 792.9,733.8 794.0,734.2 795.0,733.9 796.0,734.1 797.0,733.8 798.0,733.6 799.0,734.0 800.1,732.8 801.1,733.7 802.1,734.0 803.1,734.1 804.1,733.6 805.1,733.3 806.1,734.2 807.2,733.0 808.2,734.2 809.2,733.6 810.2,734.3 811.2,734.0 812.2,733.9 813.2,732.9 814.3,731.3 815.3,733.1 816.3,734.3 817.3,734.0 818.3,734.2 819.3,733.0 820.3,733.8 821.4,733.7 822.4,734.2 823.4,734.2 824.4,733.2 824.4,760.3 823.4,759.2 822.4,760.4 821.4,760.0 820.3,759.1 819.3,759.1 818.3,759.2 817.3,759.1 816.3,759.3 815.3,759.4 814.3,759.0 813.2,759.8 812.2,760.2 811.2,760.2 810.2,759.5 809.2,759.8 808.2,760.1 807.2,759.4 806.1,759.6 805.1,759.2 804.1,760.2 803.1,760.0 802.1,759.6 801.1,759.6 800.1,759.7 799.0,759.9 798.0,758.9 797.0,759.0 796.0,760.3 795.0,759.5 794.0,759.4 792.9,759.8 791.9,760.3 790.9,759.6 789.9,759.9 788.9,759.9 787.9,759.5 786.9,759.5 785.8,759.6 784.8,759.1 783.8,760.3 782.8,759.1 781.8,759.7 780.8,759.5 779.8,760.0 778.7,758.9 777.7,759.9 776.7,759.4 775.7,759.6 774.7,759.1 773.7,759.1 772.7,759.2 771.6,759.1 770.6,760.3 769.6,759.0 768.6,759.7 767.6,760.1 766.6,759.1 765.6,760.3 764.5,759.9 763.5,759.9 762.5,759.1 761.5,760.2" fill="#2468e0"/><clipPath id="cs4a"><polygon points="761.5,651.7 762.5,652.4 763.5,652.2 764.5,650.4 765.6,651.7 766.6,652.7 767.6,652.2 768.6,652.0 769.6,653.2 770.6,652.7 771.6,651.5 772.7,653.0 773.7,651.4 774.7,652.9 775.7,652.0 776.7,653.1 777.7,653.1 778.7,652.5 779.8,651.5 780.8,651.6 781.8,651.7 782.8,651.7 783.8,651.8 784.8,652.6 785.8,652.4 786.9,652.5 787.9,651.4 788.9,652.6 789.9,652.9 790.9,651.5 791.9,651.3 792.9,651.5 794.0,651.7 795.0,653.2 796.0,652.2 797.0,652.4 798.0,652.4 799.0,651.8 800.1,652.3 801.1,651.7 802.1,652.5 803.1,651.5 804.1,652.1 805.1,651.5 806.1,650.2 807.2,652.8 808.2,651.7 809.2,651.7 810.2,652.9 811.2,649.7 812.2,652.5 813.2,653.1 814.3,651.6 815.3,653.2 816.3,652.1 817.3,652.1 818.3,652.4 819.3,652.8 820.3,652.0 821.4,652.0 822.4,653.1 823.4,651.7 824.4,652.6 824.4,684.9 823.4,683.7 822.4,685.2 821.4,684.7 820.3,684.4 819.3,683.8 818.3,685.1 817.3,684.0 816.3,684.1 815.3,683.6 814.3,685.4 813.2,683.6 812.2,683.8 811.2,683.8 810.2,685.2 809.2,685.6 808.2,684.0 807.2,683.7 806.1,684.5 805.1,684.4 804.1,684.6 803.1,684.1 802.1,685.0 801.1,683.5 800.1,684.9 799.0,683.5 798.0,685.7 797.0,684.4 796.0,683.7 795.0,684.5 794.0,684.7 792.9,683.4 791.9,684.6 790.9,685.1 789.9,685.1 788.9,684.0 787.9,685.1 786.9,684.4 785.8,685.1 784.8,683.5 783.8,683.6 782.8,684.3 781.8,683.8 780.8,683.7 779.8,683.9 778.7,683.6 777.7,684.6 776.7,683.8 775.7,683.6 774.7,684.1 773.7,685.1 772.7,684.4 771.6,684.5 770.6,683.8 769.6,684.9 768.6,684.7 767.6,683.6 766.6,683.7 765.6,684.0 764.5,684.9 763.5,684.9 762.5,684.8 761.5,685.1"/></clipPath><g clip-path="url(#cs4a)"><rect x="764.0" y="620" width="1.9" height="170" fill="#3f95e4"/><rect x="768.0" y="620" width="0.9" height="170" fill="#3a8ce0"/><rect x="771.5" y="620" width="2.0" height="170" fill="#3f95e4"/><rect x="776.3" y="620" width="1.8" height="170" fill="#3f95e4"/><rect x="779.8" y="620" width="1.3" height="170" fill="#3f95e4"/><rect x="782.5" y="620" width="1.7" height="170" fill="#3f95e4"/><rect x="787.4" y="620" width="2.0" height="170" fill="#3f95e4"/><rect x="791.7" y="620" width="1.9" height="170" fill="#2b6ee0"/><rect x="796.7" y="620" width="1.1" height="170" fill="#2b6ee0"/><rect x="798.9" y="620" width="1.1" height="170" fill="#3f95e4"/><rect x="800.8" y="620" width="1.0" height="170" fill="#3a8ce0"/><rect x="802.6" y="620" width="0.8" height="170" fill="#3f95e4"/><rect x="804.9" y="620" width="1.2" height="170" fill="#3f95e4"/><rect x="807.1" y="620" width="1.3" height="170" fill="#3f95e4"/><rect x="810.5" y="620" width="1.7" height="170" fill="#3f95e4"/><rect x="813.4" y="620" width="1.1" height="170" fill="#2b6ee0"/><rect x="817.1" y="620" width="1.5" height="170" fill="#3f95e4"/><rect x="819.7" y="620" width="1.0" height="170" fill="#3f95e4"/><rect x="821.7" y="620" width="0.9" height="170" fill="#2b6ee0"/><rect x="825.2" y="620" width="1.3" height="170" fill="#2b6ee0"/></g><clipPath id="cs4b"><polygon points="761.5,733.3 762.5,733.9 763.5,733.4 764.5,733.6 765.6,734.1 766.6,734.3 767.6,733.4 768.6,734.1 769.6,733.0 770.6,733.5 771.6,733.9 772.7,733.7 773.7,733.5 774.7,733.3 775.7,732.8 776.7,734.1 777.7,733.9 778.7,732.9 779.8,732.9 780.8,732.9 781.8,733.2 782.8,733.3 783.8,731.6 784.8,734.0 785.8,733.7 786.9,733.1 787.9,732.9 788.9,731.5 789.9,733.6 790.9,733.9 791.9,733.7 792.9,733.8 794.0,734.2 795.0,733.9 796.0,734.1 797.0,733.8 798.0,733.6 799.0,734.0 800.1,732.8 801.1,733.7 802.1,734.0 803.1,734.1 804.1,733.6 805.1,733.3 806.1,734.2 807.2,733.0 808.2,734.2 809.2,733.6 810.2,734.3 811.2,734.0 812.2,733.9 813.2,732.9 814.3,731.3 815.3,733.1 816.3,734.3 817.3,734.0 818.3,734.2 819.3,733.0 820.3,733.8 821.4,733.7 822.4,734.2 823.4,734.2 824.4,733.2 824.4,760.3 823.4,759.2 822.4,760.4 821.4,760.0 820.3,759.1 819.3,759.1 818.3,759.2 817.3,759.1 816.3,759.3 815.3,759.4 814.3,759.0 813.2,759.8 812.2,760.2 811.2,760.2 810.2,759.5 809.2,759.8 808.2,760.1 807.2,759.4 806.1,759.6 805.1,759.2 804.1,760.2 803.1,760.0 802.1,759.6 801.1,759.6 800.1,759.7 799.0,759.9 798.0,758.9 797.0,759.0 796.0,760.3 795.0,759.5 794.0,759.4 792.9,759.8 791.9,760.3 790.9,759.6 789.9,759.9 788.9,759.9 787.9,759.5 786.9,759.5 785.8,759.6 784.8,759.1 783.8,760.3 782.8,759.1 781.8,759.7 780.8,759.5 779.8,760.0 778.7,758.9 777.7,759.9 776.7,759.4 775.7,759.6 774.7,759.1 773.7,759.1 772.7,759.2 771.6,759.1 770.6,760.3 769.6,759.0 768.6,759.7 767.6,760.1 766.6,759.1 765.6,760.3 764.5,759.9 763.5,759.9 762.5,759.1 761.5,760.2"/></clipPath><g clip-path="url(#cs4b)"><rect x="763.8" y="620" width="2.1" height="170" fill="#2b55e0"/><rect x="767.0" y="620" width="1.4" height="170" fill="#2b55e0"/><rect x="770.8" y="620" width="1.4" height="170" fill="#2b7ae0"/><rect x="777.2" y="620" width="1.7" height="170" fill="#2b55e0"/><rect x="779.9" y="620" width="2.0" height="170" fill="#2b7ae0"/><rect x="782.7" y="620" width="1.0" height="170" fill="#2b7ae0"/><rect x="785.8" y="620" width="1.6" height="170" fill="#2b7ae0"/><rect x="792.1" y="620" width="0.9" height="170" fill="#2b55e0"/><rect x="794.9" y="620" width="1.5" height="170" fill="#2b55e0"/><rect x="798.9" y="620" width="1.9" height="170" fill="#2b55e0"/><rect x="803.1" y="620" width="1.2" height="170" fill="#2b7ae0"/><rect x="808.8" y="620" width="2.1" height="170" fill="#2b55e0"/><rect x="813.0" y="620" width="1.6" height="170" fill="#2b55e0"/><rect x="815.6" y="620" width="2.0" height="170" fill="#2b7ae0"/><rect x="819.8" y="620" width="1.4" height="170" fill="#2b7ae0"/><rect x="822.7" y="620" width="1.3" height="170" fill="#2b55e0"/><rect x="827.7" y="620" width="1.6" height="170" fill="#2b55e0"/></g><polygon points="824.6,654.3 825.6,653.3 826.6,653.7 827.6,654.4 828.6,650.7 829.7,653.9 830.7,653.8 831.7,654.5 832.7,654.3 833.7,653.0 834.7,652.8 835.7,652.7 836.7,653.4 837.7,652.9 838.8,653.4 839.8,652.8 840.8,654.1 841.8,653.4 842.8,653.9 843.8,653.1 844.8,654.0 845.8,654.0 846.8,653.8 847.9,654.4 848.9,654.4 849.9,652.6 850.9,654.1 851.9,653.3 852.9,652.9 853.9,653.3 854.9,653.6 856.0,654.1 857.0,652.6 858.0,652.9 859.0,653.8 860.0,654.0 861.0,654.4 862.0,653.2 863.0,654.5 864.0,653.4 865.1,653.5 866.1,652.7 867.1,653.4 868.1,654.1 869.1,653.0 870.1,653.0 871.1,653.6 872.1,652.6 873.1,653.9 874.2,652.9 875.2,653.9 876.2,652.7 877.2,654.4 878.2,651.7 879.2,653.1 880.2,653.8 881.2,653.5 882.2,653.2 883.3,652.4 884.3,652.8 885.3,653.5 886.3,653.6 887.3,652.9 887.3,684.2 886.3,685.4 885.3,685.7 884.3,685.7 883.3,684.8 882.2,686.0 881.2,685.6 880.2,684.2 879.2,685.2 878.2,685.1 877.2,685.0 876.2,685.6 875.2,684.4 874.2,684.8 873.1,685.1 872.1,684.1 871.1,684.4 870.1,685.1 869.1,684.8 868.1,686.0 867.1,684.5 866.1,685.7 865.1,684.3 864.0,684.4 863.0,685.3 862.0,685.7 861.0,684.2 860.0,684.9 859.0,685.1 858.0,687.6 857.0,685.3 856.0,684.9 854.9,684.2 853.9,685.4 852.9,685.0 851.9,684.6 850.9,685.2 849.9,685.9 848.9,684.3 847.9,685.8 846.8,684.8 845.8,685.1 844.8,684.5 843.8,684.3 842.8,685.8 841.8,684.8 840.8,684.3 839.8,685.4 838.8,684.7 837.7,685.6 836.7,684.8 835.7,684.9 834.7,685.9 833.7,684.4 832.7,684.7 831.7,686.7 830.7,684.8 829.7,684.5 828.6,684.2 827.6,685.9 826.6,686.0 825.6,685.0 824.6,685.1" fill="#2b8be0"/><polygon points="824.6,733.5 825.6,734.2 826.6,733.3 827.6,733.3 828.6,734.4 829.7,733.2 830.7,734.2 831.7,734.4 832.7,734.0 833.7,734.6 834.7,733.5 835.7,734.0 836.7,734.1 837.7,731.5 838.8,734.7 839.8,733.2 840.8,733.4 841.8,734.3 842.8,733.7 843.8,734.1 844.8,733.7 845.8,732.9 846.8,733.2 847.9,732.3 848.9,734.6 849.9,734.2 850.9,733.6 851.9,734.1 852.9,733.2 853.9,733.2 854.9,734.6 856.0,734.1 857.0,734.6 858.0,734.1 859.0,734.4 860.0,733.5 861.0,734.0 862.0,734.1 863.0,734.2 864.0,734.4 865.1,732.9 866.1,733.8 867.1,734.1 868.1,733.2 869.1,734.6 870.1,734.2 871.1,734.7 872.1,734.1 873.1,733.5 874.2,734.0 875.2,733.5 876.2,734.0 877.2,734.4 878.2,734.1 879.2,734.1 880.2,733.4 881.2,734.2 882.2,733.2 883.3,734.6 884.3,734.2 885.3,733.9 886.3,734.8 887.3,733.9 887.3,759.9 886.3,759.4 885.3,759.8 884.3,759.5 883.3,758.7 882.2,758.6 881.2,759.7 880.2,759.7 879.2,759.9 878.2,761.4 877.2,759.4 876.2,758.8 875.2,759.6 874.2,759.0 873.1,759.2 872.1,758.7 871.1,759.0 870.1,759.7 869.1,758.5 868.1,758.8 867.1,759.8 866.1,759.4 865.1,759.3 864.0,759.2 863.0,759.2 862.0,761.0 861.0,759.1 860.0,761.0 859.0,760.0 858.0,759.7 857.0,759.3 856.0,759.8 854.9,759.8 853.9,758.5 852.9,759.7 851.9,761.3 850.9,758.5 849.9,759.3 848.9,759.3 847.9,758.7 846.8,759.7 845.8,759.7 844.8,758.5 843.8,759.4 842.8,759.2 841.8,758.9 840.8,758.7 839.8,759.2 838.8,759.9 837.7,760.1 836.7,758.5 835.7,760.0 834.7,759.3 833.7,758.5 832.7,759.6 831.7,759.8 830.7,759.4 829.7,759.1 828.6,759.4 827.6,759.2 826.6,758.8 825.6,759.8 824.6,759.9" fill="#d242b4"/><clipPath id="cs5b"><polygon points="824.6,733.5 825.6,734.2 826.6,733.3 827.6,733.3 828.6,734.4 829.7,733.2 830.7,734.2 831.7,734.4 832.7,734.0 833.7,734.6 834.7,733.5 835.7,734.0 836.7,734.1 837.7,731.5 838.8,734.7 839.8,733.2 840.8,733.4 841.8,734.3 842.8,733.7 843.8,734.1 844.8,733.7 845.8,732.9 846.8,733.2 847.9,732.3 848.9,734.6 849.9,734.2 850.9,733.6 851.9,734.1 852.9,733.2 853.9,733.2 854.9,734.6 856.0,734.1 857.0,734.6 858.0,734.1 859.0,734.4 860.0,733.5 861.0,734.0 862.0,734.1 863.0,734.2 864.0,734.4 865.1,732.9 866.1,733.8 867.1,734.1 868.1,733.2 869.1,734.6 870.1,734.2 871.1,734.7 872.1,734.1 873.1,733.5 874.2,734.0 875.2,733.5 876.2,734.0 877.2,734.4 878.2,734.1 879.2,734.1 880.2,733.4 881.2,734.2 882.2,733.2 883.3,734.6 884.3,734.2 885.3,733.9 886.3,734.8 887.3,733.9 887.3,759.9 886.3,759.4 885.3,759.8 884.3,759.5 883.3,758.7 882.2,758.6 881.2,759.7 880.2,759.7 879.2,759.9 878.2,761.4 877.2,759.4 876.2,758.8 875.2,759.6 874.2,759.0 873.1,759.2 872.1,758.7 871.1,759.0 870.1,759.7 869.1,758.5 868.1,758.8 867.1,759.8 866.1,759.4 865.1,759.3 864.0,759.2 863.0,759.2 862.0,761.0 861.0,759.1 860.0,761.0 859.0,760.0 858.0,759.7 857.0,759.3 856.0,759.8 854.9,759.8 853.9,758.5 852.9,759.7 851.9,761.3 850.9,758.5 849.9,759.3 848.9,759.3 847.9,758.7 846.8,759.7 845.8,759.7 844.8,758.5 843.8,759.4 842.8,759.2 841.8,758.9 840.8,758.7 839.8,759.2 838.8,759.9 837.7,760.1 836.7,758.5 835.7,760.0 834.7,759.3 833.7,758.5 832.7,759.6 831.7,759.8 830.7,759.4 829.7,759.1 828.6,759.4 827.6,759.2 826.6,758.8 825.6,759.8 824.6,759.9"/></clipPath><g clip-path="url(#cs5b)"><rect x="826.4" y="620" width="1.4" height="170" fill="#7a62d8"/><rect x="829.8" y="620" width="1.9" height="170" fill="#7a62d8"/><rect x="833.5" y="620" width="0.9" height="170" fill="#9a54cc"/><rect x="836.5" y="620" width="1.5" height="170" fill="#e048b8"/><rect x="838.9" y="620" width="1.5" height="170" fill="#7a62d8"/><rect x="842.3" y="620" width="1.3" height="170" fill="#9a54cc"/><rect x="844.6" y="620" width="1.8" height="170" fill="#7a62d8"/><rect x="847.5" y="620" width="2.0" height="170" fill="#7a62d8"/><rect x="850.3" y="620" width="1.8" height="170" fill="#e048b8"/><rect x="854.7" y="620" width="1.3" height="170" fill="#e048b8"/><rect x="856.8" y="620" width="2.1" height="170" fill="#7a62d8"/><rect x="859.9" y="620" width="1.8" height="170" fill="#7a62d8"/><rect x="862.8" y="620" width="1.9" height="170" fill="#7a62d8"/><rect x="866.7" y="620" width="1.1" height="170" fill="#9a54cc"/><rect x="868.7" y="620" width="1.5" height="170" fill="#9a54cc"/><rect x="871.8" y="620" width="1.0" height="170" fill="#e048b8"/><rect x="875.1" y="620" width="1.0" height="170" fill="#7a62d8"/><rect x="878.5" y="620" width="1.6" height="170" fill="#e048b8"/><rect x="881.2" y="620" width="1.1" height="170" fill="#7a62d8"/><rect x="883.5" y="620" width="1.1" height="170" fill="#e048b8"/><rect x="885.4" y="620" width="0.9" height="170" fill="#9a54cc"/><rect x="888.1" y="620" width="2.0" height="170" fill="#7a62d8"/></g><clipPath id="cs5a"><polygon points="824.6,654.3 825.6,653.3 826.6,653.7 827.6,654.4 828.6,650.7 829.7,653.9 830.7,653.8 831.7,654.5 832.7,654.3 833.7,653.0 834.7,652.8 835.7,652.7 836.7,653.4 837.7,652.9 838.8,653.4 839.8,652.8 840.8,654.1 841.8,653.4 842.8,653.9 843.8,653.1 844.8,654.0 845.8,654.0 846.8,653.8 847.9,654.4 848.9,654.4 849.9,652.6 850.9,654.1 851.9,653.3 852.9,652.9 853.9,653.3 854.9,653.6 856.0,654.1 857.0,652.6 858.0,652.9 859.0,653.8 860.0,654.0 861.0,654.4 862.0,653.2 863.0,654.5 864.0,653.4 865.1,653.5 866.1,652.7 867.1,653.4 868.1,654.1 869.1,653.0 870.1,653.0 871.1,653.6 872.1,652.6 873.1,653.9 874.2,652.9 875.2,653.9 876.2,652.7 877.2,654.4 878.2,651.7 879.2,653.1 880.2,653.8 881.2,653.5 882.2,653.2 883.3,652.4 884.3,652.8 885.3,653.5 886.3,653.6 887.3,652.9 887.3,684.2 886.3,685.4 885.3,685.7 884.3,685.7 883.3,684.8 882.2,686.0 881.2,685.6 880.2,684.2 879.2,685.2 878.2,685.1 877.2,685.0 876.2,685.6 875.2,684.4 874.2,684.8 873.1,685.1 872.1,684.1 871.1,684.4 870.1,685.1 869.1,684.8 868.1,686.0 867.1,684.5 866.1,685.7 865.1,684.3 864.0,684.4 863.0,685.3 862.0,685.7 861.0,684.2 860.0,684.9 859.0,685.1 858.0,687.6 857.0,685.3 856.0,684.9 854.9,684.2 853.9,685.4 852.9,685.0 851.9,684.6 850.9,685.2 849.9,685.9 848.9,684.3 847.9,685.8 846.8,684.8 845.8,685.1 844.8,684.5 843.8,684.3 842.8,685.8 841.8,684.8 840.8,684.3 839.8,685.4 838.8,684.7 837.7,685.6 836.7,684.8 835.7,684.9 834.7,685.9 833.7,684.4 832.7,684.7 831.7,686.7 830.7,684.8 829.7,684.5 828.6,684.2 827.6,685.9 826.6,686.0 825.6,685.0 824.6,685.1"/></clipPath><g clip-path="url(#cs5a)"><rect x="827.3" y="620" width="1.2" height="170" fill="#2a84de"/><rect x="832.6" y="620" width="1.1" height="170" fill="#2a84de"/><rect x="837.6" y="620" width="2.1" height="170" fill="#2a84de"/><rect x="841.2" y="620" width="1.2" height="170" fill="#3393e2"/><rect x="844.0" y="620" width="1.9" height="170" fill="#2a84de"/><rect x="850.5" y="620" width="1.3" height="170" fill="#2a84de"/><rect x="855.2" y="620" width="1.6" height="170" fill="#3393e2"/><rect x="862.8" y="620" width="1.0" height="170" fill="#2a84de"/><rect x="867.1" y="620" width="1.0" height="170" fill="#2a84de"/><rect x="873.6" y="620" width="1.3" height="170" fill="#3393e2"/><rect x="879.6" y="620" width="1.2" height="170" fill="#3393e2"/><rect x="886.6" y="620" width="1.8" height="170" fill="#3393e2"/></g><polygon points="997.3,654.9 998.3,655.1 999.3,655.2 1000.3,655.3 1001.3,655.8 1002.3,654.6 1003.3,655.6 1004.3,655.1 1005.3,655.6 1006.3,655.0 1007.3,655.4 1008.3,655.4 1009.3,655.0 1010.3,655.2 1011.3,655.4 1012.3,655.3 1013.3,655.0 1014.3,654.7 1015.3,655.7 1016.3,654.7 1017.3,655.7 1018.3,655.6 1019.3,655.4 1020.3,655.1 1021.3,655.0 1022.3,654.7 1023.3,655.6 1024.3,654.6 1025.3,654.9 1026.3,654.7 1027.3,655.6 1028.3,655.4 1029.3,655.8 1030.3,654.7 1031.3,655.2 1032.3,655.0 1033.3,654.7 1034.3,654.9 1035.3,655.0 1036.3,655.7 1037.3,655.3 1038.3,655.0 1039.3,655.4 1040.3,655.3 1041.3,655.6 1042.3,655.5 1043.3,655.5 1044.3,655.3 1045.3,655.1 1046.3,654.6 1047.3,655.8 1048.3,655.3 1049.3,655.2 1050.3,655.1 1051.3,654.7 1052.3,654.9 1053.3,655.3 1054.3,655.1 1055.3,655.7 1056.3,655.2 1057.3,655.4 1058.3,655.5 1059.3,654.2 1060.3,655.8 1060.3,681.1 1059.3,681.3 1058.3,681.7 1057.3,680.8 1056.3,681.7 1055.3,681.2 1054.3,681.3 1053.3,681.8 1052.3,681.4 1051.3,681.5 1050.3,681.2 1049.3,681.1 1048.3,681.2 1047.3,680.9 1046.3,683.3 1045.3,681.7 1044.3,681.7 1043.3,681.1 1042.3,681.6 1041.3,681.2 1040.3,682.1 1039.3,681.4 1038.3,681.4 1037.3,681.0 1036.3,681.3 1035.3,681.4 1034.3,681.9 1033.3,681.5 1032.3,681.9 1031.3,681.9 1030.3,681.5 1029.3,682.4 1028.3,682.0 1027.3,681.9 1026.3,681.5 1025.3,681.3 1024.3,681.9 1023.3,681.7 1022.3,682.1 1021.3,681.2 1020.3,680.9 1019.3,681.8 1018.3,681.7 1017.3,682.0 1016.3,681.8 1015.3,681.1 1014.3,683.3 1013.3,681.8 1012.3,680.9 1011.3,680.8 1010.3,681.5 1009.3,681.3 1008.3,681.4 1007.3,681.4 1006.3,681.0 1005.3,681.2 1004.3,681.5 1003.3,681.5 1002.3,682.0 1001.3,681.5 1000.3,680.8 999.3,681.0 998.3,681.5 997.3,682.0" fill="#1cb8e0"/><polygon points="997.3,736.6 998.3,736.4 999.3,737.1 1000.3,736.5 1001.3,736.2 1002.3,736.5 1003.3,736.3 1004.3,736.4 1005.3,736.4 1006.3,736.4 1007.3,736.4 1008.3,735.6 1009.3,736.7 1010.3,736.4 1011.3,736.8 1012.3,736.2 1013.3,735.9 1014.3,736.4 1015.3,736.7 1016.3,736.3 1017.3,736.7 1018.3,737.1 1019.3,736.6 1020.3,737.1 1021.3,737.0 1022.3,736.2 1023.3,735.1 1024.3,736.9 1025.3,737.2 1026.3,736.3 1027.3,736.7 1028.3,737.1 1029.3,736.8 1030.3,737.2 1031.3,736.2 1032.3,736.7 1033.3,736.6 1034.3,736.6 1035.3,737.2 1036.3,735.1 1037.3,736.5 1038.3,736.8 1039.3,736.4 1040.3,737.2 1041.3,737.0 1042.3,736.2 1043.3,737.1 1044.3,737.2 1045.3,737.0 1046.3,737.2 1047.3,736.8 1048.3,737.0 1049.3,736.2 1050.3,736.6 1051.3,736.6 1052.3,736.2 1053.3,736.3 1054.3,736.2 1055.3,736.3 1056.3,737.1 1057.3,736.4 1058.3,736.9 1059.3,736.5 1060.3,736.5 1060.3,756.9 1059.3,756.0 1058.3,756.0 1057.3,756.3 1056.3,756.9 1055.3,756.5 1054.3,756.2 1053.3,756.2 1052.3,758.0 1051.3,756.5 1050.3,756.8 1049.3,757.0 1048.3,756.3 1047.3,757.0 1046.3,756.0 1045.3,756.7 1044.3,757.7 1043.3,756.3 1042.3,756.1 1041.3,756.6 1040.3,756.0 1039.3,756.6 1038.3,756.9 1037.3,757.4 1036.3,756.2 1035.3,756.4 1034.3,756.0 1033.3,756.7 1032.3,757.3 1031.3,756.6 1030.3,756.1 1029.3,756.8 1028.3,756.3 1027.3,756.8 1026.3,756.6 1025.3,756.8 1024.3,756.9 1023.3,756.3 1022.3,757.0 1021.3,756.8 1020.3,756.6 1019.3,756.6 1018.3,756.9 1017.3,757.2 1016.3,756.4 1015.3,756.0 1014.3,756.2 1013.3,756.8 1012.3,757.0 1011.3,757.0 1010.3,756.6 1009.3,756.3 1008.3,757.0 1007.3,756.6 1006.3,756.7 1005.3,757.0 1004.3,756.0 1003.3,755.9 1002.3,756.0 1001.3,756.0 1000.3,757.3 999.3,756.2 998.3,756.2 997.3,756.8" fill="#1cb8e0"/><polygon points="1060.5,648.2 1061.5,647.2 1062.5,647.3 1063.5,647.8 1064.5,648.4 1065.6,646.8 1066.6,647.4 1067.6,647.3 1068.6,648.1 1069.6,647.9 1070.6,647.2 1071.6,648.1 1072.6,648.1 1073.6,648.3 1074.7,648.4 1075.7,647.6 1076.7,644.9 1077.7,647.9 1078.7,647.8 1079.7,648.7 1080.7,647.0 1081.7,648.7 1082.7,646.9 1083.8,648.1 1084.8,647.4 1085.8,648.3 1086.8,647.6 1087.8,648.5 1088.8,647.4 1089.8,647.4 1090.8,648.0 1091.8,648.4 1092.9,648.6 1093.9,646.9 1094.9,647.5 1095.9,648.6 1096.9,648.6 1097.9,646.9 1098.9,646.9 1099.9,647.6 1101.0,648.1 1102.0,648.5 1103.0,648.5 1104.0,645.4 1105.0,647.5 1106.0,647.1 1107.0,646.2 1108.0,647.5 1109.0,648.0 1110.1,648.3 1111.1,648.2 1112.1,648.3 1113.1,647.4 1114.1,648.5 1115.1,648.5 1116.1,647.4 1117.1,647.5 1118.1,647.8 1119.2,646.8 1120.2,648.1 1121.2,645.9 1122.2,648.4 1123.2,647.8 1123.2,696.5 1122.2,695.6 1121.2,695.0 1120.2,695.4 1119.2,695.1 1118.1,695.2 1117.1,694.9 1116.1,695.9 1115.1,695.4 1114.1,696.6 1113.1,696.7 1112.1,696.6 1111.1,696.1 1110.1,695.0 1109.0,696.1 1108.0,695.6 1107.0,696.2 1106.0,696.0 1105.0,697.4 1104.0,696.3 1103.0,695.4 1102.0,696.4 1101.0,695.3 1099.9,696.4 1098.9,695.8 1097.9,695.3 1096.9,696.6 1095.9,696.3 1094.9,696.1 1093.9,695.8 1092.9,696.2 1091.8,695.4 1090.8,696.3 1089.8,695.3 1088.8,696.3 1087.8,695.7 1086.8,697.4 1085.8,695.0 1084.8,695.0 1083.8,695.4 1082.7,695.8 1081.7,695.0 1080.7,695.1 1079.7,698.6 1078.7,696.7 1077.7,696.2 1076.7,696.4 1075.7,695.0 1074.7,695.7 1073.6,696.4 1072.6,695.2 1071.6,696.8 1070.6,696.4 1069.6,695.4 1068.6,696.0 1067.6,695.9 1066.6,695.1 1065.6,696.6 1064.5,695.3 1063.5,695.2 1062.5,695.5 1061.5,695.9 1060.5,696.0" fill="#1c8ae0"/><polygon points="1060.5,727.4 1061.5,729.9 1062.5,729.5 1063.5,729.1 1064.5,730.2 1065.6,730.6 1066.6,730.5 1067.6,730.2 1068.6,729.7 1069.6,729.4 1070.6,729.9 1071.6,730.3 1072.6,729.3 1073.6,730.4 1074.7,730.4 1075.7,730.4 1076.7,727.9 1077.7,730.1 1078.7,729.5 1079.7,730.2 1080.7,729.9 1081.7,729.3 1082.7,730.5 1083.8,729.7 1084.8,729.1 1085.8,730.0 1086.8,730.4 1087.8,729.7 1088.8,729.3 1089.8,729.5 1090.8,729.7 1091.8,729.7 1092.9,729.7 1093.9,730.2 1094.9,729.4 1095.9,729.9 1096.9,730.2 1097.9,729.6 1098.9,729.8 1099.9,729.3 1101.0,730.5 1102.0,729.6 1103.0,728.6 1104.0,729.7 1105.0,729.6 1106.0,729.5 1107.0,730.0 1108.0,730.1 1109.0,729.3 1110.1,729.3 1111.1,730.5 1112.1,729.2 1113.1,730.6 1114.1,730.2 1115.1,729.3 1116.1,730.4 1117.1,729.1 1118.1,729.1 1119.2,729.8 1120.2,729.4 1121.2,730.1 1122.2,730.5 1123.2,730.3 1123.2,762.7 1122.2,764.0 1121.2,763.1 1120.2,764.0 1119.2,764.1 1118.1,764.1 1117.1,765.6 1116.1,762.7 1115.1,763.0 1114.1,763.2 1113.1,763.0 1112.1,763.7 1111.1,763.8 1110.1,763.3 1109.0,762.8 1108.0,762.9 1107.0,763.4 1106.0,763.2 1105.0,762.8 1104.0,764.2 1103.0,762.6 1102.0,764.1 1101.0,763.4 1099.9,764.0 1098.9,763.4 1097.9,762.8 1096.9,764.0 1095.9,764.1 1094.9,763.6 1093.9,762.6 1092.9,763.8 1091.8,762.8 1090.8,763.8 1089.8,765.6 1088.8,763.2 1087.8,763.3 1086.8,763.4 1085.8,762.6 1084.8,763.8 1083.8,763.8 1082.7,764.1 1081.7,762.5 1080.7,763.5 1079.7,763.5 1078.7,763.8 1077.7,763.8 1076.7,763.8 1075.7,762.6 1074.7,763.1 1073.6,764.1 1072.6,763.1 1071.6,762.7 1070.6,763.9 1069.6,762.8 1068.6,762.9 1067.6,762.7 1066.6,763.0 1065.6,763.9 1064.5,764.0 1063.5,765.0 1062.5,763.6 1061.5,762.8 1060.5,763.6" fill="#1c8ae0"/><clipPath id="cs7a"><polygon points="1060.5,648.2 1061.5,647.2 1062.5,647.3 1063.5,647.8 1064.5,648.4 1065.6,646.8 1066.6,647.4 1067.6,647.3 1068.6,648.1 1069.6,647.9 1070.6,647.2 1071.6,648.1 1072.6,648.1 1073.6,648.3 1074.7,648.4 1075.7,647.6 1076.7,644.9 1077.7,647.9 1078.7,647.8 1079.7,648.7 1080.7,647.0 1081.7,648.7 1082.7,646.9 1083.8,648.1 1084.8,647.4 1085.8,648.3 1086.8,647.6 1087.8,648.5 1088.8,647.4 1089.8,647.4 1090.8,648.0 1091.8,648.4 1092.9,648.6 1093.9,646.9 1094.9,647.5 1095.9,648.6 1096.9,648.6 1097.9,646.9 1098.9,646.9 1099.9,647.6 1101.0,648.1 1102.0,648.5 1103.0,648.5 1104.0,645.4 1105.0,647.5 1106.0,647.1 1107.0,646.2 1108.0,647.5 1109.0,648.0 1110.1,648.3 1111.1,648.2 1112.1,648.3 1113.1,647.4 1114.1,648.5 1115.1,648.5 1116.1,647.4 1117.1,647.5 1118.1,647.8 1119.2,646.8 1120.2,648.1 1121.2,645.9 1122.2,648.4 1123.2,647.8 1123.2,696.5 1122.2,695.6 1121.2,695.0 1120.2,695.4 1119.2,695.1 1118.1,695.2 1117.1,694.9 1116.1,695.9 1115.1,695.4 1114.1,696.6 1113.1,696.7 1112.1,696.6 1111.1,696.1 1110.1,695.0 1109.0,696.1 1108.0,695.6 1107.0,696.2 1106.0,696.0 1105.0,697.4 1104.0,696.3 1103.0,695.4 1102.0,696.4 1101.0,695.3 1099.9,696.4 1098.9,695.8 1097.9,695.3 1096.9,696.6 1095.9,696.3 1094.9,696.1 1093.9,695.8 1092.9,696.2 1091.8,695.4 1090.8,696.3 1089.8,695.3 1088.8,696.3 1087.8,695.7 1086.8,697.4 1085.8,695.0 1084.8,695.0 1083.8,695.4 1082.7,695.8 1081.7,695.0 1080.7,695.1 1079.7,698.6 1078.7,696.7 1077.7,696.2 1076.7,696.4 1075.7,695.0 1074.7,695.7 1073.6,696.4 1072.6,695.2 1071.6,696.8 1070.6,696.4 1069.6,695.4 1068.6,696.0 1067.6,695.9 1066.6,695.1 1065.6,696.6 1064.5,695.3 1063.5,695.2 1062.5,695.5 1061.5,695.9 1060.5,696.0"/></clipPath><g clip-path="url(#cs7a)"><rect x="1063.9" y="620" width="1.7" height="170" fill="#2394e2"/><rect x="1069.1" y="620" width="1.7" height="170" fill="#2394e2"/><rect x="1073.7" y="620" width="1.6" height="170" fill="#1b80dc"/><rect x="1080.1" y="620" width="2.0" height="170" fill="#1b80dc"/><rect x="1084.6" y="620" width="1.4" height="170" fill="#2394e2"/><rect x="1089.8" y="620" width="1.7" height="170" fill="#1b80dc"/><rect x="1092.7" y="620" width="1.4" height="170" fill="#2394e2"/><rect x="1098.1" y="620" width="1.8" height="170" fill="#1b80dc"/><rect x="1103.1" y="620" width="1.1" height="170" fill="#1b80dc"/><rect x="1108.3" y="620" width="1.8" height="170" fill="#1b80dc"/><rect x="1113.0" y="620" width="1.2" height="170" fill="#2394e2"/><rect x="1119.1" y="620" width="2.1" height="170" fill="#2394e2"/><rect x="1124.1" y="620" width="1.3" height="170" fill="#2394e2"/></g><clipPath id="cs7b"><polygon points="1060.5,727.4 1061.5,729.9 1062.5,729.5 1063.5,729.1 1064.5,730.2 1065.6,730.6 1066.6,730.5 1067.6,730.2 1068.6,729.7 1069.6,729.4 1070.6,729.9 1071.6,730.3 1072.6,729.3 1073.6,730.4 1074.7,730.4 1075.7,730.4 1076.7,727.9 1077.7,730.1 1078.7,729.5 1079.7,730.2 1080.7,729.9 1081.7,729.3 1082.7,730.5 1083.8,729.7 1084.8,729.1 1085.8,730.0 1086.8,730.4 1087.8,729.7 1088.8,729.3 1089.8,729.5 1090.8,729.7 1091.8,729.7 1092.9,729.7 1093.9,730.2 1094.9,729.4 1095.9,729.9 1096.9,730.2 1097.9,729.6 1098.9,729.8 1099.9,729.3 1101.0,730.5 1102.0,729.6 1103.0,728.6 1104.0,729.7 1105.0,729.6 1106.0,729.5 1107.0,730.0 1108.0,730.1 1109.0,729.3 1110.1,729.3 1111.1,730.5 1112.1,729.2 1113.1,730.6 1114.1,730.2 1115.1,729.3 1116.1,730.4 1117.1,729.1 1118.1,729.1 1119.2,729.8 1120.2,729.4 1121.2,730.1 1122.2,730.5 1123.2,730.3 1123.2,762.7 1122.2,764.0 1121.2,763.1 1120.2,764.0 1119.2,764.1 1118.1,764.1 1117.1,765.6 1116.1,762.7 1115.1,763.0 1114.1,763.2 1113.1,763.0 1112.1,763.7 1111.1,763.8 1110.1,763.3 1109.0,762.8 1108.0,762.9 1107.0,763.4 1106.0,763.2 1105.0,762.8 1104.0,764.2 1103.0,762.6 1102.0,764.1 1101.0,763.4 1099.9,764.0 1098.9,763.4 1097.9,762.8 1096.9,764.0 1095.9,764.1 1094.9,763.6 1093.9,762.6 1092.9,763.8 1091.8,762.8 1090.8,763.8 1089.8,765.6 1088.8,763.2 1087.8,763.3 1086.8,763.4 1085.8,762.6 1084.8,763.8 1083.8,763.8 1082.7,764.1 1081.7,762.5 1080.7,763.5 1079.7,763.5 1078.7,763.8 1077.7,763.8 1076.7,763.8 1075.7,762.6 1074.7,763.1 1073.6,764.1 1072.6,763.1 1071.6,762.7 1070.6,763.9 1069.6,762.8 1068.6,762.9 1067.6,762.7 1066.6,763.0 1065.6,763.9 1064.5,764.0 1063.5,765.0 1062.5,763.6 1061.5,762.8 1060.5,763.6"/></clipPath><g clip-path="url(#cs7b)"><rect x="1065.3" y="620" width="2.0" height="170" fill="#2394e2"/><rect x="1068.6" y="620" width="0.9" height="170" fill="#1b80dc"/><rect x="1073.5" y="620" width="1.4" height="170" fill="#2394e2"/><rect x="1079.4" y="620" width="1.2" height="170" fill="#2394e2"/><rect x="1083.3" y="620" width="1.9" height="170" fill="#2394e2"/><rect x="1089.5" y="620" width="1.2" height="170" fill="#2394e2"/><rect x="1093.8" y="620" width="1.6" height="170" fill="#2394e2"/><rect x="1097.1" y="620" width="1.1" height="170" fill="#2394e2"/><rect x="1099.4" y="620" width="1.0" height="170" fill="#2394e2"/><rect x="1104.3" y="620" width="1.7" height="170" fill="#2394e2"/><rect x="1107.1" y="620" width="2.1" height="170" fill="#1b80dc"/><rect x="1110.9" y="620" width="0.8" height="170" fill="#2394e2"/><rect x="1116.1" y="620" width="2.2" height="170" fill="#1b80dc"/><rect x="1121.0" y="620" width="1.5" height="170" fill="#2394e2"/><rect x="1126.9" y="620" width="1.9" height="170" fill="#1b80dc"/></g><polygon points="1123.4,645.6 1124.4,645.4 1125.4,644.0 1126.5,645.6 1127.5,643.9 1128.5,643.9 1129.5,644.0 1130.5,645.4 1131.5,645.0 1132.5,645.6 1133.6,644.9 1134.6,643.9 1135.6,645.2 1136.6,644.6 1137.6,644.3 1138.7,644.3 1139.7,645.6 1140.7,644.9 1141.7,645.4 1142.7,641.8 1143.7,644.4 1144.8,644.5 1145.8,644.4 1146.8,645.1 1147.8,644.7 1148.8,644.3 1149.8,642.1 1150.8,644.4 1151.9,645.0 1152.9,644.9 1153.9,644.5 1154.9,645.5 1155.9,644.4 1157.0,644.4 1158.0,644.1 1159.0,645.0 1160.0,644.8 1161.0,644.3 1162.0,644.5 1163.0,644.6 1164.1,644.0 1165.1,644.0 1166.1,644.9 1166.1,695.8 1165.1,695.9 1164.1,697.1 1163.0,697.1 1162.0,697.2 1161.0,696.3 1160.0,696.1 1159.0,697.3 1158.0,697.8 1157.0,697.9 1155.9,696.2 1154.9,697.2 1153.9,698.1 1152.9,696.9 1151.9,697.5 1150.8,696.1 1149.8,697.0 1148.8,697.0 1147.8,697.8 1146.8,697.8 1145.8,696.0 1144.8,697.5 1143.7,697.2 1142.7,696.5 1141.7,696.7 1140.7,697.9 1139.7,697.0 1138.7,697.4 1137.6,699.4 1136.6,697.8 1135.6,697.6 1134.6,696.0 1133.6,699.9 1132.5,696.6 1131.5,697.8 1130.5,696.1 1129.5,698.7 1128.5,697.6 1127.5,696.1 1126.5,697.2 1125.4,696.5 1124.4,696.8 1123.4,695.9" fill="#1e5fe0"/><polygon points="1123.4,721.6 1124.4,722.3 1125.4,721.8 1126.5,721.1 1127.5,721.4 1128.5,720.4 1129.5,720.6 1130.5,722.2 1131.5,721.0 1132.5,720.8 1133.6,720.6 1134.6,721.5 1135.6,721.8 1136.6,722.1 1137.6,721.1 1138.7,721.0 1139.7,720.7 1140.7,721.0 1141.7,721.0 1142.7,721.5 1143.7,722.3 1144.8,721.0 1145.8,721.8 1146.8,722.2 1147.8,720.9 1148.8,721.7 1149.8,721.8 1150.8,720.8 1151.9,721.7 1152.9,721.1 1153.9,720.7 1154.9,722.0 1155.9,722.3 1157.0,721.1 1158.0,721.2 1159.0,722.0 1160.0,722.3 1161.0,721.7 1162.0,720.9 1163.0,721.4 1164.1,720.8 1165.1,720.9 1166.1,721.8 1166.1,768.0 1165.1,767.9 1164.1,767.4 1163.0,767.8 1162.0,766.9 1161.0,767.8 1160.0,767.4 1159.0,767.6 1158.0,767.3 1157.0,767.2 1155.9,766.8 1154.9,766.8 1153.9,767.1 1152.9,770.1 1151.9,767.5 1150.8,768.0 1149.8,767.7 1148.8,768.5 1147.8,768.3 1146.8,767.8 1145.8,766.8 1144.8,767.8 1143.7,767.8 1142.7,767.0 1141.7,767.5 1140.7,767.4 1139.7,767.8 1138.7,767.3 1137.6,768.5 1136.6,768.1 1135.6,768.1 1134.6,768.3 1133.6,766.8 1132.5,767.1 1131.5,768.0 1130.5,767.4 1129.5,767.5 1128.5,770.1 1127.5,766.9 1126.5,767.7 1125.4,766.9 1124.4,768.3 1123.4,769.1" fill="#1e5fe0"/><clipPath id="cs8a"><polygon points="1123.4,645.6 1124.4,645.4 1125.4,644.0 1126.5,645.6 1127.5,643.9 1128.5,643.9 1129.5,644.0 1130.5,645.4 1131.5,645.0 1132.5,645.6 1133.6,644.9 1134.6,643.9 1135.6,645.2 1136.6,644.6 1137.6,644.3 1138.7,644.3 1139.7,645.6 1140.7,644.9 1141.7,645.4 1142.7,641.8 1143.7,644.4 1144.8,644.5 1145.8,644.4 1146.8,645.1 1147.8,644.7 1148.8,644.3 1149.8,642.1 1150.8,644.4 1151.9,645.0 1152.9,644.9 1153.9,644.5 1154.9,645.5 1155.9,644.4 1157.0,644.4 1158.0,644.1 1159.0,645.0 1160.0,644.8 1161.0,644.3 1162.0,644.5 1163.0,644.6 1164.1,644.0 1165.1,644.0 1166.1,644.9 1166.1,695.8 1165.1,695.9 1164.1,697.1 1163.0,697.1 1162.0,697.2 1161.0,696.3 1160.0,696.1 1159.0,697.3 1158.0,697.8 1157.0,697.9 1155.9,696.2 1154.9,697.2 1153.9,698.1 1152.9,696.9 1151.9,697.5 1150.8,696.1 1149.8,697.0 1148.8,697.0 1147.8,697.8 1146.8,697.8 1145.8,696.0 1144.8,697.5 1143.7,697.2 1142.7,696.5 1141.7,696.7 1140.7,697.9 1139.7,697.0 1138.7,697.4 1137.6,699.4 1136.6,697.8 1135.6,697.6 1134.6,696.0 1133.6,699.9 1132.5,696.6 1131.5,697.8 1130.5,696.1 1129.5,698.7 1128.5,697.6 1127.5,696.1 1126.5,697.2 1125.4,696.5 1124.4,696.8 1123.4,695.9"/></clipPath><g clip-path="url(#cs8a)"><rect x="1124.9" y="620" width="1.3" height="170" fill="#1b57dc"/><rect x="1129.1" y="620" width="1.4" height="170" fill="#1b57dc"/><rect x="1133.3" y="620" width="0.9" height="170" fill="#1b57dc"/><rect x="1135.8" y="620" width="1.2" height="170" fill="#1b57dc"/><rect x="1140.8" y="620" width="2.1" height="170" fill="#1b57dc"/><rect x="1146.5" y="620" width="1.3" height="170" fill="#2467e2"/><rect x="1149.7" y="620" width="1.8" height="170" fill="#1b57dc"/><rect x="1154.1" y="620" width="2.0" height="170" fill="#2467e2"/><rect x="1157.0" y="620" width="1.4" height="170" fill="#1b57dc"/><rect x="1162.9" y="620" width="1.9" height="170" fill="#2467e2"/><rect x="1166.9" y="620" width="1.6" height="170" fill="#1b57dc"/></g><clipPath id="cs8b"><polygon points="1123.4,721.6 1124.4,722.3 1125.4,721.8 1126.5,721.1 1127.5,721.4 1128.5,720.4 1129.5,720.6 1130.5,722.2 1131.5,721.0 1132.5,720.8 1133.6,720.6 1134.6,721.5 1135.6,721.8 1136.6,722.1 1137.6,721.1 1138.7,721.0 1139.7,720.7 1140.7,721.0 1141.7,721.0 1142.7,721.5 1143.7,722.3 1144.8,721.0 1145.8,721.8 1146.8,722.2 1147.8,720.9 1148.8,721.7 1149.8,721.8 1150.8,720.8 1151.9,721.7 1152.9,721.1 1153.9,720.7 1154.9,722.0 1155.9,722.3 1157.0,721.1 1158.0,721.2 1159.0,722.0 1160.0,722.3 1161.0,721.7 1162.0,720.9 1163.0,721.4 1164.1,720.8 1165.1,720.9 1166.1,721.8 1166.1,768.0 1165.1,767.9 1164.1,767.4 1163.0,767.8 1162.0,766.9 1161.0,767.8 1160.0,767.4 1159.0,767.6 1158.0,767.3 1157.0,767.2 1155.9,766.8 1154.9,766.8 1153.9,767.1 1152.9,770.1 1151.9,767.5 1150.8,768.0 1149.8,767.7 1148.8,768.5 1147.8,768.3 1146.8,767.8 1145.8,766.8 1144.8,767.8 1143.7,767.8 1142.7,767.0 1141.7,767.5 1140.7,767.4 1139.7,767.8 1138.7,767.3 1137.6,768.5 1136.6,768.1 1135.6,768.1 1134.6,768.3 1133.6,766.8 1132.5,767.1 1131.5,768.0 1130.5,767.4 1129.5,767.5 1128.5,770.1 1127.5,766.9 1126.5,767.7 1125.4,766.9 1124.4,768.3 1123.4,769.1"/></clipPath><g clip-path="url(#cs8b)"><rect x="1124.4" y="620" width="2.0" height="170" fill="#2467e2"/><rect x="1127.7" y="620" width="2.0" height="170" fill="#1b57dc"/><rect x="1133.7" y="620" width="2.0" height="170" fill="#1b57dc"/><rect x="1137.2" y="620" width="1.7" height="170" fill="#2467e2"/><rect x="1139.8" y="620" width="1.4" height="170" fill="#2467e2"/><rect x="1142.0" y="620" width="0.8" height="170" fill="#1b57dc"/><rect x="1147.4" y="620" width="1.3" height="170" fill="#2467e2"/><rect x="1151.9" y="620" width="1.7" height="170" fill="#1b57dc"/><rect x="1156.6" y="620" width="0.9" height="170" fill="#1b57dc"/><rect x="1162.0" y="620" width="1.9" height="170" fill="#1b57dc"/><rect x="1165.8" y="620" width="1.1" height="170" fill="#2467e2"/></g><polygon points="1166.3,640.4 1167.3,641.9 1168.4,641.1 1169.4,641.3 1170.4,640.1 1171.5,641.0 1172.5,640.6 1173.5,640.2 1174.6,641.3 1175.6,640.3 1176.6,640.3 1177.7,640.5 1178.7,640.4 1179.7,641.2 1180.7,639.2 1181.8,640.3 1182.8,641.9 1183.8,641.3 1184.9,641.7 1185.9,641.1 1186.9,640.2 1188.0,640.8 1189.0,640.0 1190.0,639.4 1191.1,641.4 1192.1,641.9 1192.1,688.8 1191.1,689.1 1190.0,688.1 1189.0,687.8 1188.0,688.1 1186.9,687.7 1185.9,689.7 1184.9,687.7 1183.8,688.8 1182.8,688.4 1181.8,688.8 1180.7,688.6 1179.7,689.5 1178.7,689.0 1177.7,688.7 1176.6,688.9 1175.6,688.8 1174.6,688.7 1173.5,688.4 1172.5,688.0 1171.5,688.4 1170.4,689.0 1169.4,688.7 1168.4,689.3 1167.3,688.9 1166.3,688.5" fill="#1d3ddf"/><polygon points="1166.3,712.0 1167.3,712.4 1168.4,711.9 1169.4,712.3 1170.4,711.8 1171.5,711.8 1172.5,711.8 1173.5,711.5 1174.6,711.8 1175.6,712.3 1176.6,711.5 1177.7,712.8 1178.7,712.7 1179.7,712.8 1180.7,711.8 1181.8,711.9 1182.8,712.9 1183.8,712.1 1184.9,712.8 1185.9,711.3 1186.9,712.2 1188.0,711.4 1189.0,712.6 1190.0,712.2 1191.1,709.8 1192.1,711.8 1192.1,773.1 1191.1,772.5 1190.0,772.6 1189.0,773.4 1188.0,772.6 1186.9,772.9 1185.9,772.9 1184.9,773.8 1183.8,773.0 1182.8,773.4 1181.8,773.6 1180.7,773.1 1179.7,772.3 1178.7,773.4 1177.7,773.2 1176.6,772.8 1175.6,773.0 1174.6,773.4 1173.5,772.5 1172.5,772.4 1171.5,772.5 1170.4,774.8 1169.4,773.5 1168.4,775.3 1167.3,773.0 1166.3,772.9" fill="#1d3ddf"/><polygon points="1192.3,639.9 1193.3,640.5 1194.3,640.2 1195.3,640.4 1196.3,640.4 1197.3,639.2 1198.3,640.6 1199.3,640.1 1200.3,640.5 1201.3,641.3 1202.3,639.8 1203.3,641.2 1204.3,639.5 1205.3,639.7 1206.3,639.7 1207.4,640.1 1208.4,640.1 1209.4,639.3 1210.4,639.8 1211.4,641.2 1212.4,640.6 1213.4,641.1 1214.4,639.7 1215.4,641.0 1216.4,639.9 1217.4,639.4 1218.4,640.0 1219.4,639.9 1220.4,640.4 1221.4,640.9 1221.4,693.8 1220.4,695.2 1219.4,693.8 1218.4,694.1 1217.4,694.7 1216.4,693.6 1215.4,694.6 1214.4,694.8 1213.4,693.8 1212.4,694.5 1211.4,695.1 1210.4,693.9 1209.4,693.8 1208.4,694.5 1207.4,694.2 1206.3,694.4 1205.3,694.3 1204.3,694.2 1203.3,695.1 1202.3,693.5 1201.3,694.9 1200.3,693.6 1199.3,694.8 1198.3,694.6 1197.3,694.0 1196.3,695.1 1195.3,693.8 1194.3,695.2 1193.3,694.9 1192.3,693.9" fill="#2b8ae0"/><polygon points="1192.3,715.3 1193.3,716.8 1194.3,717.1 1195.3,717.0 1196.3,717.3 1197.3,716.1 1198.3,717.3 1199.3,716.2 1200.3,717.3 1201.3,716.2 1202.3,717.3 1203.3,716.9 1204.3,716.7 1205.3,717.1 1206.3,717.5 1207.4,716.8 1208.4,716.0 1209.4,715.9 1210.4,715.2 1211.4,716.5 1212.4,717.2 1213.4,717.3 1214.4,716.3 1215.4,716.2 1216.4,717.1 1217.4,714.7 1218.4,716.8 1219.4,716.4 1220.4,717.3 1221.4,716.0 1221.4,772.7 1220.4,773.2 1219.4,773.3 1218.4,772.0 1217.4,772.7 1216.4,772.5 1215.4,773.3 1214.4,772.7 1213.4,772.7 1212.4,773.1 1211.4,772.1 1210.4,772.1 1209.4,771.9 1208.4,772.2 1207.4,772.5 1206.3,773.3 1205.3,772.0 1204.3,772.0 1203.3,772.2 1202.3,772.9 1201.3,772.5 1200.3,773.1 1199.3,772.1 1198.3,772.8 1197.3,775.1 1196.3,772.4 1195.3,773.3 1194.3,771.7 1193.3,772.9 1192.3,773.0" fill="#2b8ae0"/><polygon points="1221.6,635.1 1222.6,635.0 1223.6,635.2 1224.6,636.4 1225.7,634.8 1226.7,633.0 1227.7,634.8 1228.7,635.9 1229.7,635.3 1230.7,634.5 1231.8,635.7 1232.8,634.5 1233.8,635.5 1234.8,636.3 1235.8,635.8 1236.8,633.7 1237.8,634.7 1238.9,635.5 1239.9,634.3 1240.9,634.3 1241.9,635.2 1242.9,635.7 1243.9,635.6 1245.0,633.7 1246.0,635.2 1247.0,634.5 1248.0,635.7 1249.0,635.8 1250.0,633.6 1251.0,636.4 1252.1,635.8 1253.1,633.8 1254.1,635.3 1255.1,635.2 1256.1,636.4 1257.1,635.0 1258.2,634.7 1259.2,635.5 1260.2,634.5 1261.2,635.8 1262.2,635.7 1263.2,633.7 1264.2,634.9 1265.3,635.5 1266.3,635.6 1267.3,636.1 1268.3,635.2 1269.3,634.9 1270.3,635.8 1271.4,632.9 1272.4,635.2 1273.4,635.5 1274.4,635.7 1274.4,693.9 1273.4,695.2 1272.4,694.1 1271.4,694.8 1270.3,692.2 1269.3,692.9 1268.3,694.4 1267.3,694.3 1266.3,692.3 1265.3,692.7 1264.2,694.5 1263.2,693.6 1262.2,693.0 1261.2,692.4 1260.2,693.2 1259.2,694.0 1258.2,694.9 1257.1,693.9 1256.1,693.2 1255.1,693.7 1254.1,694.4 1253.1,694.9 1252.1,694.5 1251.0,693.5 1250.0,693.7 1249.0,697.5 1248.0,692.7 1247.0,693.0 1246.0,693.2 1245.0,694.9 1243.9,692.1 1242.9,694.7 1241.9,692.6 1240.9,693.8 1239.9,694.8 1238.9,694.9 1237.8,694.9 1236.8,695.3 1235.8,693.4 1234.8,694.5 1233.8,696.6 1232.8,693.2 1231.8,693.0 1230.7,693.8 1229.7,693.3 1228.7,692.3 1227.7,694.1 1226.7,694.9 1225.7,692.5 1224.6,694.2 1223.6,693.7 1222.6,697.7 1221.6,694.2" fill="#d638bb"/><polygon points="1221.6,714.2 1222.6,714.7 1223.6,714.7 1224.6,714.2 1225.7,713.2 1226.7,713.7 1227.7,713.2 1228.7,713.4 1229.7,712.5 1230.7,714.4 1231.8,714.2 1232.8,713.3 1233.8,714.8 1234.8,711.0 1235.8,713.6 1236.8,714.2 1237.8,713.9 1238.9,713.0 1239.9,714.8 1240.9,714.7 1241.9,714.8 1242.9,714.8 1243.9,712.8 1245.0,714.1 1246.0,714.7 1247.0,713.7 1248.0,714.3 1249.0,713.9 1250.0,712.5 1251.0,713.7 1252.1,712.6 1253.1,713.2 1254.1,714.6 1255.1,713.6 1256.1,713.6 1257.1,714.0 1258.2,712.7 1259.2,714.4 1260.2,714.3 1261.2,714.3 1262.2,713.5 1263.2,713.1 1264.2,712.8 1265.3,714.8 1266.3,713.1 1267.3,713.1 1268.3,712.9 1269.3,714.4 1270.3,713.4 1271.4,713.4 1272.4,712.9 1273.4,713.6 1274.4,712.6 1274.4,774.2 1273.4,773.3 1272.4,774.3 1271.4,773.7 1270.3,774.7 1269.3,774.3 1268.3,773.9 1267.3,773.2 1266.3,772.6 1265.3,774.6 1264.2,774.0 1263.2,774.2 1262.2,773.6 1261.2,774.1 1260.2,775.9 1259.2,773.5 1258.2,774.2 1257.1,773.9 1256.1,772.6 1255.1,774.2 1254.1,774.5 1253.1,772.7 1252.1,774.3 1251.0,773.9 1250.0,774.7 1249.0,773.6 1248.0,774.5 1247.0,774.5 1246.0,774.4 1245.0,773.8 1243.9,776.9 1242.9,773.7 1241.9,774.6 1240.9,773.0 1239.9,772.8 1238.9,773.3 1237.8,772.5 1236.8,772.7 1235.8,774.6 1234.8,776.2 1233.8,773.5 1232.8,774.1 1231.8,773.5 1230.7,773.4 1229.7,774.3 1228.7,774.8 1227.7,773.5 1226.7,774.6 1225.7,773.4 1224.6,773.3 1223.6,776.0 1222.6,772.5 1221.6,774.5" fill="#d638bb"/><clipPath id="cs11b"><polygon points="1221.6,714.2 1222.6,714.7 1223.6,714.7 1224.6,714.2 1225.7,713.2 1226.7,713.7 1227.7,713.2 1228.7,713.4 1229.7,712.5 1230.7,714.4 1231.8,714.2 1232.8,713.3 1233.8,714.8 1234.8,711.0 1235.8,713.6 1236.8,714.2 1237.8,713.9 1238.9,713.0 1239.9,714.8 1240.9,714.7 1241.9,714.8 1242.9,714.8 1243.9,712.8 1245.0,714.1 1246.0,714.7 1247.0,713.7 1248.0,714.3 1249.0,713.9 1250.0,712.5 1251.0,713.7 1252.1,712.6 1253.1,713.2 1254.1,714.6 1255.1,713.6 1256.1,713.6 1257.1,714.0 1258.2,712.7 1259.2,714.4 1260.2,714.3 1261.2,714.3 1262.2,713.5 1263.2,713.1 1264.2,712.8 1265.3,714.8 1266.3,713.1 1267.3,713.1 1268.3,712.9 1269.3,714.4 1270.3,713.4 1271.4,713.4 1272.4,712.9 1273.4,713.6 1274.4,712.6 1274.4,774.2 1273.4,773.3 1272.4,774.3 1271.4,773.7 1270.3,774.7 1269.3,774.3 1268.3,773.9 1267.3,773.2 1266.3,772.6 1265.3,774.6 1264.2,774.0 1263.2,774.2 1262.2,773.6 1261.2,774.1 1260.2,775.9 1259.2,773.5 1258.2,774.2 1257.1,773.9 1256.1,772.6 1255.1,774.2 1254.1,774.5 1253.1,772.7 1252.1,774.3 1251.0,773.9 1250.0,774.7 1249.0,773.6 1248.0,774.5 1247.0,774.5 1246.0,774.4 1245.0,773.8 1243.9,776.9 1242.9,773.7 1241.9,774.6 1240.9,773.0 1239.9,772.8 1238.9,773.3 1237.8,772.5 1236.8,772.7 1235.8,774.6 1234.8,776.2 1233.8,773.5 1232.8,774.1 1231.8,773.5 1230.7,773.4 1229.7,774.3 1228.7,774.8 1227.7,773.5 1226.7,774.6 1225.7,773.4 1224.6,773.3 1223.6,776.0 1222.6,772.5 1221.6,774.5"/></clipPath><g clip-path="url(#cs11b)"><rect x="1222.5" y="620" width="2.2" height="170" fill="#e45090"/><rect x="1225.5" y="620" width="1.1" height="170" fill="#e45090"/><rect x="1228.9" y="620" width="0.8" height="170" fill="#6a58d8"/><rect x="1231.7" y="620" width="2.2" height="170" fill="#e45090"/><rect x="1235.6" y="620" width="1.2" height="170" fill="#e45090"/><rect x="1238.2" y="620" width="2.4" height="170" fill="#6a58d8"/><rect x="1242.0" y="620" width="2.0" height="170" fill="#3a4ee0"/><rect x="1245.0" y="620" width="2.3" height="170" fill="#e45090"/><rect x="1249.1" y="620" width="2.6" height="170" fill="#e45090"/><rect x="1253.9" y="620" width="2.2" height="170" fill="#e45090"/><rect x="1257.8" y="620" width="1.5" height="170" fill="#e45090"/><rect x="1261.1" y="620" width="1.6" height="170" fill="#b040c4"/><rect x="1264.6" y="620" width="1.4" height="170" fill="#6a58d8"/><rect x="1267.7" y="620" width="2.0" height="170" fill="#b040c4"/><rect x="1272.2" y="620" width="1.5" height="170" fill="#e45090"/><rect x="1275.5" y="620" width="1.6" height="170" fill="#b040c4"/></g><polygon points="1329.5,664.5 1330.5,662.4 1331.5,658.2 1332.5,655.5 1333.5,650.8 1334.6,647.5 1335.6,649.0 1336.6,654.2 1337.6,657.3 1338.6,657.3 1339.6,658.5 1340.6,661.2 1341.7,661.6 1342.7,662.9 1343.7,664.9 1344.7,664.8 1345.7,664.9 1346.7,665.2 1347.7,664.7 1348.7,665.6 1349.8,665.0 1350.8,664.8 1351.8,664.3 1352.8,664.8 1353.8,665.4 1354.8,665.2 1355.8,665.7 1356.8,665.6 1357.8,665.4 1358.9,665.3 1359.9,665.5 1360.9,666.1 1361.9,666.2 1362.9,666.2 1363.9,666.3 1364.9,665.8 1366.0,666.2 1367.0,666.0 1368.0,666.2 1369.0,666.4 1370.0,666.6 1370.0,669.9 1369.0,669.9 1368.0,670.0 1367.0,670.0 1366.0,670.6 1364.9,670.3 1363.9,670.1 1362.9,670.6 1361.9,670.6 1360.9,670.8 1359.9,670.4 1358.9,671.0 1357.8,670.7 1356.8,670.5 1355.8,670.9 1354.8,671.2 1353.8,670.8 1352.8,671.5 1351.8,672.1 1350.8,671.2 1349.8,671.9 1348.7,670.9 1347.7,671.4 1346.7,671.4 1345.7,671.2 1344.7,671.0 1343.7,671.3 1342.7,673.8 1341.7,673.7 1340.6,675.0 1339.6,677.2 1338.6,676.3 1337.6,679.7 1336.6,679.5 1335.6,683.8 1334.6,689.2 1333.5,686.4 1332.5,681.3 1331.5,678.0 1330.5,673.4 1329.5,671.7" fill="#2b8ae0"/><polygon points="1329.5,744.2 1330.5,741.9 1331.5,739.8 1332.5,736.6 1333.5,732.3 1334.6,730.7 1335.6,733.7 1336.6,738.3 1337.6,738.1 1338.6,738.9 1339.6,740.3 1340.6,741.9 1341.7,742.9 1342.7,743.2 1343.7,744.2 1344.7,744.1 1345.7,744.4 1346.7,744.0 1347.7,744.5 1348.7,744.4 1349.8,744.3 1350.8,743.5 1351.8,743.9 1352.8,744.4 1353.8,744.5 1354.8,744.8 1355.8,744.4 1356.8,744.9 1357.8,744.9 1358.9,744.7 1359.9,744.9 1360.9,744.9 1361.9,745.1 1362.9,745.2 1363.9,745.1 1364.9,745.2 1366.0,745.2 1367.0,745.0 1368.0,745.0 1369.0,745.2 1370.0,745.3 1370.0,747.8 1369.0,747.8 1368.0,747.9 1367.0,748.1 1366.0,748.1 1364.9,748.0 1363.9,748.1 1362.9,748.3 1361.9,748.2 1360.9,748.2 1359.9,748.3 1358.9,748.4 1357.8,748.2 1356.8,748.1 1355.8,748.2 1354.8,748.2 1353.8,748.6 1352.8,748.6 1351.8,749.3 1350.8,749.4 1349.8,748.7 1348.7,748.2 1347.7,748.7 1346.7,748.8 1345.7,748.6 1344.7,749.0 1343.7,748.5 1342.7,750.1 1341.7,750.9 1340.6,751.7 1339.6,752.7 1338.6,753.3 1337.6,754.0 1336.6,755.0 1335.6,757.8 1334.6,758.8 1333.5,759.8 1332.5,754.1 1331.5,753.3 1330.5,750.2 1329.5,748.6" fill="#2b8ae0"/><rect x="1329.5" y="664" width="2.5" height="8" fill="#d860c0"/><rect x="1329.5" y="743" width="2.5" height="7" fill="#d860c0"/><polygon points="1381.5,665.1 1384.0,667.3 1390.0,667.7 1390.0,668.9 1384.0,669.3 1381.5,671.5" fill="#2b8ae0"/><polygon points="1381.5,744.4 1384.0,745.6 1390.0,746.0 1390.0,747.2 1384.0,747.6 1381.5,748.8" fill="#2b8ae0"/><rect x="520.5" y="708" width="61.0" height="1" fill="#6e1208"/><rect x="609.3" y="708" width="28.0" height="1" fill="#6e1208"/><rect x="637.5" y="708" width="60.9" height="1" fill="#6e1208"/><rect x="698.6" y="708" width="62.7" height="1" fill="#6e1208"/><rect x="761.5" y="708" width="62.9" height="1" fill="#6e1208"/><rect x="824.6" y="708" width="62.7" height="1" fill="#6e1208"/><rect x="997.3" y="708" width="63.0" height="1" fill="#6e1208"/><rect x="1060.5" y="708" width="62.7" height="1" fill="#6e1208"/><rect x="1123.4" y="708" width="42.7" height="1" fill="#6e1208"/><rect x="1166.3" y="708" width="25.8" height="1" fill="#6e1208"/><rect x="1192.3" y="708" width="29.1" height="1" fill="#6e1208"/><rect x="1221.6" y="708" width="52.8" height="1" fill="#6e1208"/><rect x="1328.8" y="708" width="41.7" height="1" fill="#6e1208"/><rect x="1379.3" y="708" width="12.2" height="1" fill="#6e1208"/><rect x="513" y="371" width="1" height="4" fill="#a4a4a4"/><rect x="520" y="371" width="1" height="4" fill="#a4a4a4"/><rect x="526" y="371" width="1" height="4" fill="#a4a4a4"/><rect x="532" y="371" width="1" height="4" fill="#a4a4a4"/><rect x="539" y="369" width="1" height="6" fill="#a4a4a4"/><rect x="545" y="371" width="1" height="4" fill="#a4a4a4"/><rect x="552" y="371" width="1" height="4" fill="#a4a4a4"/><rect x="558" y="371" width="1" height="4" fill="#a4a4a4"/><rect x="564" y="371" width="1" height="4" fill="#a4a4a4"/><rect x="571" y="367" width="1" height="8" fill="#a4a4a4"/><rect x="577" y="371" width="1" height="4" fill="#a4a4a4"/><rect x="583" y="371" width="1" height="4" fill="#a4a4a4"/><rect x="590" y="371" width="1" height="4" fill="#a4a4a4"/><rect x="596" y="371" width="1" height="4" fill="#a4a4a4"/><rect x="602" y="369" width="1" height="6" fill="#a4a4a4"/><rect x="609" y="371" width="1" height="4" fill="#a4a4a4"/><rect x="615" y="371" width="1" height="4" fill="#a4a4a4"/><rect x="622" y="371" width="1" height="4" fill="#a4a4a4"/><rect x="628" y="371" width="1" height="4" fill="#a4a4a4"/><rect x="634" y="339" width="1" height="36" fill="#c4c4c4"/><rect x="641" y="371" width="1" height="4" fill="#a4a4a4"/><rect x="647" y="371" width="1" height="4" fill="#a4a4a4"/><rect x="653" y="371" width="1" height="4" fill="#a4a4a4"/><rect x="660" y="371" width="1" height="4" fill="#a4a4a4"/><rect x="666" y="369" width="1" height="6" fill="#a4a4a4"/><rect x="672" y="371" width="1" height="4" fill="#a4a4a4"/><rect x="679" y="371" width="1" height="4" fill="#a4a4a4"/><rect x="685" y="371" width="1" height="4" fill="#a4a4a4"/><rect x="692" y="371" width="1" height="4" fill="#a4a4a4"/><rect x="698" y="367" width="1" height="8" fill="#a4a4a4"/><rect x="704" y="371" width="1" height="4" fill="#a4a4a4"/><rect x="711" y="371" width="1" height="4" fill="#a4a4a4"/><rect x="717" y="371" width="1" height="4" fill="#a4a4a4"/><rect x="723" y="371" width="1" height="4" fill="#a4a4a4"/><rect x="730" y="369" width="1" height="6" fill="#a4a4a4"/><rect x="736" y="371" width="1" height="4" fill="#a4a4a4"/><rect x="742" y="371" width="1" height="4" fill="#a4a4a4"/><rect x="749" y="371" width="1" height="4" fill="#a4a4a4"/><rect x="755" y="371" width="1" height="4" fill="#a4a4a4"/><rect x="762" y="339" width="1" height="36" fill="#c4c4c4"/><rect x="768" y="371" width="1" height="4" fill="#a4a4a4"/><rect x="774" y="371" width="1" height="4" fill="#a4a4a4"/><rect x="781" y="371" width="1" height="4" fill="#a4a4a4"/><rect x="787" y="371" width="1" height="4" fill="#a4a4a4"/><rect x="793" y="369" width="1" height="6" fill="#a4a4a4"/><rect x="800" y="371" width="1" height="4" fill="#a4a4a4"/><rect x="806" y="371" width="1" height="4" fill="#a4a4a4"/><rect x="812" y="371" width="1" height="4" fill="#a4a4a4"/><rect x="819" y="371" width="1" height="4" fill="#a4a4a4"/><rect x="825" y="367" width="1" height="8" fill="#a4a4a4"/><rect x="832" y="371" width="1" height="4" fill="#a4a4a4"/><rect x="838" y="371" width="1" height="4" fill="#a4a4a4"/><rect x="844" y="371" width="1" height="4" fill="#a4a4a4"/><rect x="851" y="371" width="1" height="4" fill="#a4a4a4"/><rect x="857" y="369" width="1" height="6" fill="#a4a4a4"/><rect x="863" y="371" width="1" height="4" fill="#a4a4a4"/><rect x="870" y="371" width="1" height="4" fill="#a4a4a4"/><rect x="876" y="371" width="1" height="4" fill="#a4a4a4"/><rect x="882" y="371" width="1" height="4" fill="#a4a4a4"/><rect x="889" y="339" width="1" height="36" fill="#c4c4c4"/><rect x="895" y="371" width="1" height="4" fill="#a4a4a4"/><rect x="902" y="371" width="1" height="4" fill="#a4a4a4"/><rect x="908" y="371" width="1" height="4" fill="#a4a4a4"/><rect x="914" y="371" width="1" height="4" fill="#a4a4a4"/><rect x="921" y="369" width="1" height="6" fill="#a4a4a4"/><rect x="927" y="371" width="1" height="4" fill="#a4a4a4"/><rect x="933" y="371" width="1" height="4" fill="#a4a4a4"/><rect x="940" y="371" width="1" height="4" fill="#a4a4a4"/><rect x="946" y="371" width="1" height="4" fill="#a4a4a4"/><rect x="952" y="367" width="1" height="8" fill="#a4a4a4"/><rect x="959" y="371" width="1" height="4" fill="#a4a4a4"/><rect x="965" y="371" width="1" height="4" fill="#a4a4a4"/><rect x="972" y="371" width="1" height="4" fill="#a4a4a4"/><rect x="978" y="371" width="1" height="4" fill="#a4a4a4"/><rect x="984" y="369" width="1" height="6" fill="#a4a4a4"/><rect x="991" y="371" width="1" height="4" fill="#a4a4a4"/><rect x="997" y="371" width="1" height="4" fill="#a4a4a4"/><rect x="1003" y="371" width="1" height="4" fill="#a4a4a4"/><rect x="1010" y="371" width="1" height="4" fill="#a4a4a4"/><rect x="1016" y="339" width="1" height="36" fill="#c4c4c4"/><rect x="1022" y="371" width="1" height="4" fill="#a4a4a4"/><rect x="1029" y="371" width="1" height="4" fill="#a4a4a4"/><rect x="1035" y="371" width="1" height="4" fill="#a4a4a4"/><rect x="1042" y="371" width="1" height="4" fill="#a4a4a4"/><rect x="1048" y="369" width="1" height="6" fill="#a4a4a4"/><rect x="1054" y="371" width="1" height="4" fill="#a4a4a4"/><rect x="1061" y="371" width="1" height="4" fill="#a4a4a4"/><rect x="1067" y="371" width="1" height="4" fill="#a4a4a4"/><rect x="1073" y="371" width="1" height="4" fill="#a4a4a4"/><rect x="1080" y="367" width="1" height="8" fill="#a4a4a4"/><rect x="1086" y="371" width="1" height="4" fill="#a4a4a4"/><rect x="1092" y="371" width="1" height="4" fill="#a4a4a4"/><rect x="1099" y="371" width="1" height="4" fill="#a4a4a4"/><rect x="1105" y="371" width="1" height="4" fill="#a4a4a4"/><rect x="1112" y="369" width="1" height="6" fill="#a4a4a4"/><rect x="1118" y="371" width="1" height="4" fill="#a4a4a4"/><rect x="1124" y="371" width="1" height="4" fill="#a4a4a4"/><rect x="1131" y="371" width="1" height="4" fill="#a4a4a4"/><rect x="1137" y="371" width="1" height="4" fill="#a4a4a4"/><rect x="1143" y="339" width="1" height="36" fill="#c4c4c4"/><rect x="1150" y="371" width="1" height="4" fill="#a4a4a4"/><rect x="1156" y="371" width="1" height="4" fill="#a4a4a4"/><rect x="1162" y="371" width="1" height="4" fill="#a4a4a4"/><rect x="1169" y="371" width="1" height="4" fill="#a4a4a4"/><rect x="1175" y="369" width="1" height="6" fill="#a4a4a4"/><rect x="1182" y="371" width="1" height="4" fill="#a4a4a4"/><rect x="1188" y="371" width="1" height="4" fill="#a4a4a4"/><rect x="1194" y="371" width="1" height="4" fill="#a4a4a4"/><rect x="1201" y="371" width="1" height="4" fill="#a4a4a4"/><rect x="1207" y="367" width="1" height="8" fill="#a4a4a4"/><rect x="1213" y="371" width="1" height="4" fill="#a4a4a4"/><rect x="1220" y="371" width="1" height="4" fill="#a4a4a4"/><rect x="1226" y="371" width="1" height="4" fill="#a4a4a4"/><rect x="1232" y="371" width="1" height="4" fill="#a4a4a4"/><rect x="1239" y="369" width="1" height="6" fill="#a4a4a4"/><rect x="1245" y="371" width="1" height="4" fill="#a4a4a4"/><rect x="1252" y="371" width="1" height="4" fill="#a4a4a4"/><rect x="1258" y="371" width="1" height="4" fill="#a4a4a4"/><rect x="1264" y="371" width="1" height="4" fill="#a4a4a4"/><rect x="1271" y="339" width="1" height="36" fill="#c4c4c4"/><rect x="1277" y="371" width="1" height="4" fill="#a4a4a4"/><rect x="1283" y="371" width="1" height="4" fill="#a4a4a4"/><rect x="1290" y="371" width="1" height="4" fill="#a4a4a4"/><rect x="1296" y="371" width="1" height="4" fill="#a4a4a4"/><rect x="1302" y="369" width="1" height="6" fill="#a4a4a4"/><rect x="1309" y="371" width="1" height="4" fill="#a4a4a4"/><rect x="1315" y="371" width="1" height="4" fill="#a4a4a4"/><rect x="1322" y="371" width="1" height="4" fill="#a4a4a4"/><rect x="1328" y="371" width="1" height="4" fill="#a4a4a4"/><rect x="1334" y="367" width="1" height="8" fill="#a4a4a4"/><rect x="1341" y="371" width="1" height="4" fill="#a4a4a4"/><rect x="1347" y="371" width="1" height="4" fill="#a4a4a4"/><rect x="1353" y="371" width="1" height="4" fill="#a4a4a4"/><rect x="1360" y="371" width="1" height="4" fill="#a4a4a4"/><rect x="1366" y="369" width="1" height="6" fill="#a4a4a4"/><rect x="1372" y="371" width="1" height="4" fill="#a4a4a4"/><rect x="1379" y="371" width="1" height="4" fill="#a4a4a4"/><rect x="1385" y="371" width="1" height="4" fill="#a4a4a4"/><rect x="1392" y="371" width="1" height="4" fill="#a4a4a4"/><rect x="1398" y="339" width="1" height="36" fill="#c4c4c4"/><rect x="1404" y="371" width="1" height="4" fill="#a4a4a4"/><rect x="1411" y="371" width="1" height="4" fill="#a4a4a4"/><rect x="1417" y="371" width="1" height="4" fill="#a4a4a4"/><rect x="1423" y="371" width="1" height="4" fill="#a4a4a4"/><rect x="1430" y="369" width="1" height="6" fill="#a4a4a4"/><rect x="1436" y="371" width="1" height="4" fill="#a4a4a4"/><rect x="1442" y="371" width="1" height="4" fill="#a4a4a4"/><rect x="1449" y="371" width="1" height="4" fill="#a4a4a4"/><rect x="1455" y="371" width="1" height="4" fill="#a4a4a4"/><rect x="1462" y="367" width="1" height="8" fill="#a4a4a4"/><rect x="1468" y="371" width="1" height="4" fill="#a4a4a4"/><rect x="1474" y="371" width="1" height="4" fill="#a4a4a4"/><rect x="1481" y="371" width="1" height="4" fill="#a4a4a4"/><rect x="1487" y="371" width="1" height="4" fill="#a4a4a4"/><rect x="1493" y="369" width="1" height="6" fill="#a4a4a4"/><rect x="1500" y="371" width="1" height="4" fill="#a4a4a4"/><rect x="1506" y="371" width="1" height="4" fill="#a4a4a4"/><rect x="1512" y="371" width="1" height="4" fill="#a4a4a4"/><rect x="1519" y="371" width="1" height="4" fill="#a4a4a4"/><rect x="1525" y="339" width="1" height="36" fill="#c4c4c4"/><rect x="507" y="107" width="885" height="13" fill="#a5871a"/><rect x="507" y="107" width="885" height="1" fill="#c9b25a"/><g clip-path="url(#clipRul)"><rect x="1474.5" y="107.5" width="70" height="12" rx="4" fill="#2b55c8" stroke="#8fb0f4" stroke-width="1"/></g><polygon points="520,128 523.5,124 578,124 581.5,128 581.5,133 578,137 523.5,137 520,133" fill="#c5b03a"/><polygon points="609,128 612.5,124 634,124 637.5,128 637.5,133 634,137 612.5,137 609,133" fill="#c5b03a"/><polygon points="637,145 640.5,141 695,141 698.5,145 698.5,150 695,154 640.5,154 637,150" fill="#c5b03a"/><polygon points="698,128 701.5,124 758,124 761.5,128 761.5,133 758,137 701.5,137 698,133" fill="#c5b03a"/><polygon points="761,128 764.5,124 821,124 824.5,128 824.5,133 821,137 764.5,137 761,133" fill="#c5b03a"/><polygon points="824,128 827.5,124 884,124 887.5,128 887.5,133 884,137 827.5,137 824,133" fill="#c5b03a"/><polygon points="997,128 1000.5,124 1057,124 1060.5,128 1060.5,133 1057,137 1000.5,137 997,133" fill="#c5b03a"/><polygon points="1060,128 1063.5,124 1120,124 1123.5,128 1123.5,133 1120,137 1063.5,137 1060,133" fill="#c5b03a"/><polygon points="1123,128 1126.5,124 1163,124 1166.5,128 1166.5,133 1163,137 1126.5,137 1123,133" fill="#c5b03a"/><polygon points="1166,128 1169.5,124 1189,124 1192.5,128 1192.5,133 1189,137 1169.5,137 1166,133" fill="#c5b03a"/><polygon points="1192,128 1195.5,124 1218,124 1221.5,128 1221.5,133 1218,137 1195.5,137 1192,133" fill="#c5b03a"/><polygon points="1221,128 1224.5,124 1271,124 1274.5,128 1274.5,133 1271,137 1224.5,137 1221,133" fill="#c5b03a"/><polygon points="1328,128 1331.5,124 1367,124 1370.5,128 1370.5,133 1367,137 1331.5,137 1328,133" fill="#c5b03a"/><polygon points="1379,128 1382.5,124 1396,124 1399.5,128 1399.5,133 1396,137 1382.5,137 1379,133" fill="#c5b03a"/><rect x="520" y="137" width="1" height="1188" fill="#c5b03a"/><rect x="581" y="137" width="1" height="1188" fill="#c5b03a"/><rect x="609" y="137" width="1" height="1188" fill="#c5b03a"/><rect x="637" y="137" width="1" height="1188" fill="#c5b03a"/><rect x="637" y="154" width="1" height="1171" fill="#c5b03a"/><rect x="698" y="154" width="1" height="1171" fill="#c5b03a"/><rect x="698" y="137" width="1" height="1188" fill="#c5b03a"/><rect x="761" y="137" width="1" height="1188" fill="#c5b03a"/><rect x="761" y="137" width="1" height="1188" fill="#c5b03a"/><rect x="824" y="137" width="1" height="1188" fill="#c5b03a"/><rect x="824" y="137" width="1" height="1188" fill="#c5b03a"/><rect x="887" y="137" width="1" height="1188" fill="#c5b03a"/><rect x="997" y="137" width="1" height="1188" fill="#c5b03a"/><rect x="1060" y="137" width="1" height="1188" fill="#c5b03a"/><rect x="1060" y="137" width="1" height="1188" fill="#c5b03a"/><rect x="1123" y="137" width="1" height="1188" fill="#c5b03a"/><rect x="1123" y="137" width="1" height="1188" fill="#c5b03a"/><rect x="1166" y="137" width="1" height="1188" fill="#c5b03a"/><rect x="1166" y="137" width="1" height="1188" fill="#c5b03a"/><rect x="1192" y="137" width="1" height="1188" fill="#c5b03a"/><rect x="1192" y="137" width="1" height="1188" fill="#c5b03a"/><rect x="1221" y="137" width="1" height="1188" fill="#c5b03a"/><rect x="1221" y="137" width="1" height="1188" fill="#c5b03a"/><rect x="1274" y="137" width="1" height="1188" fill="#c5b03a"/><rect x="1328" y="137" width="1" height="1188" fill="#c5b03a"/><rect x="1370" y="137" width="1" height="1188" fill="#c5b03a"/><rect x="1379" y="137" width="1" height="1188" fill="#c5b03a"/><rect x="1391" y="137" width="1" height="1188" fill="#c5b03a"/><rect x="507" y="107" width="1" height="1218" fill="#b8961c"/><rect x="1391" y="107" width="1" height="1218" fill="#b8961c"/><rect x="1474" y="120" width="1" height="1205" fill="#2b55c8"/><polygon points="1478,128 1481.5,124 1504,124 1507.5,128 1507.5,133 1504,137 1481.5,137 1478,133" fill="#5a87dc"/><rect x="1478" y="137" width="1" height="1188" fill="#5a87dc"/><rect x="1507" y="137" width="1" height="1188" fill="#5a87dc"/><rect x="513" y="346" width="1" height="979" fill="#5fc4a4"/><polygon points="507.3,338.5 520.5,338.5 513.7,346.5" fill="#3f8f7a"/><path d="M507.3 338.5 H520.5" stroke="#cfe8e0" stroke-width="1"/><rect x="505" y="440" width="892.5" height="174.5" fill="none" stroke="#00cdff" stroke-width="4"/><rect x="509" y="624" width="889" height="159.3" fill="none" stroke="#00cdff" stroke-width="4"/><rect x="1511" y="375" width="16" height="951" fill="#282828"/><circle cx="1519.6" cy="383.7" r="5.6" fill="#050505"/><polygon points="1516.6,385.8 1522.6,385.8 1519.6,380.6" fill="#e8e8e8"/><rect x="1514" y="395" width="11.4" height="626" rx="5.5" fill="#787878"/><rect x="1515.5" y="705.5" width="7" height="1.6" fill="#111"/><circle cx="1519.4" cy="1278.4" r="5.6" fill="#050505"/><polygon points="1516.4,1276.6 1522.4,1276.6 1519.4,1281.6" fill="#e8e8e8"/><path d="M1515.2 1295.6 H1524 M1519.6 1291.2 V1300" stroke="#e4e4e4" stroke-width="2.2"/><path d="M1515.2 1306 H1524" stroke="#4a4a4a" stroke-width="1.6"/><path d="M1515.2 1316.6 H1524" stroke="#e4e4e4" stroke-width="2.2"/><rect x="500" y="1325" width="1027" height="19" fill="#282828"/><circle cx="514.8" cy="1333.6" r="5.6" fill="#050505"/><polygon points="516.8,1330.6 516.8,1336.6 511.6,1333.6" fill="#e8e8e8"/><rect x="527" y="1328" width="76" height="11.4" rx="5.5" fill="#727272"/><circle cx="532.6" cy="1333.7" r="2.4" fill="#0a0a0a"/><circle cx="597.4" cy="1333.7" r="2.4" fill="#0a0a0a"/><rect x="564.4" y="1330.4" width="1.4" height="6.6" fill="#111"/><circle cx="1464.4" cy="1333.6" r="5.6" fill="#050505"/><polygon points="1462.6,1330.6 1462.6,1336.6 1467.8,1333.6" fill="#e8e8e8"/><path d="M1477 1333.6 H1485.8 M1481.4 1329.2 V1338" stroke="#e4e4e4" stroke-width="2.2"/><path d="M1491.8 1330 V1337.4" stroke="#4a4a4a" stroke-width="1.4"/><path d="M1498 1333.6 H1507" stroke="#e4e4e4" stroke-width="2.2"/></svg>
<div style="top:107.91px;font-size:10.5px;line-height:10.5px;color:#f4f4f4;white-space:nowrap;letter-spacing:-0.055px;left:513.7px;">15&nbsp; Aston Martin V8 Vantage.rpp</div>
<div style="top:107.91px;font-size:10.5px;line-height:10.5px;color:#f4f4f4;white-space:nowrap;letter-spacing:-0.4px;left:1480.5px;width:46.5px;height:15.2px;overflow:hidden;">16&nbsp; BMW M4.rpp</div>
<div style="top:126.13px;font-size:10px;line-height:10px;color:#1c1c1c;white-space:nowrap;letter-spacing:-0.28px;left:526px;width:55px;height:14.5px;overflow:hidden;">VEHCar_Aston</div>
<div style="top:126.13px;font-size:10px;line-height:10px;color:#1c1c1c;white-space:nowrap;letter-spacing:-0.28px;left:615px;width:22px;height:14.5px;overflow:hidden;">VEHCar</div>
<div style="top:143.13px;font-size:10px;line-height:10px;color:#1c1c1c;white-space:nowrap;letter-spacing:-0.28px;left:643px;width:55px;height:14.5px;overflow:hidden;">VEHCar_Aston</div>
<div style="top:126.13px;font-size:10px;line-height:10px;color:#1c1c1c;white-space:nowrap;letter-spacing:-0.28px;left:704px;width:57px;height:14.5px;overflow:hidden;">VEHCar_Aston</div>
<div style="top:126.13px;font-size:10px;line-height:10px;color:#1c1c1c;white-space:nowrap;letter-spacing:-0.28px;left:767px;width:57px;height:14.5px;overflow:hidden;">VEHCar_Aston</div>
<div style="top:126.13px;font-size:10px;line-height:10px;color:#1c1c1c;white-space:nowrap;letter-spacing:-0.28px;left:830px;width:57px;height:14.5px;overflow:hidden;">VEHCar_Aston</div>
<div style="top:126.13px;font-size:10px;line-height:10px;color:#1c1c1c;white-space:nowrap;letter-spacing:-0.28px;left:1003px;width:57px;height:14.5px;overflow:hidden;">VEHCar_Aston</div>
<div style="top:126.13px;font-size:10px;line-height:10px;color:#1c1c1c;white-space:nowrap;letter-spacing:-0.28px;left:1066px;width:57px;height:14.5px;overflow:hidden;">VEHCar_Aston</div>
<div style="top:126.13px;font-size:10px;line-height:10px;color:#1c1c1c;white-space:nowrap;letter-spacing:-0.28px;left:1129px;width:37px;height:14.5px;overflow:hidden;">VEHCar_Aston</div>
<div style="top:126.13px;font-size:10px;line-height:10px;color:#1c1c1c;white-space:nowrap;letter-spacing:-0.28px;left:1172px;width:20px;height:14.5px;overflow:hidden;">VEHCar</div>
<div style="top:126.13px;font-size:10px;line-height:10px;color:#1c1c1c;white-space:nowrap;letter-spacing:-0.28px;left:1198px;width:23px;height:14.5px;overflow:hidden;">VEHCar</div>
<div style="top:126.13px;font-size:10px;line-height:10px;color:#1c1c1c;white-space:nowrap;letter-spacing:-0.28px;left:1227px;width:47px;height:14.5px;overflow:hidden;">VEHCar_Aston</div>
<div style="top:126.13px;font-size:10px;line-height:10px;color:#1c1c1c;white-space:nowrap;letter-spacing:-0.28px;left:1334px;width:36px;height:14.5px;overflow:hidden;">VEHCar_</div>
<div style="top:126.13px;font-size:10px;line-height:10px;color:#1c1c1c;white-space:nowrap;letter-spacing:-0.28px;left:1385px;width:10px;height:14.5px;overflow:hidden;">V</div>
<div style="top:126.13px;font-size:10px;line-height:10px;color:#f4f4f4;white-space:nowrap;letter-spacing:-0.28px;left:1484px;width:23px;height:14.5px;overflow:hidden;">VEHCar</div>
<div style="top:341.89px;font-size:11px;line-height:11px;color:#a4aeb8;white-space:nowrap;letter-spacing:0.686px;left:511.3px;">0:00.000</div>
<div style="top:341.89px;font-size:11px;line-height:11px;color:#a4aeb8;white-space:nowrap;letter-spacing:0.686px;left:638.3px;">0:20.000</div>
<div style="top:341.89px;font-size:11px;line-height:11px;color:#a4aeb8;white-space:nowrap;letter-spacing:0.686px;left:766.3px;">0:40.000</div>
<div style="top:341.89px;font-size:11px;line-height:11px;color:#a4aeb8;white-space:nowrap;letter-spacing:0.686px;left:893.3px;">1:00.000</div>
<div style="top:341.89px;font-size:11px;line-height:11px;color:#a4aeb8;white-space:nowrap;letter-spacing:0.686px;left:1020.3px;">1:20.000</div>
<div style="top:341.89px;font-size:11px;line-height:11px;color:#a4aeb8;white-space:nowrap;letter-spacing:0.686px;left:1147.3px;">1:40.000</div>
<div style="top:341.89px;font-size:11px;line-height:11px;color:#a4aeb8;white-space:nowrap;letter-spacing:0.686px;left:1275.3px;">2:00.000</div>
<div style="top:341.89px;font-size:11px;line-height:11px;color:#a4aeb8;white-space:nowrap;letter-spacing:0.686px;left:1402.3px;">2:20.000</div>
<div style="left:507px;top:520px;width:885px;height:24px;overflow:hidden;">
<div style="left:0;top:11px;width:885px;height:1.3px;background:#8a1410;"></div>
<div style="left:0.0px;top:6.9px;font-size:9px;line-height:9px;color:#e87ccc;white-space:nowrap;">OFFLINE</div>
<div style="left:53.0px;top:6.9px;font-size:9px;line-height:9px;color:#e87ccc;white-space:nowrap;">OFFLINE</div>
<div style="left:106.1px;top:6.9px;font-size:9px;line-height:9px;color:#e87ccc;white-space:nowrap;">OFFLINE</div>
<div style="left:159.1px;top:6.9px;font-size:9px;line-height:9px;color:#e87ccc;white-space:nowrap;">OFFLINE</div>
<div style="left:212.1px;top:6.9px;font-size:9px;line-height:9px;color:#e87ccc;white-space:nowrap;">OFFLINE</div>
<div style="left:265.1px;top:6.9px;font-size:9px;line-height:9px;color:#e87ccc;white-space:nowrap;">OFFLINE</div>
<div style="left:318.2px;top:6.9px;font-size:9px;line-height:9px;color:#e87ccc;white-space:nowrap;">OFFLINE</div>
<div style="left:371.2px;top:6.9px;font-size:9px;line-height:9px;color:#e87ccc;white-space:nowrap;">OFFLINE</div>
<div style="left:424.2px;top:6.9px;font-size:9px;line-height:9px;color:#e87ccc;white-space:nowrap;">OFFLINE</div>
<div style="left:477.3px;top:6.9px;font-size:9px;line-height:9px;color:#e87ccc;white-space:nowrap;">OFFLINE</div>
<div style="left:530.3px;top:6.9px;font-size:9px;line-height:9px;color:#e87ccc;white-space:nowrap;">OFFLINE</div>
<div style="left:583.3px;top:6.9px;font-size:9px;line-height:9px;color:#e87ccc;white-space:nowrap;">OFFLINE</div>
<div style="left:636.4px;top:6.9px;font-size:9px;line-height:9px;color:#e87ccc;white-space:nowrap;">OFFLINE</div>
<div style="left:689.4px;top:6.9px;font-size:9px;line-height:9px;color:#e87ccc;white-space:nowrap;">OFFLINE</div>
<div style="left:742.4px;top:6.9px;font-size:9px;line-height:9px;color:#e87ccc;white-space:nowrap;">OFFLINE</div>
<div style="left:795.5px;top:6.9px;font-size:9px;line-height:9px;color:#e87ccc;white-space:nowrap;">OFFLINE</div>
<div style="left:848.5px;top:6.9px;font-size:9px;line-height:9px;color:#e87ccc;white-space:nowrap;">OFFLINE</div>
</div>
<div style="top:438.71px;font-size:10.5px;line-height:10.5px;color:#9c9c9c;white-space:nowrap;letter-spacing:0.01px;left:618.5px;">Aston Martin V8 Vantage.rpp</div>
<div style="left:503px;top:438px;width:896.5px;height:4px;background:#00cdff;"></div>
<div style="left:1475px;top:800px;width:36px;height:12px;overflow:hidden;"><div style="left:0.3px;top:2.6px;font-size:9px;line-height:9px;color:#f08cd8;white-space:nowrap;">OFFLINE</div></div>
<svg style="left:0px;top:0px;" width="1787" height="1344" viewBox="0 0 1787 1344"><filter id="sh" x="-30%" y="-30%" width="160%" height="160%"><feGaussianBlur stdDeviation="2.2"/></filter><circle cx="946" cy="532.0" r="24" fill="#000" opacity="0.45" filter="url(#sh)"/><circle cx="945.2" cy="529.5" r="24.8" fill="#139ad7"/><circle cx="946" cy="706.7" r="24" fill="#000" opacity="0.45" filter="url(#sh)"/><circle cx="945.2" cy="704.2" r="24.8" fill="#139ad7"/></svg>
<div style="top:515.75px;font-size:29px;line-height:29px;color:#fff;white-space:nowrap;font-weight:bold;left:745.4px;width:400px;text-align:center;">1</div>
<div style="top:689.75px;font-size:29px;line-height:29px;color:#fff;white-space:nowrap;font-weight:bold;left:745.4px;width:400px;text-align:center;">2</div>
<div style="left:1527px;top:103px;width:8px;height:1241px;background:#282828;"></div>
<div style="left:1534px;top:103px;width:125px;height:149px;background:#282828;"></div>
<div style="left:1534px;top:252px;width:125px;height:203px;background:#121212;"></div>
<div style="left:1659px;top:103px;width:128px;height:372px;background:#0f1110;"></div>
<div style="left:1536px;top:105px;width:120px;height:12px;background:#232323;"></div>
<div style="left:1536px;top:121px;width:120px;height:12px;background:#232323;"></div>
<div style="left:1557px;top:148px;width:77px;height:1px;background:#454545;"></div>
<div style="left:1535px;top:154px;width:123px;height:14px;background:#151515;border-radius:0 7px 7px 0;"></div>
<div style="left:1536px;top:171px;width:121px;height:12px;background:#232323;border-radius:0 6px 6px 0;"></div>
<div style="left:1557px;top:196px;width:79px;height:1px;background:#454545;"></div>
<div style="left:1534px;top:455px;width:125px;height:20px;background:#262626;"></div>
<svg style="left:0px;top:0px;" width="1787" height="480" viewBox="0 0 1787 480"><path d="M1541 221.5 V208.5 L1545.5 204.5 H1651.5 V221.5 Z" fill="#414141" stroke="#151515"/><rect x="1623" y="205" width="28" height="16" fill="#a5b3b0"/><path d="M1638 211.2 A3.4 3.4 0 1 0 1642.4 211.2" fill="none" stroke="#4a5452" stroke-width="1.1"/><path d="M1640.2 209.2 V213.2" stroke="#4a5452" stroke-width="1.1"/><radialGradient id="kD" cx="45%" cy="35%" r="70%"><stop offset="0" stop-color="#f2f2f2"/><stop offset="0.7" stop-color="#d6d6d6"/><stop offset="1" stop-color="#a0a0a0"/></radialGradient><ellipse cx="1575.4" cy="239.8" rx="9.8" ry="9.4" fill="#000" opacity="0.3"/><circle cx="1575" cy="238" r="9.4" fill="url(#kD)"/><path d="M1575 231 V234.8" stroke="#707070" stroke-width="1"/><rect x="1629.5" y="228.5" width="20" height="19" fill="#2a2a2a" stroke="#0c0c0c"/><rect x="1630" y="229" width="19" height="1" fill="#484848"/><ellipse cx="1637" cy="238.2" rx="4.3" ry="5" fill="none" stroke="#bbb" stroke-width="1.1"/><ellipse cx="1642" cy="238.2" rx="4.3" ry="5" fill="none" stroke="#bbb" stroke-width="1.1"/><rect x="1629.5" y="258.5" width="20" height="20.5" fill="#0c0c0c"/><rect x="1630" y="259" width="19" height="18" fill="url(#gBtn)"/><rect x="1630" y="259" width="19" height="1" fill="#4a4a4a"/><text x="1639.5" y="273" font-size="11.5" fill="#d4706f" text-anchor="middle" font-family='"Liberation Sans", sans-serif'>M</text><rect x="1629.5" y="282.5" width="20" height="20.5" fill="#0c0c0c"/><rect x="1630" y="283" width="19" height="18" fill="url(#gBtn)"/><rect x="1630" y="283" width="19" height="1" fill="#4a4a4a"/><text x="1639.5" y="297" font-size="11.5" fill="#dccb7c" text-anchor="middle" font-family='"Liberation Sans", sans-serif'>S</text><rect x="1630" y="308.5" width="20" height="18.5" fill="#222" stroke="#0c0c0c"/><polygon points="1632.5,326 1637,309.5 1640,309.5 1635.5,326" fill="#2fd3a4"/><polygon points="1637,326 1641.5,309.5 1644.5,309.5 1640,326" fill="#e2c53a"/><polygon points="1641.5,326 1646,309.5 1649,309.5 1644.5,326" fill="#2d5a6c"/><rect x="1612.3" y="288" width="3" height="151" fill="#050505"/><linearGradient id="gVF" x1="0" y1="0" x2="0" y2="1"><stop offset="0" stop-color="#d8d8d8"/><stop offset="0.04" stop-color="#ffffff"/><stop offset="0.14" stop-color="#f2f2f2"/><stop offset="0.17" stop-color="#767676"/><stop offset="0.46" stop-color="#5c5c5c"/><stop offset="0.5" stop-color="#161616"/><stop offset="0.54" stop-color="#8c8c8c"/><stop offset="0.6" stop-color="#c4c4c4"/><stop offset="0.8" stop-color="#dedede"/><stop offset="0.84" stop-color="#fcfcfc"/><stop offset="0.89" stop-color="#f0f0f0"/><stop offset="0.92" stop-color="#8a8a8a"/><stop offset="1" stop-color="#6a6a6a"/></linearGradient><rect x="1603.5" y="357" width="21" height="3" fill="#000" opacity="0.4"/><path d="M1606 314 H1622 Q1624 314 1624 316 V330 Q1622.6 334.5 1624 339 V353 Q1624 355 1622 355 H1606 Q1604 355 1604 353 V339 Q1605.4 334.5 1604 330 V316 Q1604 314 1606 314 Z" fill="url(#gVF)"/><path d="M1629.7 434 V419.5 L1633.7 415.5 H1649.3 V434 Z" fill="#484848" stroke="#101010"/><path d="M1634.5 428.5 L1639.5 423 L1644.5 427.5" fill="none" stroke="#1c1c1c" stroke-width="1.3"/><rect x="1633.2" y="427.2" width="2.6" height="2.6" fill="#1c1c1c"/><rect x="1638.2" y="421.7" width="2.6" height="2.6" fill="#1c1c1c"/><rect x="1643.2" y="426.2" width="2.6" height="2.6" fill="#1c1c1c"/><circle cx="1649.4" cy="161.2" r="4.5" fill="#f0dc90"/><circle cx="1651.6" cy="161.2" r="3.7" fill="#151515"/><circle cx="1543.8" cy="463.7" r="6.6" fill="none" stroke="#7c7c7c" stroke-width="1.2"/><path d="M1542.4 461.6 H1544.2 V466.8 M1542 467 H1546.2" stroke="#7c7c7c" stroke-width="1.2" fill="none"/><circle cx="1543.8" cy="459.6" r="0.9" fill="#7c7c7c"/></svg>
<div style="top:208.11px;font-size:10.5px;line-height:10.5px;color:#d8d8d8;white-space:nowrap;font-weight:bold;left:1551px;transform:scaleX(0.82);transform-origin:0 0;">FX</div>
<div style="left:1538px;top:154px;width:99.5px;height:14px;overflow:hidden;">
<div style="left:0;top:1.2px;font-size:10.4px;line-height:12px;color:#ecd678;white-space:nowrap;text-decoration:underline;text-underline-offset:1.5px;letter-spacing:-0.12px;">Analog 1 (1) / Analog 2</div></div>
<div style="top:260.01px;font-size:10.5px;line-height:10.5px;color:#858d93;white-space:nowrap;letter-spacing:0.15px;left:1563px;">0.00dB</div>
<div style="top:277.54px;font-size:10px;line-height:10px;color:#a2a2a2;white-space:nowrap;font-weight:bold;left:1546px;">-inf</div>
<div style="top:277.54px;font-size:10px;line-height:10px;color:#a2a2a2;white-space:nowrap;font-weight:bold;left:1574.5px;">-inf</div>
<div style="top:298.87px;font-size:9.6px;line-height:9.6px;color:#525252;white-space:nowrap;left:1368.5px;width:400px;text-align:center;">-6-</div>
<div style="top:326.87px;font-size:9.6px;line-height:9.6px;color:#525252;white-space:nowrap;left:1368.5px;width:400px;text-align:center;">-18-</div>
<div style="top:354.87px;font-size:9.6px;line-height:9.6px;color:#525252;white-space:nowrap;left:1368.5px;width:400px;text-align:center;">-30-</div>
<div style="top:382.87px;font-size:9.6px;line-height:9.6px;color:#525252;white-space:nowrap;left:1368.5px;width:400px;text-align:center;">-42-</div>
<div style="top:410.87px;font-size:9.6px;line-height:9.6px;color:#525252;white-space:nowrap;left:1368.5px;width:400px;text-align:center;">-54-</div>
<div style="top:435.54px;font-size:10px;line-height:10px;color:#e4e4e4;white-space:nowrap;font-weight:bold;left:1546px;">-inf</div>
<div style="top:435.54px;font-size:10px;line-height:10px;color:#e4e4e4;white-space:nowrap;font-weight:bold;left:1574.5px;">-inf</div>
<div style="top:329.87px;font-size:9.6px;line-height:9.6px;color:#6e6e6e;white-space:nowrap;left:1440px;width:400px;text-align:center;">Route</div>
<div style="top:436.87px;font-size:9.6px;line-height:9.6px;color:#5c5c5c;white-space:nowrap;left:1439.5px;width:400px;text-align:center;">trim</div>
<div style="top:458.57px;font-size:11.5px;line-height:11.5px;color:#dedede;white-space:nowrap;letter-spacing:-0.904px;left:1406.8px;width:400px;text-align:center;">MASTER</div>
<div style="left:1534px;top:475px;width:253px;height:21px;background:#282828;"></div>
<svg style="left:0px;top:0px;" width="1787" height="500" viewBox="0 0 1787 500"><polygon points="1541,475 1548,490 1633,490 1640,475" fill="#a7b3ae"/><polygon points="1641,475 1648,490 1722,490 1729,475" fill="#171717"/><rect x="1624.0" y="478.5" width="8" height="8" fill="none" stroke="#000" stroke-width="1"/><path d="M1625.8 480.3 L1630.2 484.7 M1630.2 480.3 L1625.8 484.7" stroke="#000" stroke-width="1.1"/><rect x="1714.0" y="478.5" width="8" height="8" fill="none" stroke="#c4c4c4" stroke-width="1"/><path d="M1715.8 480.3 L1720.2 484.7 M1720.2 480.3 L1715.8 484.7" stroke="#c4c4c4" stroke-width="1.1"/></svg>
<div style="top:477.98px;font-size:9px;line-height:9px;color:#e6e6c8;white-space:nowrap;left:1537.3px;">!</div>
<div style="top:477.54px;font-size:10px;line-height:10px;color:#000;white-space:nowrap;font-weight:bold;letter-spacing:0.28px;left:1553.4px;">Mixer Master</div>
<div style="top:477.54px;font-size:10px;line-height:10px;color:#c0c0c0;white-space:nowrap;letter-spacing:0.1px;left:1649.3px;">Undo History</div>
<div style="left:1534px;top:496px;width:253px;height:833px;background:#0f1110;"></div>
<div style="left:1545.5px;top:514.5px;width:250px;height:22.5px;background:#252b29;border:1px solid #e4e4e4;"></div>
<div style="left:1545px;top:553px;width:250px;height:767px;background:#1f1f1f;border:1px solid #9a9a9a;"></div>
<div style="left:1546px;top:554px;width:241px;height:25px;background:#ffffff;"></div>
<div style="left:1570px;top:554px;width:1px;height:25px;background:#e2e2e2;"></div>
<div style="left:1617px;top:554px;width:1px;height:25px;background:#e2e2e2;"></div>
<div style="top:561.27px;font-size:11.5px;line-height:11.5px;color:#000;white-space:nowrap;right:175px;text-align:right;">#</div>
<div style="top:561.27px;font-size:11.5px;line-height:11.5px;color:#000;white-space:nowrap;left:1624px;transform:scaleX(0.925);transform-origin:0 0;">Name</div>
<div style="left:1546px;top:579px;width:241px;height:740px;overflow:hidden;">
<div style="left:0;top:0.5px;width:241px;height:17px;background:#999999;border-bottom:1px solid #6c6c6c;"><div style="left:24px;top:0;width:1px;height:17px;background:#6c6c6c;"></div><div style="left:71px;top:0;width:1px;height:17px;background:#6c6c6c;"></div><div style="left:5px;top:2px;width:12px;height:12px;background:#b08a1c;"></div><div style="right:175px;top:2.6px;font-size:11.5px;line-height:12px;color:#111;white-space:nowrap;transform:scaleX(0.925);transform-origin:100% 0;">R15</div><div style="left:78px;top:2.6px;font-size:11.5px;line-height:12px;color:#111;white-space:nowrap;transform:scaleX(0.925);transform-origin:0 0;">Aston Martin V8 Vantage.rpp</div></div>
<div style="left:0;top:17.5px;width:241px;height:17px;background:#1f1f1f;border-bottom:1px solid #6c6c6c;"><div style="left:24px;top:0;width:1px;height:17px;background:#6c6c6c;"></div><div style="left:71px;top:0;width:1px;height:17px;background:#6c6c6c;"></div><div style="left:5px;top:2px;width:12px;height:12px;background:#c5b03a;"></div><div style="right:175px;top:2.6px;font-size:11.5px;line-height:12px;color:#f2f2f2;white-space:nowrap;transform:scaleX(0.925);transform-origin:100% 0;">R1</div><div style="left:78px;top:2.6px;font-size:11.5px;line-height:12px;color:#f2f2f2;white-space:nowrap;transform:scaleX(0.925);transform-origin:0 0;">VEHCar_Aston Martin V8 Vantage-Idle Composite</div></div>
<div style="left:0;top:34.5px;width:241px;height:17px;background:#1f1f1f;border-bottom:1px solid #6c6c6c;"><div style="left:24px;top:0;width:1px;height:17px;background:#6c6c6c;"></div><div style="left:71px;top:0;width:1px;height:17px;background:#6c6c6c;"></div><div style="left:5px;top:2px;width:12px;height:12px;background:#c5b03a;"></div><div style="right:175px;top:2.6px;font-size:11.5px;line-height:12px;color:#f2f2f2;white-space:nowrap;transform:scaleX(0.925);transform-origin:100% 0;">R2</div><div style="left:78px;top:2.6px;font-size:11.5px;line-height:12px;color:#f2f2f2;white-space:nowrap;transform:scaleX(0.925);transform-origin:0 0;">VEHCar_Aston Martin V8 Vantage-1000 Off Load</div></div>
<div style="left:0;top:51.5px;width:241px;height:17px;background:#1f1f1f;border-bottom:1px solid #6c6c6c;"><div style="left:24px;top:0;width:1px;height:17px;background:#6c6c6c;"></div><div style="left:71px;top:0;width:1px;height:17px;background:#6c6c6c;"></div><div style="left:5px;top:2px;width:12px;height:12px;background:#c5b03a;"></div><div style="right:175px;top:2.6px;font-size:11.5px;line-height:12px;color:#f2f2f2;white-space:nowrap;transform:scaleX(0.925);transform-origin:100% 0;">R3</div><div style="left:78px;top:2.6px;font-size:11.5px;line-height:12px;color:#f2f2f2;white-space:nowrap;transform:scaleX(0.925);transform-origin:0 0;">VEHCar_Aston Martin V8 Vantage-1500 Off Load</div></div>
<div style="left:0;top:68.5px;width:241px;height:17px;background:#1f1f1f;border-bottom:1px solid #6c6c6c;"><div style="left:24px;top:0;width:1px;height:17px;background:#6c6c6c;"></div><div style="left:71px;top:0;width:1px;height:17px;background:#6c6c6c;"></div><div style="left:5px;top:2px;width:12px;height:12px;background:#c5b03a;"></div><div style="right:175px;top:2.6px;font-size:11.5px;line-height:12px;color:#f2f2f2;white-space:nowrap;transform:scaleX(0.925);transform-origin:100% 0;">R4</div><div style="left:78px;top:2.6px;font-size:11.5px;line-height:12px;color:#f2f2f2;white-space:nowrap;transform:scaleX(0.925);transform-origin:0 0;">VEHCar_Aston Martin V8 Vantage-2000 Off Load</div></div>
<div style="left:0;top:85.5px;width:241px;height:17px;background:#1f1f1f;border-bottom:1px solid #6c6c6c;"><div style="left:24px;top:0;width:1px;height:17px;background:#6c6c6c;"></div><div style="left:71px;top:0;width:1px;height:17px;background:#6c6c6c;"></div><div style="left:5px;top:2px;width:12px;height:12px;background:#c5b03a;"></div><div style="right:175px;top:2.6px;font-size:11.5px;line-height:12px;color:#f2f2f2;white-space:nowrap;transform:scaleX(0.925);transform-origin:100% 0;">R5</div><div style="left:78px;top:2.6px;font-size:11.5px;line-height:12px;color:#f2f2f2;white-space:nowrap;transform:scaleX(0.925);transform-origin:0 0;">VEHCar_Aston Martin V8 Vantage-3000 Off Load</div></div>
<div style="left:0;top:102.5px;width:241px;height:17px;background:#1f1f1f;border-bottom:1px solid #6c6c6c;"><div style="left:24px;top:0;width:1px;height:17px;background:#6c6c6c;"></div><div style="left:71px;top:0;width:1px;height:17px;background:#6c6c6c;"></div><div style="left:5px;top:2px;width:12px;height:12px;background:#c5b03a;"></div><div style="right:175px;top:2.6px;font-size:11.5px;line-height:12px;color:#f2f2f2;white-space:nowrap;transform:scaleX(0.925);transform-origin:100% 0;">R6</div><div style="left:78px;top:2.6px;font-size:11.5px;line-height:12px;color:#f2f2f2;white-space:nowrap;transform:scaleX(0.925);transform-origin:0 0;">VEHCar_Aston Martin V8 Vantage-4000 Off Load</div></div>
<div style="left:0;top:119.5px;width:241px;height:17px;background:#1f1f1f;border-bottom:1px solid #6c6c6c;"><div style="left:24px;top:0;width:1px;height:17px;background:#6c6c6c;"></div><div style="left:71px;top:0;width:1px;height:17px;background:#6c6c6c;"></div><div style="left:5px;top:2px;width:12px;height:12px;background:#c5b03a;"></div><div style="right:175px;top:2.6px;font-size:11.5px;line-height:12px;color:#f2f2f2;white-space:nowrap;transform:scaleX(0.925);transform-origin:100% 0;">R7</div><div style="left:78px;top:2.6px;font-size:11.5px;line-height:12px;color:#f2f2f2;white-space:nowrap;transform:scaleX(0.925);transform-origin:0 0;">VEHCar_Aston Martin V8 Vantage-5000 Off Load</div></div>
<div style="left:0;top:136.5px;width:241px;height:17px;background:#1f1f1f;border-bottom:1px solid #6c6c6c;"><div style="left:24px;top:0;width:1px;height:17px;background:#6c6c6c;"></div><div style="left:71px;top:0;width:1px;height:17px;background:#6c6c6c;"></div><div style="left:5px;top:2px;width:12px;height:12px;background:#c5b03a;"></div><div style="right:175px;top:2.6px;font-size:11.5px;line-height:12px;color:#f2f2f2;white-space:nowrap;transform:scaleX(0.925);transform-origin:100% 0;">R8</div><div style="left:78px;top:2.6px;font-size:11.5px;line-height:12px;color:#f2f2f2;white-space:nowrap;transform:scaleX(0.925);transform-origin:0 0;">VEHCar_Aston Martin V8 Vantage-1000 On Load</div></div>
<div style="left:0;top:153.5px;width:241px;height:17px;background:#1f1f1f;border-bottom:1px solid #6c6c6c;"><div style="left:24px;top:0;width:1px;height:17px;background:#6c6c6c;"></div><div style="left:71px;top:0;width:1px;height:17px;background:#6c6c6c;"></div><div style="left:5px;top:2px;width:12px;height:12px;background:#c5b03a;"></div><div style="right:175px;top:2.6px;font-size:11.5px;line-height:12px;color:#f2f2f2;white-space:nowrap;transform:scaleX(0.925);transform-origin:100% 0;">R9</div><div style="left:78px;top:2.6px;font-size:11.5px;line-height:12px;color:#f2f2f2;white-space:nowrap;transform:scaleX(0.925);transform-origin:0 0;">VEHCar_Aston Martin V8 Vantage-1500 On Load</div></div>
<div style="left:0;top:170.5px;width:241px;height:17px;background:#1f1f1f;border-bottom:1px solid #6c6c6c;"><div style="left:24px;top:0;width:1px;height:17px;background:#6c6c6c;"></div><div style="left:71px;top:0;width:1px;height:17px;background:#6c6c6c;"></div><div style="left:5px;top:2px;width:12px;height:12px;background:#c5b03a;"></div><div style="right:175px;top:2.6px;font-size:11.5px;line-height:12px;color:#f2f2f2;white-space:nowrap;transform:scaleX(0.925);transform-origin:100% 0;">R10</div><div style="left:78px;top:2.6px;font-size:11.5px;line-height:12px;color:#f2f2f2;white-space:nowrap;transform:scaleX(0.925);transform-origin:0 0;">VEHCar_Aston Martin V8 Vantage-2000 On Load</div></div>
<div style="left:0;top:187.5px;width:241px;height:17px;background:#1f1f1f;border-bottom:1px solid #6c6c6c;"><div style="left:24px;top:0;width:1px;height:17px;background:#6c6c6c;"></div><div style="left:71px;top:0;width:1px;height:17px;background:#6c6c6c;"></div><div style="left:5px;top:2px;width:12px;height:12px;background:#c5b03a;"></div><div style="right:175px;top:2.6px;font-size:11.5px;line-height:12px;color:#f2f2f2;white-space:nowrap;transform:scaleX(0.925);transform-origin:100% 0;">R11</div><div style="left:78px;top:2.6px;font-size:11.5px;line-height:12px;color:#f2f2f2;white-space:nowrap;transform:scaleX(0.925);transform-origin:0 0;">VEHCar_Aston Martin V8 Vantage-3000 On Load</div></div>
<div style="left:0;top:204.5px;width:241px;height:17px;background:#1f1f1f;border-bottom:1px solid #6c6c6c;"><div style="left:24px;top:0;width:1px;height:17px;background:#6c6c6c;"></div><div style="left:71px;top:0;width:1px;height:17px;background:#6c6c6c;"></div><div style="left:5px;top:2px;width:12px;height:12px;background:#c5b03a;"></div><div style="right:175px;top:2.6px;font-size:11.5px;line-height:12px;color:#f2f2f2;white-space:nowrap;transform:scaleX(0.925);transform-origin:100% 0;">R12</div><div style="left:78px;top:2.6px;font-size:11.5px;line-height:12px;color:#f2f2f2;white-space:nowrap;transform:scaleX(0.925);transform-origin:0 0;">VEHCar_Aston Martin V8 Vantage-4000 On Load</div></div>
<div style="left:0;top:221.5px;width:241px;height:17px;background:#1f1f1f;border-bottom:1px solid #6c6c6c;"><div style="left:24px;top:0;width:1px;height:17px;background:#6c6c6c;"></div><div style="left:71px;top:0;width:1px;height:17px;background:#6c6c6c;"></div><div style="left:5px;top:2px;width:12px;height:12px;background:#c5b03a;"></div><div style="right:175px;top:2.6px;font-size:11.5px;line-height:12px;color:#f2f2f2;white-space:nowrap;transform:scaleX(0.925);transform-origin:100% 0;">R13</div><div style="left:78px;top:2.6px;font-size:11.5px;line-height:12px;color:#f2f2f2;white-space:nowrap;transform:scaleX(0.925);transform-origin:0 0;">VEHCar_Aston Martin V8 Vantage-5000 On Load</div></div>
<div style="left:0;top:238.5px;width:241px;height:17px;background:#1f1f1f;border-bottom:1px solid #6c6c6c;"><div style="left:24px;top:0;width:1px;height:17px;background:#6c6c6c;"></div><div style="left:71px;top:0;width:1px;height:17px;background:#6c6c6c;"></div><div style="left:5px;top:2px;width:12px;height:12px;background:#c5b03a;"></div><div style="right:175px;top:2.6px;font-size:11.5px;line-height:12px;color:#f2f2f2;white-space:nowrap;transform:scaleX(0.925);transform-origin:100% 0;">R14</div><div style="left:78px;top:2.6px;font-size:11.5px;line-height:12px;color:#f2f2f2;white-space:nowrap;transform:scaleX(0.925);transform-origin:0 0;">VEHCar_Aston Martin V8 Vantage-Start Composite</div></div>
<div style="left:0;top:255.5px;width:241px;height:17px;background:#1f1f1f;border-bottom:1px solid #6c6c6c;"><div style="left:24px;top:0;width:1px;height:17px;background:#6c6c6c;"></div><div style="left:71px;top:0;width:1px;height:17px;background:#6c6c6c;"></div><div style="left:5px;top:2px;width:12px;height:12px;background:#2b55ba;"></div><div style="right:175px;top:2.6px;font-size:11.5px;line-height:12px;color:#f2f2f2;white-space:nowrap;transform:scaleX(0.925);transform-origin:100% 0;">R16</div><div style="left:78px;top:2.6px;font-size:11.5px;line-height:12px;color:#f2f2f2;white-space:nowrap;transform:scaleX(0.925);transform-origin:0 0;">BMW M4.rpp</div></div>
<div style="left:0;top:272.5px;width:241px;height:17px;background:#1f1f1f;border-bottom:1px solid #6c6c6c;"><div style="left:24px;top:0;width:1px;height:17px;background:#6c6c6c;"></div><div style="left:71px;top:0;width:1px;height:17px;background:#6c6c6c;"></div><div style="left:5px;top:2px;width:12px;height:12px;background:#5a87dc;"></div><div style="right:175px;top:2.6px;font-size:11.5px;line-height:12px;color:#f2f2f2;white-space:nowrap;transform:scaleX(0.925);transform-origin:100% 0;">R17</div><div style="left:78px;top:2.6px;font-size:11.5px;line-height:12px;color:#f2f2f2;white-space:nowrap;transform:scaleX(0.925);transform-origin:0 0;">VEHCar_BMW M4-Idle Composite_</div></div>
<div style="left:0;top:289.5px;width:241px;height:17px;background:#1f1f1f;border-bottom:1px solid #6c6c6c;"><div style="left:24px;top:0;width:1px;height:17px;background:#6c6c6c;"></div><div style="left:71px;top:0;width:1px;height:17px;background:#6c6c6c;"></div><div style="left:5px;top:2px;width:12px;height:12px;background:#5a87dc;"></div><div style="right:175px;top:2.6px;font-size:11.5px;line-height:12px;color:#f2f2f2;white-space:nowrap;transform:scaleX(0.925);transform-origin:100% 0;">R18</div><div style="left:78px;top:2.6px;font-size:11.5px;line-height:12px;color:#f2f2f2;white-space:nowrap;transform:scaleX(0.925);transform-origin:0 0;">VEHCar_BMW M4-1000 Off Load</div></div>
<div style="left:0;top:306.5px;width:241px;height:17px;background:#1f1f1f;border-bottom:1px solid #6c6c6c;"><div style="left:24px;top:0;width:1px;height:17px;background:#6c6c6c;"></div><div style="left:71px;top:0;width:1px;height:17px;background:#6c6c6c;"></div><div style="left:5px;top:2px;width:12px;height:12px;background:#5a87dc;"></div><div style="right:175px;top:2.6px;font-size:11.5px;line-height:12px;color:#f2f2f2;white-space:nowrap;transform:scaleX(0.925);transform-origin:100% 0;">R19</div><div style="left:78px;top:2.6px;font-size:11.5px;line-height:12px;color:#f2f2f2;white-space:nowrap;transform:scaleX(0.925);transform-origin:0 0;">VEHCar_BMW M4-1500 Off Load</div></div>
<div style="left:0;top:323.5px;width:241px;height:17px;background:#1f1f1f;border-bottom:1px solid #6c6c6c;"><div style="left:24px;top:0;width:1px;height:17px;background:#6c6c6c;"></div><div style="left:71px;top:0;width:1px;height:17px;background:#6c6c6c;"></div><div style="left:5px;top:2px;width:12px;height:12px;background:#5a87dc;"></div><div style="right:175px;top:2.6px;font-size:11.5px;line-height:12px;color:#f2f2f2;white-space:nowrap;transform:scaleX(0.925);transform-origin:100% 0;">R20</div><div style="left:78px;top:2.6px;font-size:11.5px;line-height:12px;color:#f2f2f2;white-space:nowrap;transform:scaleX(0.925);transform-origin:0 0;">VEHCar_BMW M4-2000 Off Load</div></div>
<div style="left:0;top:340.5px;width:241px;height:17px;background:#1f1f1f;border-bottom:1px solid #6c6c6c;"><div style="left:24px;top:0;width:1px;height:17px;background:#6c6c6c;"></div><div style="left:71px;top:0;width:1px;height:17px;background:#6c6c6c;"></div><div style="left:5px;top:2px;width:12px;height:12px;background:#5a87dc;"></div><div style="right:175px;top:2.6px;font-size:11.5px;line-height:12px;color:#f2f2f2;white-space:nowrap;transform:scaleX(0.925);transform-origin:100% 0;">R21</div><div style="left:78px;top:2.6px;font-size:11.5px;line-height:12px;color:#f2f2f2;white-space:nowrap;transform:scaleX(0.925);transform-origin:0 0;">VEHCar_BMW M4-3000 Off Load</div></div>
<div style="left:0;top:357.5px;width:241px;height:17px;background:#1f1f1f;border-bottom:1px solid #6c6c6c;"><div style="left:24px;top:0;width:1px;height:17px;background:#6c6c6c;"></div><div style="left:71px;top:0;width:1px;height:17px;background:#6c6c6c;"></div><div style="left:5px;top:2px;width:12px;height:12px;background:#5a87dc;"></div><div style="right:175px;top:2.6px;font-size:11.5px;line-height:12px;color:#f2f2f2;white-space:nowrap;transform:scaleX(0.925);transform-origin:100% 0;">R22</div><div style="left:78px;top:2.6px;font-size:11.5px;line-height:12px;color:#f2f2f2;white-space:nowrap;transform:scaleX(0.925);transform-origin:0 0;">VEHCar_BMW M4-4000 Off Load</div></div>
<div style="left:0;top:374.5px;width:241px;height:17px;background:#1f1f1f;border-bottom:1px solid #6c6c6c;"><div style="left:24px;top:0;width:1px;height:17px;background:#6c6c6c;"></div><div style="left:71px;top:0;width:1px;height:17px;background:#6c6c6c;"></div><div style="left:5px;top:2px;width:12px;height:12px;background:#5a87dc;"></div><div style="right:175px;top:2.6px;font-size:11.5px;line-height:12px;color:#f2f2f2;white-space:nowrap;transform:scaleX(0.925);transform-origin:100% 0;">R23</div><div style="left:78px;top:2.6px;font-size:11.5px;line-height:12px;color:#f2f2f2;white-space:nowrap;transform:scaleX(0.925);transform-origin:0 0;">VEHCar_BMW M4-5000 Off Load</div></div>
<div style="left:0;top:391.5px;width:241px;height:17px;background:#1f1f1f;border-bottom:1px solid #6c6c6c;"><div style="left:24px;top:0;width:1px;height:17px;background:#6c6c6c;"></div><div style="left:71px;top:0;width:1px;height:17px;background:#6c6c6c;"></div><div style="left:5px;top:2px;width:12px;height:12px;background:#5a87dc;"></div><div style="right:175px;top:2.6px;font-size:11.5px;line-height:12px;color:#f2f2f2;white-space:nowrap;transform:scaleX(0.925);transform-origin:100% 0;">R24</div><div style="left:78px;top:2.6px;font-size:11.5px;line-height:12px;color:#f2f2f2;white-space:nowrap;transform:scaleX(0.925);transform-origin:0 0;">VEHCar_BMW M4-6000 Off Load</div></div>
<div style="left:0;top:408.5px;width:241px;height:17px;background:#1f1f1f;border-bottom:1px solid #6c6c6c;"><div style="left:24px;top:0;width:1px;height:17px;background:#6c6c6c;"></div><div style="left:71px;top:0;width:1px;height:17px;background:#6c6c6c;"></div><div style="left:5px;top:2px;width:12px;height:12px;background:#5a87dc;"></div><div style="right:175px;top:2.6px;font-size:11.5px;line-height:12px;color:#f2f2f2;white-space:nowrap;transform:scaleX(0.925);transform-origin:100% 0;">R25</div><div style="left:78px;top:2.6px;font-size:11.5px;line-height:12px;color:#f2f2f2;white-space:nowrap;transform:scaleX(0.925);transform-origin:0 0;">VEHCar_BMW M4-7000 Off Load</div></div>
<div style="left:0;top:425.5px;width:241px;height:17px;background:#1f1f1f;border-bottom:1px solid #6c6c6c;"><div style="left:24px;top:0;width:1px;height:17px;background:#6c6c6c;"></div><div style="left:71px;top:0;width:1px;height:17px;background:#6c6c6c;"></div><div style="left:5px;top:2px;width:12px;height:12px;background:#5a87dc;"></div><div style="right:175px;top:2.6px;font-size:11.5px;line-height:12px;color:#f2f2f2;white-space:nowrap;transform:scaleX(0.925);transform-origin:100% 0;">R26</div><div style="left:78px;top:2.6px;font-size:11.5px;line-height:12px;color:#f2f2f2;white-space:nowrap;transform:scaleX(0.925);transform-origin:0 0;">VEHCar_BMW M4-1000 On Load</div></div>
<div style="left:0;top:442.5px;width:241px;height:17px;background:#1f1f1f;border-bottom:1px solid #6c6c6c;"><div style="left:24px;top:0;width:1px;height:17px;background:#6c6c6c;"></div><div style="left:71px;top:0;width:1px;height:17px;background:#6c6c6c;"></div><div style="left:5px;top:2px;width:12px;height:12px;background:#5a87dc;"></div><div style="right:175px;top:2.6px;font-size:11.5px;line-height:12px;color:#f2f2f2;white-space:nowrap;transform:scaleX(0.925);transform-origin:100% 0;">R27</div><div style="left:78px;top:2.6px;font-size:11.5px;line-height:12px;color:#f2f2f2;white-space:nowrap;transform:scaleX(0.925);transform-origin:0 0;">VEHCar_BMW M4-1500 On Load</div></div>
<div style="left:0;top:459.5px;width:241px;height:17px;background:#1f1f1f;border-bottom:1px solid #6c6c6c;"><div style="left:24px;top:0;width:1px;height:17px;background:#6c6c6c;"></div><div style="left:71px;top:0;width:1px;height:17px;background:#6c6c6c;"></div><div style="left:5px;top:2px;width:12px;height:12px;background:#5a87dc;"></div><div style="right:175px;top:2.6px;font-size:11.5px;line-height:12px;color:#f2f2f2;white-space:nowrap;transform:scaleX(0.925);transform-origin:100% 0;">R28</div><div style="left:78px;top:2.6px;font-size:11.5px;line-height:12px;color:#f2f2f2;white-space:nowrap;transform:scaleX(0.925);transform-origin:0 0;">VEHCar_BMW M4-2000 On Load</div></div>
<div style="left:0;top:476.5px;width:241px;height:17px;background:#1f1f1f;border-bottom:1px solid #6c6c6c;"><div style="left:24px;top:0;width:1px;height:17px;background:#6c6c6c;"></div><div style="left:71px;top:0;width:1px;height:17px;background:#6c6c6c;"></div><div style="left:5px;top:2px;width:12px;height:12px;background:#5a87dc;"></div><div style="right:175px;top:2.6px;font-size:11.5px;line-height:12px;color:#f2f2f2;white-space:nowrap;transform:scaleX(0.925);transform-origin:100% 0;">R29</div><div style="left:78px;top:2.6px;font-size:11.5px;line-height:12px;color:#f2f2f2;white-space:nowrap;transform:scaleX(0.925);transform-origin:0 0;">VEHCar_BMW M4-3000 On Load</div></div>
<div style="left:0;top:493.5px;width:241px;height:17px;background:#1f1f1f;border-bottom:1px solid #6c6c6c;"><div style="left:24px;top:0;width:1px;height:17px;background:#6c6c6c;"></div><div style="left:71px;top:0;width:1px;height:17px;background:#6c6c6c;"></div><div style="left:5px;top:2px;width:12px;height:12px;background:#5a87dc;"></div><div style="right:175px;top:2.6px;font-size:11.5px;line-height:12px;color:#f2f2f2;white-space:nowrap;transform:scaleX(0.925);transform-origin:100% 0;">R30</div><div style="left:78px;top:2.6px;font-size:11.5px;line-height:12px;color:#f2f2f2;white-space:nowrap;transform:scaleX(0.925);transform-origin:0 0;">VEHCar_BMW M4-4000 On Load</div></div>
<div style="left:0;top:510.5px;width:241px;height:17px;background:#1f1f1f;border-bottom:1px solid #6c6c6c;"><div style="left:24px;top:0;width:1px;height:17px;background:#6c6c6c;"></div><div style="left:71px;top:0;width:1px;height:17px;background:#6c6c6c;"></div><div style="left:5px;top:2px;width:12px;height:12px;background:#5a87dc;"></div><div style="right:175px;top:2.6px;font-size:11.5px;line-height:12px;color:#f2f2f2;white-space:nowrap;transform:scaleX(0.925);transform-origin:100% 0;">R31</div><div style="left:78px;top:2.6px;font-size:11.5px;line-height:12px;color:#f2f2f2;white-space:nowrap;transform:scaleX(0.925);transform-origin:0 0;">VEHCar_BMW M4-5000 On Load</div></div>
<div style="left:0;top:527.5px;width:241px;height:17px;background:#1f1f1f;border-bottom:1px solid #6c6c6c;"><div style="left:24px;top:0;width:1px;height:17px;background:#6c6c6c;"></div><div style="left:71px;top:0;width:1px;height:17px;background:#6c6c6c;"></div><div style="left:5px;top:2px;width:12px;height:12px;background:#5a87dc;"></div><div style="right:175px;top:2.6px;font-size:11.5px;line-height:12px;color:#f2f2f2;white-space:nowrap;transform:scaleX(0.925);transform-origin:100% 0;">R32</div><div style="left:78px;top:2.6px;font-size:11.5px;line-height:12px;color:#f2f2f2;white-space:nowrap;transform:scaleX(0.925);transform-origin:0 0;">VEHCar_BMW M4-6000 On Load</div></div>
<div style="left:0;top:544.5px;width:241px;height:17px;background:#1f1f1f;border-bottom:1px solid #6c6c6c;"><div style="left:24px;top:0;width:1px;height:17px;background:#6c6c6c;"></div><div style="left:71px;top:0;width:1px;height:17px;background:#6c6c6c;"></div><div style="left:5px;top:2px;width:12px;height:12px;background:#5a87dc;"></div><div style="right:175px;top:2.6px;font-size:11.5px;line-height:12px;color:#f2f2f2;white-space:nowrap;transform:scaleX(0.925);transform-origin:100% 0;">R33</div><div style="left:78px;top:2.6px;font-size:11.5px;line-height:12px;color:#f2f2f2;white-space:nowrap;transform:scaleX(0.925);transform-origin:0 0;">VEHCar_BMW M4-7000 On Load</div></div>
<div style="left:0;top:561.5px;width:241px;height:17px;background:#1f1f1f;border-bottom:1px solid #6c6c6c;"><div style="left:24px;top:0;width:1px;height:17px;background:#6c6c6c;"></div><div style="left:71px;top:0;width:1px;height:17px;background:#6c6c6c;"></div><div style="left:5px;top:2px;width:12px;height:12px;background:#5a87dc;"></div><div style="right:175px;top:2.6px;font-size:11.5px;line-height:12px;color:#f2f2f2;white-space:nowrap;transform:scaleX(0.925);transform-origin:100% 0;">R34</div><div style="left:78px;top:2.6px;font-size:11.5px;line-height:12px;color:#f2f2f2;white-space:nowrap;transform:scaleX(0.925);transform-origin:0 0;">VEHCar_BMW M4-Start Composite</div></div>
<div style="left:0;top:578.5px;width:241px;height:17px;background:#1f1f1f;border-bottom:1px solid #6c6c6c;"><div style="left:24px;top:0;width:1px;height:17px;background:#6c6c6c;"></div><div style="left:71px;top:0;width:1px;height:17px;background:#6c6c6c;"></div><div style="left:5px;top:2px;width:12px;height:12px;background:#5a87dc;"></div><div style="right:175px;top:2.6px;font-size:11.5px;line-height:12px;color:#f2f2f2;white-space:nowrap;transform:scaleX(0.925);transform-origin:100% 0;">R35</div><div style="left:78px;top:2.6px;font-size:11.5px;line-height:12px;color:#f2f2f2;white-space:nowrap;transform:scaleX(0.925);transform-origin:0 0;">VEHCar_BMW M4-Stop Composite</div></div>
<div style="left:0;top:595.5px;width:241px;height:17px;background:#1f1f1f;border-bottom:1px solid #6c6c6c;"><div style="left:24px;top:0;width:1px;height:17px;background:#6c6c6c;"></div><div style="left:71px;top:0;width:1px;height:17px;background:#6c6c6c;"></div><div style="left:5px;top:2px;width:12px;height:12px;background:#974a24;"></div><div style="right:175px;top:2.6px;font-size:11.5px;line-height:12px;color:#f2f2f2;white-space:nowrap;transform:scaleX(0.925);transform-origin:100% 0;">R56</div><div style="left:78px;top:2.6px;font-size:11.5px;line-height:12px;color:#f2f2f2;white-space:nowrap;transform:scaleX(0.925);transform-origin:0 0;">BMW S1000RR.rpp</div></div>
<div style="left:0;top:612.5px;width:241px;height:17px;background:#1f1f1f;border-bottom:1px solid #6c6c6c;"><div style="left:24px;top:0;width:1px;height:17px;background:#6c6c6c;"></div><div style="left:71px;top:0;width:1px;height:17px;background:#6c6c6c;"></div><div style="left:5px;top:2px;width:12px;height:12px;background:#d47c54;"></div><div style="right:175px;top:2.6px;font-size:11.5px;line-height:12px;color:#f2f2f2;white-space:nowrap;transform:scaleX(0.925);transform-origin:100% 0;">R36</div><div style="left:78px;top:2.6px;font-size:11.5px;line-height:12px;color:#f2f2f2;white-space:nowrap;transform:scaleX(0.925);transform-origin:0 0;">VEHMoto_BMW S1000RR-Idle Composite</div></div>
<div style="left:0;top:629.5px;width:241px;height:17px;background:#1f1f1f;border-bottom:1px solid #6c6c6c;"><div style="left:24px;top:0;width:1px;height:17px;background:#6c6c6c;"></div><div style="left:71px;top:0;width:1px;height:17px;background:#6c6c6c;"></div><div style="left:5px;top:2px;width:12px;height:12px;background:#d47c54;"></div><div style="right:175px;top:2.6px;font-size:11.5px;line-height:12px;color:#f2f2f2;white-space:nowrap;transform:scaleX(0.925);transform-origin:100% 0;">R37</div><div style="left:78px;top:2.6px;font-size:11.5px;line-height:12px;color:#f2f2f2;white-space:nowrap;transform:scaleX(0.925);transform-origin:0 0;">VEHMoto_BMW S1000RR-1300 Off Load</div></div>
<div style="left:0;top:646.5px;width:241px;height:17px;background:#1f1f1f;border-bottom:1px solid #6c6c6c;"><div style="left:24px;top:0;width:1px;height:17px;background:#6c6c6c;"></div><div style="left:71px;top:0;width:1px;height:17px;background:#6c6c6c;"></div><div style="left:5px;top:2px;width:12px;height:12px;background:#d47c54;"></div><div style="right:175px;top:2.6px;font-size:11.5px;line-height:12px;color:#f2f2f2;white-space:nowrap;transform:scaleX(0.925);transform-origin:100% 0;">R38</div><div style="left:78px;top:2.6px;font-size:11.5px;line-height:12px;color:#f2f2f2;white-space:nowrap;transform:scaleX(0.925);transform-origin:0 0;">VEHMoto_BMW S1000RR-2300 Off Load</div></div>
<div style="left:0;top:663.5px;width:241px;height:17px;background:#1f1f1f;border-bottom:1px solid #6c6c6c;"><div style="left:24px;top:0;width:1px;height:17px;background:#6c6c6c;"></div><div style="left:71px;top:0;width:1px;height:17px;background:#6c6c6c;"></div><div style="left:5px;top:2px;width:12px;height:12px;background:#d47c54;"></div><div style="right:175px;top:2.6px;font-size:11.5px;line-height:12px;color:#f2f2f2;white-space:nowrap;transform:scaleX(0.925);transform-origin:100% 0;">R39</div><div style="left:78px;top:2.6px;font-size:11.5px;line-height:12px;color:#f2f2f2;white-space:nowrap;transform:scaleX(0.925);transform-origin:0 0;">VEHMoto_BMW S1000RR-3300 Off Load</div></div>
<div style="left:0;top:680.5px;width:241px;height:17px;background:#1f1f1f;border-bottom:1px solid #6c6c6c;"><div style="left:24px;top:0;width:1px;height:17px;background:#6c6c6c;"></div><div style="left:71px;top:0;width:1px;height:17px;background:#6c6c6c;"></div><div style="left:5px;top:2px;width:12px;height:12px;background:#d47c54;"></div><div style="right:175px;top:2.6px;font-size:11.5px;line-height:12px;color:#f2f2f2;white-space:nowrap;transform:scaleX(0.925);transform-origin:100% 0;">R40</div><div style="left:78px;top:2.6px;font-size:11.5px;line-height:12px;color:#f2f2f2;white-space:nowrap;transform:scaleX(0.925);transform-origin:0 0;">VEHMoto_BMW S1000RR-4300 Off Load</div></div>
<div style="left:0;top:697.5px;width:241px;height:17px;background:#1f1f1f;border-bottom:1px solid #6c6c6c;"><div style="left:24px;top:0;width:1px;height:17px;background:#6c6c6c;"></div><div style="left:71px;top:0;width:1px;height:17px;background:#6c6c6c;"></div><div style="left:5px;top:2px;width:12px;height:12px;background:#d47c54;"></div><div style="right:175px;top:2.6px;font-size:11.5px;line-height:12px;color:#f2f2f2;white-space:nowrap;transform:scaleX(0.925);transform-origin:100% 0;">R41</div><div style="left:78px;top:2.6px;font-size:11.5px;line-height:12px;color:#f2f2f2;white-space:nowrap;transform:scaleX(0.925);transform-origin:0 0;">VEHMoto_BMW S1000RR-5300 Off Load</div></div>
<div style="left:0;top:714.5px;width:241px;height:17px;background:#1f1f1f;border-bottom:1px solid #6c6c6c;"><div style="left:24px;top:0;width:1px;height:17px;background:#6c6c6c;"></div><div style="left:71px;top:0;width:1px;height:17px;background:#6c6c6c;"></div><div style="left:5px;top:2px;width:12px;height:12px;background:#d47c54;"></div><div style="right:175px;top:2.6px;font-size:11.5px;line-height:12px;color:#f2f2f2;white-space:nowrap;transform:scaleX(0.925);transform-origin:100% 0;">R42</div><div style="left:78px;top:2.6px;font-size:11.5px;line-height:12px;color:#f2f2f2;white-space:nowrap;transform:scaleX(0.925);transform-origin:0 0;">VEHMoto_BMW S1000RR-7300 Off Load</div></div>
<div style="left:0;top:731.5px;width:241px;height:17px;background:#1f1f1f;border-bottom:1px solid #6c6c6c;"><div style="left:24px;top:0;width:1px;height:17px;background:#6c6c6c;"></div><div style="left:71px;top:0;width:1px;height:17px;background:#6c6c6c;"></div><div style="left:5px;top:2px;width:12px;height:12px;background:#d47c54;"></div><div style="right:175px;top:2.6px;font-size:11.5px;line-height:12px;color:#f2f2f2;white-space:nowrap;transform:scaleX(0.925);transform-origin:100% 0;">R43</div><div style="left:78px;top:2.6px;font-size:11.5px;line-height:12px;color:#f2f2f2;white-space:nowrap;transform:scaleX(0.925);transform-origin:0 0;">VEHMoto_BMW S1000RR-9300 Off Load</div></div>
</div>
<div style="left:1534px;top:1329px;width:253px;height:15px;background:#282828;"></div>
<svg style="left:0px;top:0px;" width="1787" height="1344" viewBox="0 0 1787 1344"><polygon points="1543,1329 1550,1344 1686,1344 1693,1329" fill="#a7b3ae"/><polygon points="1694,1329 1701,1344 1751,1344 1758,1329" fill="#171717"/><polygon points="1759,1329 1766,1344 1800,1344 1800,1329" fill="#171717"/><rect x="1677.5" y="1332.5" width="8" height="8" fill="none" stroke="#000" stroke-width="1"/><path d="M1679.3 1334.3 L1683.7 1338.7 M1683.7 1334.3 L1679.3 1338.7" stroke="#000" stroke-width="1.1"/><rect x="1742.5" y="1332.5" width="8" height="8" fill="none" stroke="#c4c4c4" stroke-width="1"/><path d="M1744.3 1334.3 L1748.7 1338.7 M1748.7 1334.3 L1744.3 1338.7" stroke="#c4c4c4" stroke-width="1.1"/></svg>
<div style="top:1331.98px;font-size:9px;line-height:9px;color:#e6e6c8;white-space:nowrap;left:1537.3px;">!</div>
<div style="top:1331.54px;font-size:10px;line-height:10px;color:#000;white-space:nowrap;font-weight:bold;letter-spacing:0.211px;left:1553.6px;">Region/Marker Manager</div>
<div style="top:1331.54px;font-size:10px;line-height:10px;color:#c0c0c0;white-space:nowrap;letter-spacing:0.172px;left:1702.5px;">Actions</div>
<div style="top:1331.54px;font-size:10px;line-height:10px;color:#c0c0c0;white-space:nowrap;letter-spacing:0.45px;left:1767px;">FX Browser</div>
</div></body></html>
